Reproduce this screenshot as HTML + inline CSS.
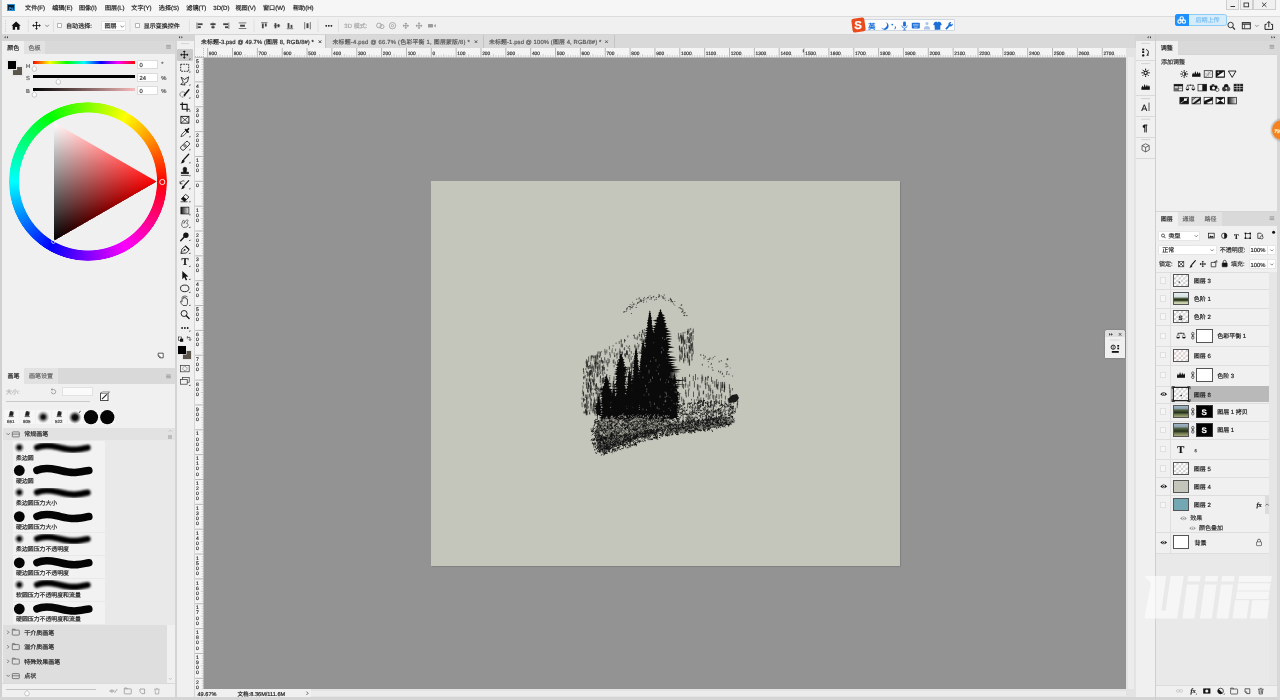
<!DOCTYPE html>
<html lang="zh-CN"><head><meta charset="utf-8"><title>Photoshop</title><style>
html,body{margin:0;padding:0}
body{width:1280px;height:700px;overflow:hidden;background:#d5d5d5;position:relative;font-family:"Liberation Sans","Noto Sans CJK SC",sans-serif;font-size:6px;color:#1a1a1a;text-rendering:geometricPrecision}
#app{position:absolute;left:0;top:0;width:1280px;height:700px;overflow:hidden;will-change:transform;transform:translateZ(0)}
#app div{position:absolute;box-sizing:border-box}
.t{white-space:nowrap;line-height:10px;height:10px;-webkit-text-stroke:0.18px currentColor}
#ov{position:absolute;left:0;top:0}
</style></head>
<body><div id="app">
<div style="left:0px;top:0px;width:1280px;height:16px;background:#f6f6f6;"></div>
<div style="left:0px;top:16px;width:1280px;height:0.8px;background:#dcdcdc;"></div>
<div style="left:0px;top:16.8px;width:1280px;height:17.4px;background:#f0f0f0;"></div>
<div style="left:0px;top:34.2px;width:1280px;height:6.5px;background:#d5d5d5;"></div>
<div style="left:0px;top:0px;width:1.5px;height:700px;background:#d0d0d0;"></div>
<div style="left:1.5px;top:40.7px;width:173px;height:13.7px;background:#d9d9d9;"></div>
<div style="left:1.5px;top:54.4px;width:173px;height:313.6px;background:#f0f0f0;"></div>
<div style="left:2px;top:40.7px;width:21.5px;height:14px;background:#f0f0f0;"></div>
<div style="left:23.5px;top:40.7px;width:21.5px;height:13.7px;background:#e2e2e2;"></div>
<div style="left:1.5px;top:368px;width:173px;height:15.5px;background:#d9d9d9;"></div>
<div style="left:1.5px;top:383.5px;width:173px;height:313.5px;background:#f0f0f0;"></div>
<div style="left:2px;top:368px;width:22.3px;height:15.7px;background:#f0f0f0;"></div>
<div style="left:24.3px;top:368px;width:34px;height:15.5px;background:#e2e2e2;"></div>
<div style="left:174.5px;top:34.2px;width:2px;height:666px;background:#d5d5d5;"></div>
<div style="left:176.5px;top:40.7px;width:17.5px;height:656.3px;background:#f0f0f0;"></div>
<div style="left:194px;top:34.2px;width:1.2px;height:666px;background:#d5d5d5;"></div>
<div style="left:195.2px;top:35px;width:939.8px;height:12.8px;background:#d9d9d9;"></div>
<div style="left:195.2px;top:47.8px;width:930.8px;height:9.2px;background:#f4f4f4;"></div>
<div style="left:195.2px;top:47.8px;width:8.6px;height:641.5px;background:#f4f4f4;"></div>
<div style="left:203.8px;top:57px;width:922.2px;height:632px;background:#939393;"></div>
<div style="left:431px;top:181px;width:469px;height:385px;background:#c5c6bb;box-shadow:0.5px 0.8px 1.5px rgba(0,0,0,.35);"></div>
<div style="left:1126px;top:47.8px;width:9.5px;height:649.2px;background:#e3e3e3;"></div>
<div style="left:1128px;top:57px;width:5.5px;height:632px;background:#ececec;"></div>
<div style="left:195.2px;top:689.3px;width:930.8px;height:7.7px;background:#e3e3e3;"></div>
<div style="left:311px;top:691px;width:815px;height:4.5px;background:#ececec;"></div>
<div style="left:195.2px;top:689.3px;width:115.8px;height:7.7px;background:#f0f0f0;"></div>
<div style="left:0px;top:697px;width:1280px;height:3px;background:#d5d5d5;"></div>
<div style="left:1135.5px;top:40.7px;width:19px;height:656.3px;background:#f0f0f0;"></div>
<div style="left:1154.5px;top:34.2px;width:1.8px;height:666px;background:#cfcfcf;"></div>
<div style="left:1156.3px;top:40.7px;width:121px;height:13.8px;background:#d9d9d9;"></div>
<div style="left:1156.3px;top:54.5px;width:121px;height:156.1px;background:#f0f0f0;"></div>
<div style="left:1156.3px;top:40.7px;width:21.7px;height:14px;background:#f0f0f0;"></div>
<div style="left:1156.3px;top:210.6px;width:121px;height:0.9px;background:#d5d5d5;"></div>
<div style="left:1156.3px;top:211.5px;width:121px;height:14.1px;background:#d9d9d9;"></div>
<div style="left:1156.3px;top:225.6px;width:121px;height:471.4px;background:#f0f0f0;"></div>
<div style="left:1156.3px;top:211.5px;width:21.7px;height:14.3px;background:#f0f0f0;"></div>
<div style="left:1178px;top:211.5px;width:21.7px;height:14.1px;background:#e2e2e2;"></div>
<div style="left:1199.7px;top:211.5px;width:21.9px;height:14.1px;background:#e2e2e2;"></div>
<div style="left:1277.3px;top:34.2px;width:2.7px;height:666px;background:#d8d8d8;"></div>
<div style="left:7px;top:3.8px;width:8.2px;height:7.3px;background:#061f35;border:0.4px solid #2b8fd0;border-radius:0.8px;"></div>
<div class="t" style="left:8.7px;top:3.8px;font-size:4px;color:#2f90d8;font-weight:bold;letter-spacing:-0.2px;">Ps</div>
<div class="t" style="left:25.1px;top:4.1px;font-size:6.1px;color:#222;">文件(F)</div>
<div class="t" style="left:52.2px;top:4.1px;font-size:6.1px;color:#222;">编辑(E)</div>
<div class="t" style="left:78.9px;top:4.1px;font-size:6.1px;color:#222;">图像(I)</div>
<div class="t" style="left:105px;top:4.1px;font-size:6.1px;color:#222;">图层(L)</div>
<div class="t" style="left:131.3px;top:4.1px;font-size:6.1px;color:#222;">文字(Y)</div>
<div class="t" style="left:158.8px;top:4.1px;font-size:6.1px;color:#222;">选择(S)</div>
<div class="t" style="left:186.3px;top:4.1px;font-size:6.1px;color:#222;">滤镜(T)</div>
<div class="t" style="left:213.3px;top:4.1px;font-size:6.1px;color:#222;">3D(D)</div>
<div class="t" style="left:235.5px;top:4.1px;font-size:6.1px;color:#222;">视图(V)</div>
<div class="t" style="left:263px;top:4.1px;font-size:6.1px;color:#222;">窗口(W)</div>
<div class="t" style="left:293px;top:4.1px;font-size:6.1px;color:#222;">帮助(H)</div>
<div style="left:1225.8px;top:0px;width:13.7px;height:9.5px;background:#f0f0f0;border:0.6px solid #cfcfcf;border-top:none;"></div>
<div style="left:1239.5px;top:0px;width:13.5px;height:9.5px;background:#f0f0f0;border:0.6px solid #cfcfcf;border-top:none;"></div>
<div style="left:1253px;top:0px;width:22.5px;height:9.5px;background:#f0f0f0;border:0.6px solid #cfcfcf;border-top:none;"></div>
<div style="left:57.2px;top:22.6px;width:5.2px;height:5.6px;background:#fff;border:0.6px solid #b5b5b5;border-radius:0.8px;"></div>
<div class="t" style="left:66px;top:21.9px;font-size:6.1px;color:#222;">自动选择:</div>
<div style="left:100.6px;top:21.4px;width:25.8px;height:9.8px;background:#fff;border:0.6px solid #e2e2e2;border-radius:1px;"></div>
<div class="t" style="left:104.5px;top:22.4px;font-size:6.1px;color:#222;">图层</div>
<div style="left:135.1px;top:22.6px;width:5.2px;height:5.6px;background:#fff;border:0.6px solid #b5b5b5;border-radius:0.8px;"></div>
<div class="t" style="left:143.8px;top:21.9px;font-size:6px;color:#222;">显示变换控件</div>
<div class="t" style="left:344.3px;top:21.9px;font-size:6px;color:#a8a8a8;">3D 模式:</div>
<div style="left:852px;top:19.1px;width:103.3px;height:12.3px;background:#fdfdfd;border:0.5px solid #cfd8e2;border-radius:1px;"></div>
<div style="left:852px;top:17.9px;width:13.4px;height:13.8px;background:#ea4a1c;border-radius:2.2px;transform:rotate(-8deg);"></div>
<div class="t" style="left:854.3px;top:21.3px;font-size:11.5px;color:#fff;font-weight:bold;line-height:10px;">S</div>
<div class="t" style="left:868.3px;top:22px;font-size:7.2px;color:#1b6fd8;font-weight:bold;">英</div>
<div style="left:1174.5px;top:13.8px;width:52px;height:12.6px;background:#d7ecfb;border-radius:2.5px;border:0.6px solid #8ecbf7;"></div>
<div style="left:1174.5px;top:13.8px;width:14.5px;height:12.6px;background:#1e90ff;border-radius:2.5px 0 0 2.5px;"></div>
<div class="t" style="left:1195.5px;top:16.4px;font-size:6px;color:#7cc0f4;">后期上传</div>
<div style="left:195.2px;top:35px;width:130.1px;height:13px;background:#f0f0f0;"></div>
<div style="left:325.3px;top:35px;width:0.6px;height:12.8px;background:#c4c4c4;"></div>
<div style="left:482.5px;top:35px;width:0.6px;height:12.8px;background:#c4c4c4;"></div>
<div style="left:613.5px;top:35px;width:0.6px;height:12.8px;background:#c4c4c4;"></div>
<div class="t" style="left:201px;top:37.8px;font-size:5.9px;color:#222;letter-spacing:0.075px;">未标题-3.psd @ 49.7% (图层 8, RGB/8#) *</div>
<div class="t" style="left:332.5px;top:37.8px;font-size:5.9px;color:#555;letter-spacing:0.22px;">未标题-4.psd @ 66.7% (色彩平衡 1, 图层蒙版/8) *</div>
<div class="t" style="left:489px;top:37.8px;font-size:5.9px;color:#555;letter-spacing:0.11px;">未标题-1.psd @ 100% (图层 4, RGB/8#) *</div>
<div style="left:195.2px;top:56.6px;width:930.8px;height:0.5px;background:#bdbdbd;"></div>
<div style="left:203.4px;top:47.8px;width:0.5px;height:641.5px;background:#bdbdbd;"></div>
<div style="left:195.2px;top:47.8px;width:8.4px;height:9.2px;background:#f4f4f4;border-right:0.5px dotted #bdbdbd;border-bottom:0.5px dotted #bdbdbd;"></div>
<div class="t" style="left:208.85px;top:49.5px;font-size:4.8px;color:#333;">900</div>
<div class="t" style="left:233.7px;top:49.5px;font-size:4.8px;color:#333;">800</div>
<div class="t" style="left:258.55px;top:49.5px;font-size:4.8px;color:#333;">700</div>
<div class="t" style="left:283.4px;top:49.5px;font-size:4.8px;color:#333;">600</div>
<div class="t" style="left:308.25px;top:49.5px;font-size:4.8px;color:#333;">500</div>
<div class="t" style="left:333.1px;top:49.5px;font-size:4.8px;color:#333;">400</div>
<div class="t" style="left:357.95px;top:49.5px;font-size:4.8px;color:#333;">300</div>
<div class="t" style="left:382.8px;top:49.5px;font-size:4.8px;color:#333;">200</div>
<div class="t" style="left:407.65px;top:49.5px;font-size:4.8px;color:#333;">100</div>
<div class="t" style="left:432.5px;top:49.5px;font-size:4.8px;color:#333;">0</div>
<div class="t" style="left:457.35px;top:49.5px;font-size:4.8px;color:#333;">100</div>
<div class="t" style="left:482.2px;top:49.5px;font-size:4.8px;color:#333;">200</div>
<div class="t" style="left:507.05px;top:49.5px;font-size:4.8px;color:#333;">300</div>
<div class="t" style="left:531.9px;top:49.5px;font-size:4.8px;color:#333;">400</div>
<div class="t" style="left:556.75px;top:49.5px;font-size:4.8px;color:#333;">500</div>
<div class="t" style="left:581.6px;top:49.5px;font-size:4.8px;color:#333;">600</div>
<div class="t" style="left:606.45px;top:49.5px;font-size:4.8px;color:#333;">700</div>
<div class="t" style="left:631.3px;top:49.5px;font-size:4.8px;color:#333;">800</div>
<div class="t" style="left:656.15px;top:49.5px;font-size:4.8px;color:#333;">900</div>
<div class="t" style="left:681px;top:49.5px;font-size:4.8px;color:#333;">1000</div>
<div class="t" style="left:705.85px;top:49.5px;font-size:4.8px;color:#333;">1100</div>
<div class="t" style="left:730.7px;top:49.5px;font-size:4.8px;color:#333;">1200</div>
<div class="t" style="left:755.55px;top:49.5px;font-size:4.8px;color:#333;">1300</div>
<div class="t" style="left:780.4px;top:49.5px;font-size:4.8px;color:#333;">1400</div>
<div class="t" style="left:805.25px;top:49.5px;font-size:4.8px;color:#333;">1500</div>
<div class="t" style="left:830.1px;top:49.5px;font-size:4.8px;color:#333;">1600</div>
<div class="t" style="left:854.95px;top:49.5px;font-size:4.8px;color:#333;">1700</div>
<div class="t" style="left:879.8px;top:49.5px;font-size:4.8px;color:#333;">1800</div>
<div class="t" style="left:904.65px;top:49.5px;font-size:4.8px;color:#333;">1900</div>
<div class="t" style="left:929.5px;top:49.5px;font-size:4.8px;color:#333;">2000</div>
<div class="t" style="left:954.35px;top:49.5px;font-size:4.8px;color:#333;">2100</div>
<div class="t" style="left:979.2px;top:49.5px;font-size:4.8px;color:#333;">2200</div>
<div class="t" style="left:1004.05px;top:49.5px;font-size:4.8px;color:#333;">2300</div>
<div class="t" style="left:1028.9px;top:49.5px;font-size:4.8px;color:#333;">2400</div>
<div class="t" style="left:1053.75px;top:49.5px;font-size:4.8px;color:#333;">2500</div>
<div class="t" style="left:1078.6px;top:49.5px;font-size:4.8px;color:#333;">2600</div>
<div class="t" style="left:1103.45px;top:49.5px;font-size:4.8px;color:#333;">2700</div>
<div class="t" style="left:196px;top:56.65px;font-size:5px;color:#2a2a2a;">5</div>
<div class="t" style="left:196px;top:61.75px;font-size:5px;color:#2a2a2a;">0</div>
<div class="t" style="left:196px;top:66.85px;font-size:5px;color:#2a2a2a;">0</div>
<div class="t" style="left:196px;top:81.5px;font-size:5px;color:#2a2a2a;">4</div>
<div class="t" style="left:196px;top:86.6px;font-size:5px;color:#2a2a2a;">0</div>
<div class="t" style="left:196px;top:91.7px;font-size:5px;color:#2a2a2a;">0</div>
<div class="t" style="left:196px;top:106.35px;font-size:5px;color:#2a2a2a;">3</div>
<div class="t" style="left:196px;top:111.45px;font-size:5px;color:#2a2a2a;">0</div>
<div class="t" style="left:196px;top:116.55px;font-size:5px;color:#2a2a2a;">0</div>
<div class="t" style="left:196px;top:131.2px;font-size:5px;color:#2a2a2a;">2</div>
<div class="t" style="left:196px;top:136.3px;font-size:5px;color:#2a2a2a;">0</div>
<div class="t" style="left:196px;top:141.4px;font-size:5px;color:#2a2a2a;">0</div>
<div class="t" style="left:196px;top:156.05px;font-size:5px;color:#2a2a2a;">1</div>
<div class="t" style="left:196px;top:161.15px;font-size:5px;color:#2a2a2a;">0</div>
<div class="t" style="left:196px;top:166.25px;font-size:5px;color:#2a2a2a;">0</div>
<div class="t" style="left:196px;top:180.9px;font-size:5px;color:#2a2a2a;">0</div>
<div class="t" style="left:196px;top:205.75px;font-size:5px;color:#2a2a2a;">1</div>
<div class="t" style="left:196px;top:210.85px;font-size:5px;color:#2a2a2a;">0</div>
<div class="t" style="left:196px;top:215.95px;font-size:5px;color:#2a2a2a;">0</div>
<div class="t" style="left:196px;top:230.6px;font-size:5px;color:#2a2a2a;">2</div>
<div class="t" style="left:196px;top:235.7px;font-size:5px;color:#2a2a2a;">0</div>
<div class="t" style="left:196px;top:240.8px;font-size:5px;color:#2a2a2a;">0</div>
<div class="t" style="left:196px;top:255.45px;font-size:5px;color:#2a2a2a;">3</div>
<div class="t" style="left:196px;top:260.55px;font-size:5px;color:#2a2a2a;">0</div>
<div class="t" style="left:196px;top:265.65px;font-size:5px;color:#2a2a2a;">0</div>
<div class="t" style="left:196px;top:280.3px;font-size:5px;color:#2a2a2a;">4</div>
<div class="t" style="left:196px;top:285.4px;font-size:5px;color:#2a2a2a;">0</div>
<div class="t" style="left:196px;top:290.5px;font-size:5px;color:#2a2a2a;">0</div>
<div class="t" style="left:196px;top:305.15px;font-size:5px;color:#2a2a2a;">5</div>
<div class="t" style="left:196px;top:310.25px;font-size:5px;color:#2a2a2a;">0</div>
<div class="t" style="left:196px;top:315.35px;font-size:5px;color:#2a2a2a;">0</div>
<div class="t" style="left:196px;top:330px;font-size:5px;color:#2a2a2a;">6</div>
<div class="t" style="left:196px;top:335.1px;font-size:5px;color:#2a2a2a;">0</div>
<div class="t" style="left:196px;top:340.2px;font-size:5px;color:#2a2a2a;">0</div>
<div class="t" style="left:196px;top:354.85px;font-size:5px;color:#2a2a2a;">7</div>
<div class="t" style="left:196px;top:359.95px;font-size:5px;color:#2a2a2a;">0</div>
<div class="t" style="left:196px;top:365.05px;font-size:5px;color:#2a2a2a;">0</div>
<div class="t" style="left:196px;top:379.7px;font-size:5px;color:#2a2a2a;">8</div>
<div class="t" style="left:196px;top:384.8px;font-size:5px;color:#2a2a2a;">0</div>
<div class="t" style="left:196px;top:389.9px;font-size:5px;color:#2a2a2a;">0</div>
<div class="t" style="left:196px;top:404.55px;font-size:5px;color:#2a2a2a;">9</div>
<div class="t" style="left:196px;top:409.65px;font-size:5px;color:#2a2a2a;">0</div>
<div class="t" style="left:196px;top:414.75px;font-size:5px;color:#2a2a2a;">0</div>
<div class="t" style="left:196px;top:429.4px;font-size:5px;color:#2a2a2a;">1</div>
<div class="t" style="left:196px;top:434.5px;font-size:5px;color:#2a2a2a;">0</div>
<div class="t" style="left:196px;top:439.6px;font-size:5px;color:#2a2a2a;">0</div>
<div class="t" style="left:196px;top:444.7px;font-size:5px;color:#2a2a2a;">0</div>
<div class="t" style="left:196px;top:454.25px;font-size:5px;color:#2a2a2a;">1</div>
<div class="t" style="left:196px;top:459.35px;font-size:5px;color:#2a2a2a;">1</div>
<div class="t" style="left:196px;top:464.45px;font-size:5px;color:#2a2a2a;">0</div>
<div class="t" style="left:196px;top:469.55px;font-size:5px;color:#2a2a2a;">0</div>
<div class="t" style="left:196px;top:479.1px;font-size:5px;color:#2a2a2a;">1</div>
<div class="t" style="left:196px;top:484.2px;font-size:5px;color:#2a2a2a;">2</div>
<div class="t" style="left:196px;top:489.3px;font-size:5px;color:#2a2a2a;">0</div>
<div class="t" style="left:196px;top:494.4px;font-size:5px;color:#2a2a2a;">0</div>
<div class="t" style="left:196px;top:503.95px;font-size:5px;color:#2a2a2a;">1</div>
<div class="t" style="left:196px;top:509.05px;font-size:5px;color:#2a2a2a;">3</div>
<div class="t" style="left:196px;top:514.15px;font-size:5px;color:#2a2a2a;">0</div>
<div class="t" style="left:196px;top:519.25px;font-size:5px;color:#2a2a2a;">0</div>
<div class="t" style="left:196px;top:528.8px;font-size:5px;color:#2a2a2a;">1</div>
<div class="t" style="left:196px;top:533.9px;font-size:5px;color:#2a2a2a;">4</div>
<div class="t" style="left:196px;top:539px;font-size:5px;color:#2a2a2a;">0</div>
<div class="t" style="left:196px;top:544.1px;font-size:5px;color:#2a2a2a;">0</div>
<div class="t" style="left:196px;top:553.65px;font-size:5px;color:#2a2a2a;">1</div>
<div class="t" style="left:196px;top:558.75px;font-size:5px;color:#2a2a2a;">5</div>
<div class="t" style="left:196px;top:563.85px;font-size:5px;color:#2a2a2a;">0</div>
<div class="t" style="left:196px;top:568.95px;font-size:5px;color:#2a2a2a;">0</div>
<div class="t" style="left:196px;top:578.5px;font-size:5px;color:#2a2a2a;">1</div>
<div class="t" style="left:196px;top:583.6px;font-size:5px;color:#2a2a2a;">6</div>
<div class="t" style="left:196px;top:588.7px;font-size:5px;color:#2a2a2a;">0</div>
<div class="t" style="left:196px;top:593.8px;font-size:5px;color:#2a2a2a;">0</div>
<div class="t" style="left:196px;top:603.35px;font-size:5px;color:#2a2a2a;">1</div>
<div class="t" style="left:196px;top:608.45px;font-size:5px;color:#2a2a2a;">7</div>
<div class="t" style="left:196px;top:613.55px;font-size:5px;color:#2a2a2a;">0</div>
<div class="t" style="left:196px;top:618.65px;font-size:5px;color:#2a2a2a;">0</div>
<div class="t" style="left:196px;top:628.2px;font-size:5px;color:#2a2a2a;">1</div>
<div class="t" style="left:196px;top:633.3px;font-size:5px;color:#2a2a2a;">8</div>
<div class="t" style="left:196px;top:638.4px;font-size:5px;color:#2a2a2a;">0</div>
<div class="t" style="left:196px;top:643.5px;font-size:5px;color:#2a2a2a;">0</div>
<div class="t" style="left:196px;top:653.05px;font-size:5px;color:#2a2a2a;">1</div>
<div class="t" style="left:196px;top:658.15px;font-size:5px;color:#2a2a2a;">9</div>
<div class="t" style="left:196px;top:663.25px;font-size:5px;color:#2a2a2a;">0</div>
<div class="t" style="left:196px;top:668.35px;font-size:5px;color:#2a2a2a;">0</div>
<div class="t" style="left:196px;top:677.9px;font-size:5px;color:#2a2a2a;">2</div>
<div class="t" style="left:196px;top:683px;font-size:5px;color:#2a2a2a;">0</div>
<div class="t" style="left:197.5px;top:689.5px;font-size:5.6px;color:#222;">49.67%</div>
<div class="t" style="left:237.5px;top:689.5px;font-size:5.6px;color:#222;">文档:8.36M/111.6M</div>
<div style="left:1104.5px;top:330px;width:20px;height:28px;background:#f0f0f0;border-radius:2.5px 2.5px 0 0;box-shadow:0 0 1.5px rgba(0,0,0,.35);overflow:hidden;"></div>
<div style="left:1104.5px;top:330px;width:20px;height:7.2px;background:#dedede;border-radius:2.5px 2.5px 0 0;"></div>
<div style="left:1271px;top:119.2px;width:22px;height:22px;background:#f5821f;border-radius:11px;border:0.8px solid #c9c9c9;box-shadow:0 0 2px rgba(0,0,0,.3);"></div>
<div class="t" style="left:1274.2px;top:126.5px;font-size:5px;color:#fff3c4;font-weight:bold;font-style:italic;">79</div>
<div class="t" style="left:7.2px;top:43.5px;font-size:6px;color:#222;">颜色</div>
<div class="t" style="left:28.6px;top:43.5px;font-size:6px;color:#666;">色板</div>
<div style="left:13.2px;top:66.6px;width:8.6px;height:8.6px;background:#5b554b;box-shadow:0 0 0 0.7px #f6f6f6,0 0 0 1.1px #cfcfcf;"></div>
<div style="left:7.6px;top:61.4px;width:8.7px;height:8.1px;background:#000;box-shadow:0 0 0 0.7px #f6f6f6,0 0 0 1.1px #cfcfcf;"></div>
<div class="t" style="left:26px;top:61.5px;font-size:5.8px;color:#555;">H</div>
<div class="t" style="left:26px;top:74.4px;font-size:5.8px;color:#555;">S</div>
<div class="t" style="left:26px;top:87.4px;font-size:5.8px;color:#555;">B</div>
<div style="left:33.1px;top:61.2px;width:101.8px;height:3.2px;background:linear-gradient(to right,#f00,#ff0 16.6%,#0f0 33.3%,#0ff 50%,#00f 66.6%,#f0f 83.3%,#f00);"></div>
<div style="left:33.1px;top:74.7px;width:101.8px;height:3.2px;background:#000;"></div>
<div style="left:33.1px;top:87.6px;width:101.8px;height:3.2px;background:linear-gradient(to right,#000,#7a5c5c 50%,#f7bcbc);"></div>
<div style="left:137.1px;top:59.7px;width:20.6px;height:9.6px;background:#fff;border:0.6px solid #dcdcdc;"></div>
<div class="t" style="left:139.6px;top:61px;font-size:5.8px;color:#333;">0</div>
<div class="t" style="left:161.3px;top:59.5px;font-size:5.8px;color:#444;">°</div>
<div style="left:137.1px;top:72.7px;width:20.6px;height:9.6px;background:#fff;border:0.6px solid #dcdcdc;"></div>
<div class="t" style="left:139.6px;top:74px;font-size:5.8px;color:#333;">24</div>
<div class="t" style="left:161.3px;top:74px;font-size:5.8px;color:#444;">%</div>
<div style="left:137.1px;top:85.7px;width:20.6px;height:9.6px;background:#fff;border:0.6px solid #dcdcdc;"></div>
<div class="t" style="left:139.6px;top:87px;font-size:5.8px;color:#333;">0</div>
<div class="t" style="left:161.3px;top:87px;font-size:5.8px;color:#444;">%</div>
<div style="left:8.599999999999994px;top:102.19999999999999px;width:158.8px;height:158.8px;border-radius:50%;background:conic-gradient(from 90deg,#f00,#f0f,#00f,#0ff,#0f0,#ff0,#f00);-webkit-mask:radial-gradient(circle,transparent 68.6px,#000 69.4px,#000 78.9px,transparent 79.7px);mask:radial-gradient(circle,transparent 68.6px,#000 69.4px,#000 78.9px,transparent 79.7px);"></div>
<div style="left:53.7px;top:122.2px;width:102.9px;height:118.8px;clip-path:polygon(0 0,100% 50%,0 100%);background:linear-gradient(to right,rgba(255,0,0,0),rgba(255,0,0,1)),conic-gradient(from 240deg at 100% 50%,#000 0deg,#404040 13.9deg,#808080 30deg,#bfbfbf 46.1deg,#fff 60deg,#fff 360deg);"></div>
<div class="t" style="left:7.6px;top:372.4px;font-size:6px;color:#222;">画笔</div>
<div class="t" style="left:29px;top:372.4px;font-size:6px;color:#666;">画笔设置</div>
<div class="t" style="left:6px;top:387.8px;font-size:6px;color:#b4b4b4;">大小:</div>
<div style="left:61.9px;top:386.7px;width:31.2px;height:9.8px;background:#fafafa;border:0.6px solid #e2e2e2;"></div>
<div style="left:6px;top:401.4px;width:84px;height:0.8px;background:#c9c9c9;"></div>
<div style="left:3.6px;top:409.8px;width:15.4px;height:14.6px;background:#f6f6f6;"></div>
<div style="left:19.6px;top:409.8px;width:15.4px;height:14.6px;background:#f6f6f6;"></div>
<div style="left:35.6px;top:409.8px;width:15.4px;height:14.6px;background:#f6f6f6;"></div>
<div style="left:51.6px;top:409.8px;width:15.4px;height:14.6px;background:#f6f6f6;"></div>
<div style="left:67.6px;top:409.8px;width:15.4px;height:14.6px;background:#f6f6f6;"></div>
<div style="left:83.6px;top:409.8px;width:15.4px;height:14.6px;background:#f6f6f6;"></div>
<div style="left:99.6px;top:409.8px;width:15.4px;height:14.6px;background:#f6f6f6;"></div>
<div class="t" style="left:7px;top:417.4px;font-size:4.4px;color:#333;">651</div>
<div class="t" style="left:23px;top:417.4px;font-size:4.4px;color:#333;">905</div>
<div class="t" style="left:55px;top:417.4px;font-size:4.4px;color:#333;">522</div>
<div style="left:3px;top:428px;width:171.5px;height:12.2px;background:#e2e2e2;"></div>
<div class="t" style="left:24.3px;top:430.4px;font-size:6px;color:#222;">常规画笔</div>
<div style="left:3px;top:440.2px;width:171.5px;height:184.4px;background:#e9e9e9;"></div>
<div style="left:13.3px;top:441.3px;width:91.6px;height:21.3px;background:#f2f2f2;"></div>
<div class="t" style="left:16px;top:454.1px;font-size:5.9px;color:#222;">柔边圆</div>
<div style="left:13.3px;top:463.2px;width:91.6px;height:22.4px;background:#f2f2f2;"></div>
<div class="t" style="left:16px;top:476.8px;font-size:5.9px;color:#222;">硬边圆</div>
<div style="left:13.3px;top:486.2px;width:91.6px;height:22.5px;background:#f2f2f2;"></div>
<div class="t" style="left:16px;top:499px;font-size:5.9px;color:#222;">柔边圆压力大小</div>
<div style="left:13.3px;top:509.3px;width:91.6px;height:22.7px;background:#f2f2f2;"></div>
<div class="t" style="left:16px;top:522.9px;font-size:5.9px;color:#222;">硬边圆压力大小</div>
<div style="left:13.3px;top:532.6px;width:91.6px;height:22.3px;background:#f2f2f2;"></div>
<div class="t" style="left:16px;top:545.4px;font-size:5.9px;color:#222;">柔边圆压力不透明度</div>
<div style="left:13.3px;top:555.5px;width:91.6px;height:22.5px;background:#f2f2f2;"></div>
<div class="t" style="left:16px;top:569.1px;font-size:5.9px;color:#222;">硬边圆压力不透明度</div>
<div style="left:13.3px;top:578.6px;width:91.6px;height:22.5px;background:#f2f2f2;"></div>
<div class="t" style="left:16px;top:591.4px;font-size:5.9px;color:#222;">软圆压力不透明度和流量</div>
<div style="left:13.3px;top:601.7px;width:91.6px;height:22.3px;background:#f2f2f2;"></div>
<div class="t" style="left:16px;top:615.3px;font-size:5.9px;color:#222;">硬圆压力不透明度和流量</div>
<div style="left:3px;top:624.6px;width:164px;height:58px;background:#dedede;"></div>
<div class="t" style="left:24.3px;top:628.5px;font-size:6px;color:#222;">干介质画笔</div>
<div class="t" style="left:24.3px;top:643px;font-size:6px;color:#222;">湿介质画笔</div>
<div class="t" style="left:24.3px;top:657.5px;font-size:6px;color:#222;">特殊效果画笔</div>
<div class="t" style="left:24.3px;top:672px;font-size:6px;color:#222;">点状</div>
<div style="left:168.3px;top:434.8px;width:4px;height:4.2px;background:#bdbdbd;"></div>
<div style="left:1.5px;top:683px;width:173px;height:0.6px;background:#dadada;"></div>
<div style="left:6.4px;top:688.6px;width:90px;height:0.8px;background:#c4c4c4;"></div>
<div style="left:177px;top:48.6px;width:15.8px;height:12.4px;background:#c9c9c9;border-radius:1.2px;"></div>
<div class="t" style="left:181.5px;top:258.42px;font-size:10.5px;color:#141414;font-family:'Liberation Serif',serif;font-weight:bold;line-height:10px;">T</div>
<div style="left:182.9px;top:350.6px;width:8.6px;height:8.6px;background:#5b554b;box-shadow:0 0 0 0.6px #d8d8d8;"></div>
<div style="left:177.7px;top:345.7px;width:8.7px;height:8.7px;background:#000;box-shadow:0 0 0 0.6px #e4e4e4;"></div>
<div style="left:1135.5px;top:60.2px;width:19px;height:0.6px;background:#d9d9d9;"></div>
<div style="left:1135.5px;top:95.4px;width:19px;height:0.6px;background:#d9d9d9;"></div>
<div class="t" style="left:1141.2px;top:103px;font-size:9px;color:#141414;line-height:10px;">A</div>
<div style="left:1135.5px;top:116px;width:19px;height:0.6px;background:#d9d9d9;"></div>
<div class="t" style="left:1142.4px;top:123.4px;font-size:9px;color:#141414;font-weight:bold;line-height:10px;">¶</div>
<div style="left:1135.5px;top:136.5px;width:19px;height:0.6px;background:#d9d9d9;"></div>
<div style="left:1135.5px;top:157.5px;width:19px;height:0.6px;background:#d9d9d9;"></div>
<div class="t" style="left:1160.8px;top:43.6px;font-size:6px;color:#222;">调整</div>
<div class="t" style="left:1161px;top:57.6px;font-size:6px;color:#333;">添加调整</div>
<div class="t" style="left:1160.8px;top:214.8px;font-size:6px;color:#222;">图层</div>
<div class="t" style="left:1182.6px;top:214.8px;font-size:6px;color:#666;">通道</div>
<div class="t" style="left:1204.4px;top:214.8px;font-size:6px;color:#666;">路径</div>
<div style="left:1158px;top:230.7px;width:42.3px;height:10.2px;background:#fff;border:0.6px solid #e6e6e6;border-radius:1px;"></div>
<div class="t" style="left:1168.6px;top:232.1px;font-size:6px;color:#222;">类型</div>
<div class="t" style="left:1234.1px;top:232.4px;font-size:7px;color:#141414;font-family:'Liberation Serif',serif;font-weight:bold;">T</div>
<div style="left:1158px;top:244.9px;width:58.5px;height:10.2px;background:#fff;border:0.6px solid #e6e6e6;border-radius:1px;"></div>
<div class="t" style="left:1162.2px;top:246.4px;font-size:6px;color:#222;">正常</div>
<div class="t" style="left:1219.8px;top:246.4px;font-size:6px;color:#333;">不透明度:</div>
<div style="left:1248.6px;top:244.9px;width:19.4px;height:10.2px;background:#fff;border:0.6px solid #e6e6e6;border-radius:1px 0 0 1px;"></div>
<div style="left:1268px;top:244.9px;width:7.6px;height:10.2px;background:#fff;border:0.6px solid #e6e6e6;border-left:none;border-radius:0 1px 1px 0;"></div>
<div class="t" style="left:1250.6px;top:246.4px;font-size:5.8px;color:#222;">100%</div>
<div class="t" style="left:1159px;top:260.4px;font-size:6px;color:#333;">锁定:</div>
<div class="t" style="left:1231px;top:260.4px;font-size:6px;color:#333;">填充:</div>
<div style="left:1248.6px;top:259px;width:19.4px;height:10.2px;background:#fff;border:0.6px solid #e6e6e6;border-radius:1px 0 0 1px;"></div>
<div style="left:1268px;top:259px;width:7.6px;height:10.2px;background:#fff;border:0.6px solid #e6e6e6;border-left:none;border-radius:0 1px 1px 0;"></div>
<div class="t" style="left:1250.6px;top:260.5px;font-size:5.8px;color:#222;">100%</div>
<div style="left:1156.3px;top:552.5px;width:113px;height:133px;background:#e9e9e9;"></div>
<div style="left:1269.4px;top:271.6px;width:7.9px;height:413.9px;background:#e6e6e6;"></div>
<div style="left:1156.3px;top:271.6px;width:113px;height:0.5px;background:#dedede;"></div>
<div style="left:1156.3px;top:289.4px;width:113px;height:0.5px;background:#dedede;"></div>
<div style="left:1156.3px;top:307.5px;width:113px;height:0.5px;background:#dedede;"></div>
<div style="left:1156.3px;top:325.4px;width:113px;height:0.5px;background:#dedede;"></div>
<div style="left:1156.3px;top:346px;width:113px;height:0.5px;background:#dedede;"></div>
<div style="left:1156.3px;top:364.6px;width:113px;height:0.5px;background:#dedede;"></div>
<div style="left:1156.3px;top:385.8px;width:113px;height:0.5px;background:#dedede;"></div>
<div style="left:1156.3px;top:402.5px;width:113px;height:0.5px;background:#dedede;"></div>
<div style="left:1156.3px;top:420.8px;width:113px;height:0.5px;background:#dedede;"></div>
<div style="left:1156.3px;top:438.8px;width:113px;height:0.5px;background:#dedede;"></div>
<div style="left:1156.3px;top:459.4px;width:113px;height:0.5px;background:#dedede;"></div>
<div style="left:1156.3px;top:477.4px;width:113px;height:0.5px;background:#dedede;"></div>
<div style="left:1156.3px;top:495.4px;width:113px;height:0.5px;background:#dedede;"></div>
<div style="left:1156.3px;top:532.4px;width:113px;height:0.5px;background:#dedede;"></div>
<div style="left:1156.3px;top:552.5px;width:113px;height:0.5px;background:#dedede;"></div>
<div style="left:1170.2px;top:271.6px;width:0.5px;height:281px;background:#dedede;"></div>
<div style="left:1170.7px;top:385.8px;width:98.7px;height:16.7px;background:#b9b9b9;"></div>
<div style="left:1160.1px;top:277.3px;width:6.4px;height:6.4px;background:#f6f6f6;border:0.5px solid #e0e0e0;"></div>
<div style="left:1173px;top:273.7px;width:16.2px;height:13.6px;border:0.7px solid #555;background:#fff;background-image:linear-gradient(45deg,#ccc 25%,transparent 25%,transparent 75%,#ccc 75%),linear-gradient(45deg,#ccc 25%,transparent 25%,transparent 75%,#ccc 75%);background-size:4.6px 4.6px;background-position:0 0,2.3px 2.3px;"></div>
<div class="t" style="left:1193.8px;top:276.9px;font-size:6px;color:#1a1a1a;">图层 3</div>
<div style="left:1160.1px;top:295.25px;width:6.4px;height:6.4px;background:#f6f6f6;border:0.5px solid #e0e0e0;"></div>
<div style="left:1173px;top:291.65px;width:16.2px;height:13.6px;border:0.7px solid #555;background:linear-gradient(to bottom,#e6eef1 0%,#d6e1e4 36%,#5a6b48 47%,#1f2a17 62%,#4b5a36 72%,#b9c19a 81%,#d6dabb 100%);"></div>
<div class="t" style="left:1193.8px;top:294.85px;font-size:6px;color:#1a1a1a;">色阶 1</div>
<div style="left:1160.1px;top:313.25px;width:6.4px;height:6.4px;background:#f6f6f6;border:0.5px solid #e0e0e0;"></div>
<div style="left:1173px;top:309.65px;width:16.2px;height:13.6px;border:0.7px solid #555;background:#fff;background-image:linear-gradient(45deg,#ccc 25%,transparent 25%,transparent 75%,#ccc 75%),linear-gradient(45deg,#ccc 25%,transparent 25%,transparent 75%,#ccc 75%);background-size:4.6px 4.6px;background-position:0 0,2.3px 2.3px;"></div>
<div class="t" style="left:1178.6px;top:313.85px;font-size:6.2px;color:#111;font-weight:bold;">S</div>
<div class="t" style="left:1193.8px;top:312.85px;font-size:6px;color:#1a1a1a;">色阶 2</div>
<div style="left:1160.1px;top:332.5px;width:6.4px;height:6.4px;background:#f6f6f6;border:0.5px solid #e0e0e0;"></div>
<div style="left:1196.4px;top:328.5px;width:16.2px;height:14.4px;border:0.7px solid #555;background:#fff;"></div>
<div class="t" style="left:1217.2px;top:332.1px;font-size:6px;color:#1a1a1a;">色彩平衡 1</div>
<div style="left:1160.1px;top:352.1px;width:6.4px;height:6.4px;background:#f6f6f6;border:0.5px solid #e0e0e0;"></div>
<div style="left:1173px;top:348.5px;width:16.2px;height:13.6px;border:0.7px solid #555;background:#fff;background-image:linear-gradient(45deg,#d9c9c9 25%,transparent 25%,transparent 75%,#d9c9c9 75%),linear-gradient(45deg,#d9c9c9 25%,transparent 25%,transparent 75%,#d9c9c9 75%);background-size:4.6px 4.6px;background-position:0 0,2.3px 2.3px;"></div>
<div class="t" style="left:1193.8px;top:351.7px;font-size:6px;color:#1a1a1a;">图层 6</div>
<div style="left:1160.1px;top:372px;width:6.4px;height:6.4px;background:#f6f6f6;border:0.5px solid #e0e0e0;"></div>
<div style="left:1196.4px;top:368px;width:16.2px;height:14.4px;border:0.7px solid #555;background:#fff;"></div>
<div class="t" style="left:1217.2px;top:371.6px;font-size:6px;color:#1a1a1a;">色阶 3</div>
<div style="left:1173px;top:387.35px;width:16.2px;height:13.6px;border:0.7px solid #222;background:#fff;background-image:linear-gradient(45deg,#ccc 25%,transparent 25%,transparent 75%,#ccc 75%),linear-gradient(45deg,#ccc 25%,transparent 25%,transparent 75%,#ccc 75%);background-size:4.6px 4.6px;background-position:0 0,2.3px 2.3px;"></div>
<div class="t" style="left:1193.8px;top:390.55px;font-size:6px;color:#1a1a1a;">图层 8</div>
<div style="left:1160.1px;top:408.45px;width:6.4px;height:6.4px;background:#f6f6f6;border:0.5px solid #e0e0e0;"></div>
<div style="left:1173px;top:404.85px;width:16.2px;height:13.6px;border:0.7px solid #555;background:linear-gradient(to bottom,#9fb6c8 0%,#8da2ae 22%,#4f5e3c 38%,#26301c 60%,#6f7c4e 78%,#a9a67e 100%);"></div>
<div style="left:1196.4px;top:404.85px;width:16.2px;height:13.6px;border:0.7px solid #333;background:#000;"></div>
<div class="t" style="left:1201.6px;top:407.95px;font-size:8px;color:#fff;font-weight:bold;">S</div>
<div class="t" style="left:1217.2px;top:408.05px;font-size:6px;color:#1a1a1a;">图层 1 拷贝</div>
<div style="left:1160.1px;top:426.6px;width:6.4px;height:6.4px;background:#f6f6f6;border:0.5px solid #e0e0e0;"></div>
<div style="left:1173px;top:423px;width:16.2px;height:13.6px;border:0.7px solid #555;background:linear-gradient(to bottom,#9fb6c8 0%,#8da2ae 22%,#4f5e3c 38%,#26301c 60%,#6f7c4e 78%,#a9a67e 100%);"></div>
<div style="left:1196.4px;top:423px;width:16.2px;height:13.6px;border:0.7px solid #333;background:#000;"></div>
<div class="t" style="left:1201.6px;top:426.1px;font-size:8px;color:#fff;font-weight:bold;">S</div>
<div class="t" style="left:1217.2px;top:426.2px;font-size:6px;color:#1a1a1a;">图层 1</div>
<div style="left:1160.1px;top:445.9px;width:6.4px;height:6.4px;background:#f6f6f6;border:0.5px solid #e0e0e0;"></div>
<div class="t" style="left:1177.2px;top:445.7px;font-size:10.5px;color:#141414;font-family:'Liberation Serif',serif;font-weight:bold;">T</div>
<div class="t" style="left:1194.4px;top:445.7px;font-size:5px;color:#222;">s</div>
<div style="left:1160.1px;top:465.2px;width:6.4px;height:6.4px;background:#f6f6f6;border:0.5px solid #e0e0e0;"></div>
<div style="left:1173px;top:461.6px;width:16.2px;height:13.6px;border:0.7px solid #555;background:#fff;background-image:linear-gradient(45deg,#ccc 25%,transparent 25%,transparent 75%,#ccc 75%),linear-gradient(45deg,#ccc 25%,transparent 25%,transparent 75%,#ccc 75%);background-size:4.6px 4.6px;background-position:0 0,2.3px 2.3px;"></div>
<div class="t" style="left:1193.8px;top:464.8px;font-size:6px;color:#1a1a1a;">图层 5</div>
<div style="left:1173px;top:479.6px;width:16.2px;height:13.6px;border:0.7px solid #555;background:#c5c6bb;"></div>
<div class="t" style="left:1193.8px;top:482.8px;font-size:6px;color:#1a1a1a;">图层 4</div>
<div style="left:1160.1px;top:501.5px;width:6.4px;height:6.4px;background:#f6f6f6;border:0.5px solid #e0e0e0;"></div>
<div style="left:1173px;top:497.9px;width:16.2px;height:13.6px;border:0.7px solid #555;background:#73a7b4;"></div>
<div class="t" style="left:1193.8px;top:501.1px;font-size:6px;color:#1a1a1a;">图层 2</div>
<div class="t" style="left:1256.4px;top:500.9px;font-size:6.4px;color:#222;font-style:italic;font-family:'Liberation Serif',serif;font-weight:bold;">fx</div>
<div style="left:1265px;top:495.9px;width:4.4px;height:18px;background:#dcdcdc;"></div>
<div class="t" style="left:1190.2px;top:514.4px;font-size:6px;color:#333;">效果</div>
<div class="t" style="left:1199px;top:524.4px;font-size:6px;color:#333;">颜色叠加</div>
<div style="left:1173px;top:535.45px;width:16.2px;height:14px;border:0.7px solid #555;background:#fff;"></div>
<div class="t" style="left:1194.6px;top:538.85px;font-size:6px;color:#1a1a1a;">背景</div>
<div style="left:1156.3px;top:685.4px;width:121px;height:0.6px;background:#dcdcdc;"></div>
<div class="t" style="left:1190.4px;top:687.2px;font-size:6.6px;color:#222;font-style:italic;font-family:'Liberation Serif',serif;font-weight:bold;">fx</div>
<svg id="ov" width="1280" height="700" viewBox="0 0 1280 700">
<path d="M1230.5 6.5h4.5" stroke="#333" stroke-width="1" fill="none"/>
<rect x="1244" y="3" width="4.6" height="3.8" stroke="#333" stroke-width="0.9" fill="none"/>
<path d="M1262 2.6l4.4 4.2M1266.4 2.6l-4.4 4.2" stroke="#333" stroke-width="0.9" fill="none"/>
<path d="M5.5 20v12" stroke="#c8c8c8" stroke-width="0.8" stroke-dasharray="0.8 0.8"/>
<path d="M11.5 25.8l4.6-4.3 4.6 4.3h-1.2v3.9h-2.4v-2.6h-2v2.6h-2.4v-3.9z" fill="#111"/>
<path d="M28.3 19.5v12.5M53.4 19.5v12.5M130 19.5v12.5M189.4 19.5v12.5M254 19.5v12.5M318 19.5v12.5M338.5 19.5v12.5" stroke="#d9d9d9" stroke-width="0.7"/>
<path d="M32.9 25.6h7.2M36.5 22.0v7.2" stroke="#111" stroke-width="0.9" fill="none"/>
<path d="M32.3 25.6l1.5 -1.5v3.0zM40.7 25.6l-1.5 -1.5v3.0zM36.5 21.4l-1.5 1.5h3.0zM36.5 29.800000000000004l-1.5 -1.5h3.0z" fill="#111"/>
<path d="M45.3 24.8l1.8 1.8 1.8-1.8" stroke="#555" stroke-width="0.7" fill="none"/>
<path d="M120.5 25.6l1.7 1.7 1.7-1.7" stroke="#555" stroke-width="0.7" fill="none"/>
<path d="M197 22.5v6.4" stroke="#444" stroke-width="0.7"/><rect x="197.8" y="23.3" width="4.8" height="1.8" fill="#444"/><rect x="197.8" y="26.3" width="3" height="1.8" fill="#444"/>
<path d="M213 22.5v6.4" stroke="#444" stroke-width="0.7"/><rect x="210.4" y="23.3" width="5.2" height="1.8" fill="#444"/><rect x="211.4" y="26.3" width="3.2" height="1.8" fill="#444"/>
<path d="M228.8 22.5v6.4" stroke="#444" stroke-width="0.7"/><rect x="223.20000000000002" y="23.3" width="4.8" height="1.8" fill="#444"/><rect x="225.0" y="26.3" width="3" height="1.8" fill="#444"/>
<path d="M238.7 22.9h7.6M238.7 28.5h7.6" stroke="#444" stroke-width="0.7"/><rect x="240.1" y="24.7" width="4.8" height="2" fill="#444"/>
<path d="M261.1 22.7h6.4" stroke="#444" stroke-width="0.7"/><rect x="261.90000000000003" y="23.5" width="1.8" height="4.8" fill="#444"/><rect x="264.90000000000003" y="23.5" width="1.8" height="3" fill="#444"/>
<path d="M273.8 25.7h6.4" stroke="#444" stroke-width="0.7"/><rect x="274.6" y="23.099999999999998" width="1.8" height="5.2" fill="#444"/><rect x="277.6" y="24.099999999999998" width="1.8" height="3.2" fill="#444"/>
<path d="M286.8 28.7h6.4" stroke="#444" stroke-width="0.7"/><rect x="287.6" y="23.099999999999998" width="1.8" height="4.8" fill="#444"/><rect x="290.6" y="24.9" width="1.8" height="3" fill="#444"/>
<path d="M304.7 22.099999999999998v7.2M310.3 22.099999999999998v7.2" stroke="#444" stroke-width="0.7"/><rect x="306.5" y="23.3" width="2" height="4.8" fill="#444"/>
<circle cx="326.2" cy="25.8" r="0.9" fill="#111"/>
<circle cx="328.8" cy="25.8" r="0.9" fill="#111"/>
<circle cx="331.40000000000003" cy="25.8" r="0.9" fill="#111"/>
<circle cx="379" cy="25.5" r="2.4" fill="none" stroke="#9a9a9a" stroke-width="0.8"/><circle cx="382" cy="26.6" r="2" fill="none" stroke="#9a9a9a" stroke-width="0.8"/>
<circle cx="392.5" cy="25.7" r="3.2" fill="none" stroke="#9a9a9a" stroke-width="0.8"/><circle cx="392.5" cy="25.7" r="1.2" fill="none" stroke="#9a9a9a" stroke-width="0.7"/>
<path d="M403.2 25.7h5.2M405.8 23.099999999999998v5.2" stroke="#9a9a9a" stroke-width="0.9" fill="none"/>
<path d="M402.59999999999997 25.7l1.5 -1.5v3.0zM409.00000000000006 25.7l-1.5 -1.5v3.0zM405.8 22.499999999999996l-1.5 1.5h3.0zM405.8 28.900000000000002l-1.5 -1.5h3.0z" fill="#9a9a9a"/>
<path d="M416.2 25.7h5.6M419 22.9v5.6" stroke="#9a9a9a" stroke-width="0.9" fill="none"/>
<path d="M415.59999999999997 25.7l1.5 -1.5v3.0zM422.40000000000003 25.7l-1.5 -1.5v3.0zM419 22.299999999999997l-1.5 1.5h3.0zM419 29.1l-1.5 -1.5h3.0z" fill="#9a9a9a"/>
<rect x="428" y="23.9" width="5" height="3.6" rx="0.6" fill="#9a9a9a"/><path d="M433.6 25.7l2.2-1.8v3.6z" fill="#9a9a9a"/>
<g transform="translate(0,1)">
<path d="M885.6 21a4 4 0 1 1-4.6 5.6a3.4 3.4 0 0 0 4.6-5.6z" fill="#1b6fd8"/>
<circle cx="892.3" cy="23.6" r="0.9" fill="#1b6fd8"/><path d="M895.2 25.4q1 1.6-.6 2.8" stroke="#1b6fd8" stroke-width="1" fill="none"/>
<rect x="903.1" y="20.6" width="2.8" height="5" rx="1.4" fill="#1b6fd8"/><path d="M901.8 24.4a2.7 2.7 0 0 0 5.4 0M904.5 27.2v1.6M902.9 29h3.2" stroke="#1b6fd8" stroke-width="0.7" fill="none"/>
<rect x="911.8" y="21.8" width="8" height="5.8" rx="0.8" fill="#1b6fd8"/><path d="M913 23.4h5.6M913 24.8h5.6M914 26.3h3.6" stroke="#cfe2fb" stroke-width="0.6"/>
<circle cx="927" cy="22.4" r="1.5" fill="#a9c4e8"/><path d="M923.8 28.6q0-3.6 3.2-3.6t3.2 3.6z" fill="#a9c4e8"/>
<path d="M934.2 21.6l2-1 1.3 1 1.3-1 2 1 1 2.2-1.5.8v4.2h-5.6v-4.2l-1.5-.8z" fill="#1b6fd8"/>
<path d="M951.5 21.2a2.3 2.3 0 0 0-3 2.9l-3.2 3.4 1.3 1.2 3.2-3.4a2.3 2.3 0 0 0 2.9-2.9l-1.4 1.3-1.1-1.1z" fill="#1b6fd8"/>
</g>
<g fill="none" stroke="#fff" stroke-width="1.1"><circle cx="1181.7" cy="18.4" r="1.7"/><circle cx="1179.5" cy="21.6" r="1.7"/><circle cx="1183.9" cy="21.6" r="1.7"/></g>
<circle cx="1230.6" cy="25" r="2.7" fill="none" stroke="#222" stroke-width="0.9"/><path d="M1232.6 27.1l2.3 2.4" stroke="#222" stroke-width="1.1"/>
<rect x="1242.3" y="22.6" width="8" height="6.2" fill="none" stroke="#222" stroke-width="0.9"/><path d="M1242.3 24.1h8" stroke="#222" stroke-width="1.2"/><path d="M1244.6 24.4v4.2" stroke="#222" stroke-width="0.7"/>
<path d="M1255.2 24.9l1.7 1.7 1.7-1.7" stroke="#666" stroke-width="0.7" fill="none"/>
<path d="M1266.6 24.4h-1.6v5h7.6v-5h-1.6" fill="none" stroke="#111" stroke-width="0.9"/><path d="M1268.8 27.2v-5.4M1267 23.4l1.8-1.9 1.8 1.9" fill="none" stroke="#111" stroke-width="0.9"/>
<path d="M318.7 40.4l2.6 2.6M321.3 40.4l-2.6 2.6" stroke="#222" stroke-width="0.8"/>
<path d="M474.7 40.4l2.6 2.6M477.3 40.4l-2.6 2.6" stroke="#444" stroke-width="0.8"/>
<path d="M605.2 40.4l2.6 2.6M607.8 40.4l-2.6 2.6" stroke="#444" stroke-width="0.8"/>
<path d="M207.65 48v9M232.50 48v9M257.35 48v9M282.20 48v9M307.05 48v9M331.90 48v9M356.75 48v9M381.60 48v9M406.45 48v9M431.30 48v9M456.15 48v9M481.00 48v9M505.85 48v9M530.70 48v9M555.55 48v9M580.40 48v9M605.25 48v9M630.10 48v9M654.95 48v9M679.80 48v9M704.65 48v9M729.50 48v9M754.35 48v9M779.20 48v9M804.05 48v9M828.90 48v9M853.75 48v9M878.60 48v9M903.45 48v9M928.30 48v9M953.15 48v9M978.00 48v9M1002.85 48v9M1027.70 48v9M1052.55 48v9M1077.40 48v9M1102.25 48v9" stroke="#777" stroke-width="0.5"/>
<path d="M220.08 54.2v2.6M244.93 54.2v2.6M269.78 54.2v2.6M294.62 54.2v2.6M319.48 54.2v2.6M344.32 54.2v2.6M369.18 54.2v2.6M394.03 54.2v2.6M418.88 54.2v2.6M443.73 54.2v2.6M468.58 54.2v2.6M493.43 54.2v2.6M518.27 54.2v2.6M543.12 54.2v2.6M567.97 54.2v2.6M592.83 54.2v2.6M617.67 54.2v2.6M642.52 54.2v2.6M667.38 54.2v2.6M692.22 54.2v2.6M717.08 54.2v2.6M741.92 54.2v2.6M766.77 54.2v2.6M791.62 54.2v2.6M816.47 54.2v2.6M841.33 54.2v2.6M866.17 54.2v2.6M891.02 54.2v2.6M915.88 54.2v2.6M940.72 54.2v2.6M965.58 54.2v2.6M990.42 54.2v2.6M1015.28 54.2v2.6M1040.12 54.2v2.6M1064.97 54.2v2.6M1089.83 54.2v2.6M1114.67 54.2v2.6M210.14 55.2v1.6M212.62 55.2v1.6M215.11 55.2v1.6M217.59 55.2v1.6M222.56 55.2v1.6M225.05 55.2v1.6M227.53 55.2v1.6M230.02 55.2v1.6M234.99 55.2v1.6M237.47 55.2v1.6M239.96 55.2v1.6M242.44 55.2v1.6M247.41 55.2v1.6M249.90 55.2v1.6M252.38 55.2v1.6M254.87 55.2v1.6M259.84 55.2v1.6M262.32 55.2v1.6M264.81 55.2v1.6M267.29 55.2v1.6M272.26 55.2v1.6M274.75 55.2v1.6M277.23 55.2v1.6M279.72 55.2v1.6M284.69 55.2v1.6M287.17 55.2v1.6M289.65 55.2v1.6M292.14 55.2v1.6M297.11 55.2v1.6M299.59 55.2v1.6M302.08 55.2v1.6M304.56 55.2v1.6M309.54 55.2v1.6M312.02 55.2v1.6M314.50 55.2v1.6M316.99 55.2v1.6M321.96 55.2v1.6M324.44 55.2v1.6M326.93 55.2v1.6M329.42 55.2v1.6M334.38 55.2v1.6M336.87 55.2v1.6M339.35 55.2v1.6M341.84 55.2v1.6M346.81 55.2v1.6M349.29 55.2v1.6M351.78 55.2v1.6M354.26 55.2v1.6M359.24 55.2v1.6M361.72 55.2v1.6M364.20 55.2v1.6M366.69 55.2v1.6M371.66 55.2v1.6M374.14 55.2v1.6M376.63 55.2v1.6M379.12 55.2v1.6M384.09 55.2v1.6M386.57 55.2v1.6M389.06 55.2v1.6M391.54 55.2v1.6M396.51 55.2v1.6M399.00 55.2v1.6M401.48 55.2v1.6M403.97 55.2v1.6M408.94 55.2v1.6M411.42 55.2v1.6M413.90 55.2v1.6M416.39 55.2v1.6M421.36 55.2v1.6M423.84 55.2v1.6M426.33 55.2v1.6M428.81 55.2v1.6M433.79 55.2v1.6M436.27 55.2v1.6M438.75 55.2v1.6M441.24 55.2v1.6M446.21 55.2v1.6M448.69 55.2v1.6M451.18 55.2v1.6M453.67 55.2v1.6M458.64 55.2v1.6M461.12 55.2v1.6M463.61 55.2v1.6M466.09 55.2v1.6M471.06 55.2v1.6M473.55 55.2v1.6M476.03 55.2v1.6M478.52 55.2v1.6M483.49 55.2v1.6M485.97 55.2v1.6M488.45 55.2v1.6M490.94 55.2v1.6M495.91 55.2v1.6M498.39 55.2v1.6M500.88 55.2v1.6M503.37 55.2v1.6M508.34 55.2v1.6M510.82 55.2v1.6M513.31 55.2v1.6M515.79 55.2v1.6M520.76 55.2v1.6M523.25 55.2v1.6M525.73 55.2v1.6M528.22 55.2v1.6M533.19 55.2v1.6M535.67 55.2v1.6M538.16 55.2v1.6M540.64 55.2v1.6M545.61 55.2v1.6M548.10 55.2v1.6M550.58 55.2v1.6M553.07 55.2v1.6M558.03 55.2v1.6M560.52 55.2v1.6M563.00 55.2v1.6M565.49 55.2v1.6M570.46 55.2v1.6M572.94 55.2v1.6M575.43 55.2v1.6M577.91 55.2v1.6M582.89 55.2v1.6M585.37 55.2v1.6M587.86 55.2v1.6M590.34 55.2v1.6M595.31 55.2v1.6M597.80 55.2v1.6M600.28 55.2v1.6M602.77 55.2v1.6M607.74 55.2v1.6M610.22 55.2v1.6M612.71 55.2v1.6M615.19 55.2v1.6M620.16 55.2v1.6M622.64 55.2v1.6M625.13 55.2v1.6M627.62 55.2v1.6M632.59 55.2v1.6M635.07 55.2v1.6M637.56 55.2v1.6M640.04 55.2v1.6M645.01 55.2v1.6M647.50 55.2v1.6M649.98 55.2v1.6M652.47 55.2v1.6M657.44 55.2v1.6M659.92 55.2v1.6M662.41 55.2v1.6M664.89 55.2v1.6M669.86 55.2v1.6M672.35 55.2v1.6M674.83 55.2v1.6M677.32 55.2v1.6M682.28 55.2v1.6M684.77 55.2v1.6M687.25 55.2v1.6M689.74 55.2v1.6M694.71 55.2v1.6M697.19 55.2v1.6M699.68 55.2v1.6M702.16 55.2v1.6M707.14 55.2v1.6M709.62 55.2v1.6M712.11 55.2v1.6M714.59 55.2v1.6M719.56 55.2v1.6M722.05 55.2v1.6M724.53 55.2v1.6M727.02 55.2v1.6M731.99 55.2v1.6M734.47 55.2v1.6M736.96 55.2v1.6M739.44 55.2v1.6M744.41 55.2v1.6M746.89 55.2v1.6M749.38 55.2v1.6M751.87 55.2v1.6M756.84 55.2v1.6M759.32 55.2v1.6M761.81 55.2v1.6M764.29 55.2v1.6M769.26 55.2v1.6M771.75 55.2v1.6M774.23 55.2v1.6M776.72 55.2v1.6M781.69 55.2v1.6M784.17 55.2v1.6M786.66 55.2v1.6M789.14 55.2v1.6M794.11 55.2v1.6M796.60 55.2v1.6M799.08 55.2v1.6M801.57 55.2v1.6M806.53 55.2v1.6M809.02 55.2v1.6M811.50 55.2v1.6M813.99 55.2v1.6M818.96 55.2v1.6M821.44 55.2v1.6M823.93 55.2v1.6M826.41 55.2v1.6M831.39 55.2v1.6M833.87 55.2v1.6M836.36 55.2v1.6M838.84 55.2v1.6M843.81 55.2v1.6M846.30 55.2v1.6M848.78 55.2v1.6M851.27 55.2v1.6M856.24 55.2v1.6M858.72 55.2v1.6M861.21 55.2v1.6M863.69 55.2v1.6M868.66 55.2v1.6M871.14 55.2v1.6M873.63 55.2v1.6M876.12 55.2v1.6M881.09 55.2v1.6M883.57 55.2v1.6M886.06 55.2v1.6M888.54 55.2v1.6M893.51 55.2v1.6M896.00 55.2v1.6M898.48 55.2v1.6M900.97 55.2v1.6M905.94 55.2v1.6M908.42 55.2v1.6M910.91 55.2v1.6M913.39 55.2v1.6M918.36 55.2v1.6M920.85 55.2v1.6M923.33 55.2v1.6M925.82 55.2v1.6M930.78 55.2v1.6M933.27 55.2v1.6M935.75 55.2v1.6M938.24 55.2v1.6M943.21 55.2v1.6M945.69 55.2v1.6M948.18 55.2v1.6M950.66 55.2v1.6M955.64 55.2v1.6M958.12 55.2v1.6M960.61 55.2v1.6M963.09 55.2v1.6M968.06 55.2v1.6M970.55 55.2v1.6M973.03 55.2v1.6M975.52 55.2v1.6M980.49 55.2v1.6M982.97 55.2v1.6M985.46 55.2v1.6M987.94 55.2v1.6M992.91 55.2v1.6M995.39 55.2v1.6M997.88 55.2v1.6M1000.37 55.2v1.6M1005.34 55.2v1.6M1007.82 55.2v1.6M1010.31 55.2v1.6M1012.79 55.2v1.6M1017.76 55.2v1.6M1020.25 55.2v1.6M1022.73 55.2v1.6M1025.22 55.2v1.6M1030.18 55.2v1.6M1032.67 55.2v1.6M1035.15 55.2v1.6M1037.64 55.2v1.6M1042.61 55.2v1.6M1045.10 55.2v1.6M1047.58 55.2v1.6M1050.07 55.2v1.6M1055.03 55.2v1.6M1057.52 55.2v1.6M1060.00 55.2v1.6M1062.49 55.2v1.6M1067.46 55.2v1.6M1069.94 55.2v1.6M1072.43 55.2v1.6M1074.91 55.2v1.6M1079.88 55.2v1.6M1082.37 55.2v1.6M1084.86 55.2v1.6M1087.34 55.2v1.6M1092.31 55.2v1.6M1094.80 55.2v1.6M1097.28 55.2v1.6M1099.77 55.2v1.6M1104.73 55.2v1.6M1107.22 55.2v1.6M1109.70 55.2v1.6M1112.19 55.2v1.6M1117.16 55.2v1.6M1119.64 55.2v1.6M1122.13 55.2v1.6M1124.62 55.2v1.6" stroke="#999" stroke-width="0.45"/>
<path d="M803.3 49.4v3" stroke="#222" stroke-width="0.8"/>
<path d="M195.2 81.90h8.4M195.2 106.75h8.4M195.2 131.60h8.4M195.2 156.45h8.4M195.2 181.30h8.4M195.2 206.15h8.4M195.2 231.00h8.4M195.2 255.85h8.4M195.2 280.70h8.4M195.2 305.55h8.4M195.2 330.40h8.4M195.2 355.25h8.4M195.2 380.10h8.4M195.2 404.95h8.4M195.2 429.80h8.4M195.2 454.65h8.4M195.2 479.50h8.4M195.2 504.35h8.4M195.2 529.20h8.4M195.2 554.05h8.4M195.2 578.90h8.4M195.2 603.75h8.4M195.2 628.60h8.4M195.2 653.45h8.4M195.2 678.30h8.4" stroke="#777" stroke-width="0.5"/>
<path d="M200.8 69.48h2.6M200.8 94.33h2.6M200.8 119.17h2.6M200.8 144.03h2.6M200.8 168.88h2.6M200.8 193.73h2.6M200.8 218.58h2.6M200.8 243.43h2.6M200.8 268.28h2.6M200.8 293.13h2.6M200.8 317.98h2.6M200.8 342.83h2.6M200.8 367.68h2.6M200.8 392.53h2.6M200.8 417.38h2.6M200.8 442.23h2.6M200.8 467.08h2.6M200.8 491.93h2.6M200.8 516.77h2.6M200.8 541.62h2.6M200.8 566.47h2.6M200.8 591.33h2.6M200.8 616.17h2.6M200.8 641.02h2.6M200.8 665.88h2.6M201.8 59.54h1.6M201.8 62.02h1.6M201.8 64.51h1.6M201.8 66.99h1.6M201.8 71.96h1.6M201.8 74.45h1.6M201.8 76.93h1.6M201.8 79.42h1.6M201.8 84.39h1.6M201.8 86.87h1.6M201.8 89.36h1.6M201.8 91.84h1.6M201.8 96.81h1.6M201.8 99.30h1.6M201.8 101.78h1.6M201.8 104.27h1.6M201.8 109.23h1.6M201.8 111.72h1.6M201.8 114.20h1.6M201.8 116.69h1.6M201.8 121.66h1.6M201.8 124.15h1.6M201.8 126.63h1.6M201.8 129.12h1.6M201.8 134.09h1.6M201.8 136.57h1.6M201.8 139.06h1.6M201.8 141.54h1.6M201.8 146.51h1.6M201.8 149.00h1.6M201.8 151.48h1.6M201.8 153.97h1.6M201.8 158.94h1.6M201.8 161.42h1.6M201.8 163.91h1.6M201.8 166.39h1.6M201.8 171.36h1.6M201.8 173.85h1.6M201.8 176.33h1.6M201.8 178.82h1.6M201.8 183.79h1.6M201.8 186.27h1.6M201.8 188.76h1.6M201.8 191.24h1.6M201.8 196.21h1.6M201.8 198.70h1.6M201.8 201.18h1.6M201.8 203.67h1.6M201.8 208.64h1.6M201.8 211.12h1.6M201.8 213.61h1.6M201.8 216.09h1.6M201.8 221.06h1.6M201.8 223.55h1.6M201.8 226.03h1.6M201.8 228.52h1.6M201.8 233.49h1.6M201.8 235.97h1.6M201.8 238.46h1.6M201.8 240.94h1.6M201.8 245.91h1.6M201.8 248.40h1.6M201.8 250.88h1.6M201.8 253.37h1.6M201.8 258.34h1.6M201.8 260.82h1.6M201.8 263.31h1.6M201.8 265.79h1.6M201.8 270.76h1.6M201.8 273.25h1.6M201.8 275.73h1.6M201.8 278.22h1.6M201.8 283.19h1.6M201.8 285.67h1.6M201.8 288.16h1.6M201.8 290.64h1.6M201.8 295.61h1.6M201.8 298.10h1.6M201.8 300.58h1.6M201.8 303.07h1.6M201.8 308.04h1.6M201.8 310.52h1.6M201.8 313.00h1.6M201.8 315.49h1.6M201.8 320.46h1.6M201.8 322.94h1.6M201.8 325.43h1.6M201.8 327.92h1.6M201.8 332.89h1.6M201.8 335.37h1.6M201.8 337.86h1.6M201.8 340.34h1.6M201.8 345.31h1.6M201.8 347.80h1.6M201.8 350.28h1.6M201.8 352.77h1.6M201.8 357.74h1.6M201.8 360.22h1.6M201.8 362.70h1.6M201.8 365.19h1.6M201.8 370.16h1.6M201.8 372.64h1.6M201.8 375.13h1.6M201.8 377.62h1.6M201.8 382.59h1.6M201.8 385.07h1.6M201.8 387.56h1.6M201.8 390.04h1.6M201.8 395.01h1.6M201.8 397.50h1.6M201.8 399.98h1.6M201.8 402.47h1.6M201.8 407.44h1.6M201.8 409.92h1.6M201.8 412.41h1.6M201.8 414.89h1.6M201.8 419.86h1.6M201.8 422.35h1.6M201.8 424.83h1.6M201.8 427.32h1.6M201.8 432.29h1.6M201.8 434.77h1.6M201.8 437.25h1.6M201.8 439.74h1.6M201.8 444.71h1.6M201.8 447.19h1.6M201.8 449.68h1.6M201.8 452.17h1.6M201.8 457.14h1.6M201.8 459.62h1.6M201.8 462.11h1.6M201.8 464.59h1.6M201.8 469.56h1.6M201.8 472.05h1.6M201.8 474.53h1.6M201.8 477.02h1.6M201.8 481.99h1.6M201.8 484.47h1.6M201.8 486.96h1.6M201.8 489.44h1.6M201.8 494.41h1.6M201.8 496.90h1.6M201.8 499.38h1.6M201.8 501.87h1.6M201.8 506.84h1.6M201.8 509.32h1.6M201.8 511.81h1.6M201.8 514.29h1.6M201.8 519.26h1.6M201.8 521.75h1.6M201.8 524.23h1.6M201.8 526.72h1.6M201.8 531.69h1.6M201.8 534.17h1.6M201.8 536.66h1.6M201.8 539.14h1.6M201.8 544.11h1.6M201.8 546.60h1.6M201.8 549.08h1.6M201.8 551.57h1.6M201.8 556.53h1.6M201.8 559.02h1.6M201.8 561.50h1.6M201.8 563.99h1.6M201.8 568.96h1.6M201.8 571.44h1.6M201.8 573.93h1.6M201.8 576.41h1.6M201.8 581.39h1.6M201.8 583.87h1.6M201.8 586.36h1.6M201.8 588.84h1.6M201.8 593.81h1.6M201.8 596.30h1.6M201.8 598.78h1.6M201.8 601.27h1.6M201.8 606.24h1.6M201.8 608.72h1.6M201.8 611.21h1.6M201.8 613.69h1.6M201.8 618.66h1.6M201.8 621.14h1.6M201.8 623.63h1.6M201.8 626.12h1.6M201.8 631.09h1.6M201.8 633.57h1.6M201.8 636.06h1.6M201.8 638.54h1.6M201.8 643.51h1.6M201.8 646.00h1.6M201.8 648.48h1.6M201.8 650.97h1.6M201.8 655.94h1.6M201.8 658.42h1.6M201.8 660.91h1.6M201.8 663.39h1.6M201.8 668.36h1.6M201.8 670.85h1.6M201.8 673.33h1.6M201.8 675.82h1.6M201.8 680.78h1.6M201.8 683.27h1.6M201.8 685.75h1.6M201.8 688.24h1.6" stroke="#999" stroke-width="0.45"/>
<path d="M306.4 691.6l1.7 1.7-1.7 1.7" stroke="#333" stroke-width="0.7" fill="none"/>
<path d="M1109.2 333l1.5 1.4-1.5 1.4zM1111.2 333l1.5 1.4-1.5 1.4z" fill="#222"/>
<path d="M1118.8 333l2.6 2.8M1121.4 333l-2.6 2.8" stroke="#333" stroke-width="0.7"/>
<path d="M1110 340h9.6" stroke="#cfcfcf" stroke-width="0.9"/>
<circle cx="1113.2" cy="347.2" r="2.1" fill="none" stroke="#111" stroke-width="0.9"/><path d="M1113.2 345.2v4" stroke="#111" stroke-width="0.6"/>
<rect x="1117.3" y="345" width="1.8" height="1.7" fill="#111"/><rect x="1117.3" y="347.6" width="1.8" height="1.7" fill="#111"/><rect x="1111.8" y="351" width="7" height="1.8" fill="#111"/>
<path d="M660.5 309.0L661.3 310.4L661.1 311.6L662.4 312.9L661.9 314.0L664.9 315.3L662.4 316.3L665.6 318.0L663.3 319.3L666.1 320.8L663.7 322.1L666.7 323.6L665.2 324.9L667.0 326.2L664.5 327.3L668.7 328.6L666.2 329.7L671.0 331.2L665.6 332.4L671.7 334.0L665.9 335.3L672.2 336.6L665.7 337.6L672.4 339.0L667.1 340.2L671.7 341.7L667.2 342.8L671.2 344.5L667.6 345.8L674.5 347.2L668.3 348.4L669.2 349.8L667.3 351.0L674.2 352.0L666.5 352.9L670.3 354.4L667.8 355.7L676.2 357.2L667.7 358.5L677.9 360.1L667.6 361.4L675.5 362.5L670.0 363.5L675.3 364.7L670.4 365.8L678.2 367.1L671.4 368.2L681.4 369.7L672.6 371.0L680.1 372.0L669.4 372.9L677.8 374.0L669.6 374.9L678.5 376.0L669.6 376.9L677.6 378.0L671.5 378.9L685.3 380.5L672.3 381.7L678.8 382.8L671.2 383.7L684.9 384.7L672.6 385.5L680.4 386.6L675.0 387.4L678.5 388.6L670.4 389.6L677.8 391.1L670.5 392.3L681.6 393.8L673.2 395.1L676.7 396.5L668.8 397.6L679.0 398.7L672.9 399.7L680.6 401.3L669.8 402.7L673.8 403.8L670.5 404.7L676.4 406.0L670.6 407.1L676.2 408.7L669.7 410.0L672.1 411.5L669.3 412.8L675.2 414.0L668.5 415.1L674.3 416.2L668.4 417.1L672.4 418.7L666.7 420.0L664.6 418.0L656.4 418.0L652.8 420.0L651.5 418.7L654.8 417.1L651.0 416.2L653.6 415.1L645.7 414.0L654.0 412.8L647.9 411.5L651.6 410.0L649.7 408.7L650.2 407.1L642.8 406.0L652.2 404.7L647.1 403.8L648.6 402.7L644.6 401.3L651.3 399.7L647.7 398.7L651.2 397.6L640.8 396.5L647.0 395.1L639.3 393.8L648.9 392.3L638.9 391.1L647.7 389.6L637.6 388.6L648.4 387.4L644.4 386.6L650.4 385.5L637.3 384.7L650.8 383.7L640.8 382.8L650.6 381.7L642.0 380.5L648.0 378.9L637.1 378.0L650.7 376.9L646.1 376.0L650.6 374.9L645.8 374.0L649.9 372.9L643.1 372.0L648.0 371.0L647.0 369.7L649.5 368.2L639.9 367.1L653.1 365.8L646.6 364.7L652.5 363.5L647.9 362.5L652.5 361.4L647.0 360.1L651.1 358.5L647.0 357.2L653.4 355.7L649.7 354.4L654.5 352.9L650.5 352.0L653.9 351.0L650.2 349.8L653.1 348.4L651.8 347.2L652.9 345.8L649.9 344.5L654.6 342.8L647.8 341.7L655.5 340.2L650.1 339.0L655.4 337.6L647.7 336.6L654.4 335.3L650.1 334.0L655.3 332.4L651.2 331.2L654.6 329.7L652.8 328.6L655.7 327.3L651.5 326.2L656.4 324.9L654.5 323.6L657.5 322.1L652.7 320.8L657.3 319.3L656.3 318.0L658.7 316.3L657.6 315.3L659.3 314.0L658.2 312.9L660.0 311.6L659.6 310.4zM649.8 310.5L650.5 311.5L650.2 312.4L651.1 313.6L650.6 314.7L651.3 315.9L650.9 316.9L652.4 318.0L651.0 318.9L652.3 320.4L651.7 321.7L652.1 323.1L651.6 324.2L652.7 325.7L651.9 326.9L653.7 328.2L652.2 329.2L653.4 330.5L652.1 331.6L654.9 333.0L653.1 334.1L654.8 335.5L653.1 336.6L656.4 337.9L653.4 338.9L655.9 340.1L654.1 341.1L656.0 342.2L652.9 343.1L657.6 344.5L654.7 345.7L655.9 347.1L655.1 348.3L657.4 349.9L654.6 351.2L658.2 352.3L655.1 353.2L660.0 354.4L654.1 355.4L658.6 356.5L655.9 357.3L661.2 358.9L657.1 360.3L661.6 361.3L655.4 362.2L662.0 363.7L655.4 365.0L661.5 366.4L655.0 367.5L658.1 368.8L657.5 369.9L662.2 370.9L654.9 371.8L660.4 373.0L657.3 374.0L658.5 375.4L654.8 376.5L658.7 377.6L655.2 378.6L657.8 379.9L655.2 381.0L660.2 382.0L655.5 382.8L657.0 384.4L656.1 385.7L658.1 387.3L655.1 388.5L659.8 389.8L655.5 390.8L656.4 392.0L654.1 393.0L656.8 394.2L654.0 395.1L657.4 396.6L654.4 397.8L658.3 398.9L654.5 399.8L657.6 401.1L656.4 402.2L658.6 403.3L655.4 404.1L656.8 405.4L654.9 406.5L656.8 407.5L654.9 408.4L660.2 409.7L655.8 410.8L658.0 412.1L656.5 413.1L656.5 414.6L655.9 415.7L659.6 417.2L654.1 418.4L652.2 418.0L647.4 418.0L644.4 418.4L639.7 417.2L643.9 415.7L642.6 414.6L643.4 413.1L639.8 412.1L644.0 410.8L641.9 409.7L644.4 408.4L642.5 407.5L644.9 406.5L640.4 405.4L644.5 404.1L641.4 403.3L643.2 402.2L638.7 401.1L644.6 399.8L641.9 398.9L643.7 397.8L639.7 396.6L644.1 395.1L643.2 394.2L644.9 393.0L640.7 392.0L643.5 390.8L640.4 389.8L644.5 388.5L641.4 387.3L644.4 385.7L642.2 384.4L644.9 382.8L642.8 382.0L644.6 381.0L639.0 379.9L645.1 378.6L641.7 377.6L644.7 376.5L640.9 375.4L643.7 374.0L637.6 373.0L642.6 371.8L638.6 370.9L642.9 369.9L641.6 368.8L642.2 367.5L641.1 366.4L643.7 365.0L641.3 363.7L644.2 362.2L641.6 361.3L645.0 360.3L639.8 358.9L644.2 357.3L639.9 356.5L645.0 355.4L641.4 354.4L643.7 353.2L638.9 352.3L645.6 351.2L639.8 349.9L644.9 348.3L643.7 347.1L646.5 345.7L643.9 344.5L646.6 343.1L642.4 342.2L645.5 341.1L642.8 340.1L646.5 338.9L644.5 337.9L646.7 336.6L645.0 335.5L647.0 334.1L644.6 333.0L647.7 331.6L645.0 330.5L647.4 329.2L645.5 328.2L648.2 326.9L646.9 325.7L647.9 324.2L646.7 323.1L648.2 321.7L647.3 320.4L648.5 318.9L647.9 318.0L648.9 316.9L648.4 315.9L649.0 314.7L648.7 313.6L649.5 312.4L649.2 311.5zM621.0 350.7L621.4 352.2L621.2 353.5L622.4 354.9L621.7 356.1L622.8 357.4L622.6 358.4L624.4 359.8L622.9 360.9L625.1 362.4L623.5 363.6L625.3 365.1L623.4 366.3L627.4 367.5L625.2 368.4L627.7 369.7L625.2 370.8L626.3 371.9L624.4 372.7L625.9 374.1L624.1 375.2L628.1 376.7L624.5 377.9L626.1 379.2L625.5 380.2L625.7 381.8L624.7 383.1L626.5 384.4L624.2 385.5L626.1 386.9L624.9 388.0L627.6 389.5L625.7 390.8L628.1 392.4L624.4 393.7L628.0 395.0L624.9 396.0L627.3 397.6L626.7 398.8L631.0 400.4L627.4 401.7L632.7 403.0L626.9 404.0L628.3 405.2L625.7 406.2L629.1 407.8L626.0 409.1L631.2 410.3L626.9 411.4L629.8 413.0L625.4 414.3L626.7 415.7L625.0 416.9L622.9 416.0L619.1 416.0L618.2 416.9L614.4 415.7L616.4 414.3L612.7 413.0L616.7 411.4L612.7 410.3L615.9 409.1L610.1 407.8L615.5 406.2L612.2 405.2L615.7 404.0L612.7 403.0L616.5 401.7L610.5 400.4L616.4 398.8L613.3 397.6L616.3 396.0L615.2 395.0L617.2 393.7L613.1 392.4L617.7 390.8L612.9 389.5L617.7 388.0L613.3 386.9L616.5 385.5L613.8 384.4L616.4 383.1L615.7 381.8L617.2 380.2L614.6 379.2L616.8 377.9L615.3 376.7L617.4 375.2L613.7 374.1L616.9 372.7L614.2 371.9L617.5 370.8L614.9 369.7L617.2 368.4L616.0 367.5L618.6 366.3L615.6 365.1L618.2 363.6L618.0 362.4L619.0 360.9L617.8 359.8L619.9 358.4L619.3 357.4L620.1 356.1L619.6 354.9L620.8 353.5L620.6 352.2zM636.0 346.0L636.4 347.0L636.2 347.9L636.9 349.1L636.6 350.1L637.4 351.3L636.8 352.3L638.2 353.4L637.1 354.3L638.1 356.0L637.1 357.3L638.0 358.6L637.4 359.6L639.1 361.1L637.6 362.4L638.7 363.7L637.4 364.7L639.1 365.8L638.0 366.7L638.8 367.9L637.9 368.8L640.1 370.4L637.6 371.6L639.7 373.2L638.4 374.5L640.9 376.1L639.0 377.4L639.9 378.5L638.9 379.4L641.5 380.9L639.5 382.1L642.4 383.1L638.9 383.9L640.7 385.2L639.1 386.1L640.7 387.2L639.7 388.1L642.5 389.3L638.9 390.2L642.6 391.8L640.4 393.1L643.4 394.3L640.0 395.3L642.3 396.6L639.4 397.7L640.8 399.3L638.6 400.6L640.4 402.0L639.6 403.2L642.1 404.4L638.7 405.3L641.4 406.4L638.6 407.4L640.0 408.5L638.7 409.4L640.1 410.5L638.3 411.4L639.2 412.5L638.4 413.3L641.0 414.8L638.9 416.0L640.3 417.6L637.8 418.9L637.3 417.0L634.7 417.0L634.0 418.9L632.5 417.6L633.1 416.0L631.2 414.8L633.9 413.3L630.8 412.5L632.8 411.4L631.3 410.5L633.2 409.4L630.3 408.5L633.5 407.4L630.5 406.4L633.0 405.3L630.5 404.4L633.0 403.2L631.3 402.0L632.4 400.6L631.2 399.3L633.3 397.7L630.8 396.6L632.8 395.3L630.1 394.3L632.4 393.1L630.5 391.8L632.5 390.2L629.6 389.3L632.0 388.1L629.5 387.2L632.2 386.1L628.9 385.2L632.6 383.9L630.6 383.1L632.3 382.1L630.4 380.9L633.5 379.4L630.1 378.5L633.6 377.4L632.8 376.1L633.5 374.5L633.1 373.2L633.5 371.6L632.7 370.4L634.3 368.8L632.2 367.9L633.7 366.7L633.3 365.8L634.2 364.7L633.2 363.7L634.3 362.4L633.6 361.1L634.8 359.6L633.9 358.6L634.4 357.3L634.1 356.0L635.1 354.3L634.5 353.4L635.1 352.3L634.8 351.3L635.5 350.1L635.2 349.1L635.8 347.9L635.7 347.0zM643.0 338.0L643.3 339.2L643.2 340.3L644.0 341.5L643.4 342.5L644.4 343.8L643.8 344.8L644.5 346.1L644.1 347.1L644.4 348.7L644.1 350.0L644.6 351.1L644.0 351.9L645.8 353.4L644.3 354.6L645.2 356.0L644.7 357.2L646.1 358.2L645.0 359.0L645.5 360.0L644.8 360.9L645.8 362.1L644.9 363.2L647.0 364.3L645.3 365.2L646.5 366.6L645.1 367.7L646.6 368.8L645.9 369.7L647.7 370.7L645.5 371.6L647.3 373.2L645.4 374.5L648.1 376.0L645.8 377.2L649.2 378.6L646.9 379.8L648.1 381.3L646.6 382.6L648.0 383.7L646.1 384.7L648.2 386.1L646.3 387.2L649.4 388.3L646.6 389.3L649.2 390.6L646.7 391.7L647.1 392.9L645.6 393.8L647.6 395.4L646.5 396.8L648.7 398.3L645.3 399.5L647.2 400.6L645.3 401.6L647.8 403.0L645.3 404.1L646.8 405.6L645.5 406.7L646.6 408.1L645.3 409.2L646.5 410.6L645.3 411.8L646.9 413.0L646.2 413.9L647.1 415.2L646.0 416.2L647.6 417.3L645.1 418.3L644.2 417.0L641.8 417.0L640.7 418.3L637.9 417.3L640.3 416.2L639.1 415.2L640.5 413.9L638.2 413.0L640.2 411.8L638.8 410.6L639.8 409.2L639.1 408.1L640.5 406.7L639.6 405.6L640.6 404.1L639.2 403.0L640.1 401.6L638.3 400.6L640.5 399.5L638.5 398.3L639.9 396.8L636.9 395.4L640.6 393.8L636.8 392.9L640.4 391.7L636.3 390.6L639.7 389.3L636.1 388.3L639.0 387.2L638.3 386.1L639.2 384.7L637.6 383.7L640.2 382.6L636.8 381.3L639.5 379.8L637.7 378.6L639.8 377.2L638.8 376.0L639.5 374.5L637.0 373.2L640.8 371.6L639.0 370.7L640.1 369.7L639.1 368.8L640.4 367.7L638.6 366.6L640.5 365.2L639.5 364.3L640.7 363.2L639.1 362.1L640.9 360.9L639.8 360.0L641.5 359.0L640.5 358.2L641.2 357.2L640.8 356.0L641.8 354.6L640.2 353.4L641.5 351.9L640.5 351.1L641.9 350.0L641.4 348.7L642.3 347.1L641.5 346.1L642.4 344.8L641.5 343.8L642.6 342.5L642.4 341.5L642.8 340.3L642.7 339.2zM606.4 373.8L606.8 375.1L606.6 376.1L607.4 377.2L607.3 378.2L608.6 379.2L607.6 380.1L609.1 381.3L608.4 382.3L610.7 383.8L608.2 385.0L611.0 386.7L608.6 388.0L612.8 389.6L610.6 390.9L613.1 392.0L611.3 393.0L613.4 394.1L610.9 395.1L614.7 396.2L611.7 397.2L611.9 398.7L611.4 399.9L613.5 401.3L610.1 402.4L613.2 403.6L610.1 404.7L612.6 406.1L609.7 407.2L611.9 408.5L610.3 409.6L612.1 410.9L610.7 411.9L612.3 413.4L611.5 414.5L613.4 415.6L610.4 416.4L614.3 418.0L610.6 419.2L608.1 417.0L604.6 417.0L603.2 419.2L598.7 418.0L602.1 416.4L598.4 415.6L602.8 414.5L598.8 413.4L602.8 411.9L600.6 410.9L601.9 409.6L598.9 408.5L603.5 407.2L600.4 406.1L602.5 404.7L600.4 403.6L602.2 402.4L601.0 401.3L601.9 399.9L600.9 398.7L602.7 397.2L599.4 396.2L602.6 395.1L597.7 394.1L601.6 393.0L600.6 392.0L603.0 390.9L599.1 389.6L603.0 388.0L602.6 386.7L604.3 385.0L603.6 383.8L605.0 382.3L603.7 381.3L604.9 380.1L604.2 379.2L605.6 378.2L604.7 377.2L606.1 376.1L606.1 375.1zM629.5 368.0L629.7 369.6L629.7 371.0L630.9 372.5L630.0 373.7L631.6 374.8L630.4 375.7L632.0 377.1L630.6 378.2L631.2 379.4L630.7 380.4L632.4 381.8L630.7 383.0L632.3 384.3L631.0 385.4L632.9 386.8L630.9 387.9L633.3 389.2L631.3 390.2L633.7 391.5L631.7 392.5L634.4 393.5L631.7 394.4L634.4 395.8L632.0 396.9L634.5 398.0L632.3 398.9L633.6 400.0L632.6 400.9L633.2 402.1L632.1 403.2L633.2 404.5L632.3 405.7L633.0 407.3L631.5 408.6L633.7 410.1L631.6 411.4L632.9 412.8L631.3 414.0L632.8 415.6L631.1 416.9L630.5 416.0L628.5 416.0L627.8 416.9L626.3 415.6L628.0 414.0L626.6 412.8L627.1 411.4L626.6 410.1L627.5 408.6L625.5 407.3L626.8 405.7L625.7 404.5L627.3 403.2L626.0 402.1L626.1 400.9L624.7 400.0L627.3 398.9L626.0 398.0L626.2 396.9L624.7 395.8L626.7 394.4L626.0 393.5L627.2 392.5L624.8 391.5L627.4 390.2L625.4 389.2L627.7 387.9L626.1 386.8L628.2 385.4L626.5 384.3L627.8 383.0L627.5 381.8L628.1 380.4L627.5 379.4L628.5 378.2L627.1 377.1L628.3 375.7L627.9 374.8L628.9 373.7L628.1 372.5L629.4 371.0L629.2 369.6zM613.5 386.0L613.7 387.3L613.6 388.5L614.4 389.5L614.2 390.3L615.0 391.7L614.4 392.8L615.6 394.1L614.6 395.0L615.8 396.5L615.7 397.7L617.0 399.2L615.4 400.4L616.7 401.4L615.8 402.3L616.4 403.7L615.5 404.9L616.2 406.3L615.5 407.4L616.1 408.9L615.3 410.2L618.1 411.8L615.8 413.2L618.4 414.3L616.1 415.3L616.7 416.9L615.8 418.2L614.4 416.0L612.6 416.0L611.4 418.2L609.9 416.9L611.3 415.3L608.7 414.3L610.8 413.2L610.0 411.8L611.7 410.2L609.3 408.9L611.4 407.4L610.5 406.3L611.2 404.9L609.9 403.7L611.7 402.3L610.7 401.4L611.4 400.4L609.5 399.2L611.4 397.7L609.8 396.5L612.3 395.0L610.8 394.1L612.7 392.8L612.3 391.7L612.9 390.3L612.8 389.5L613.4 388.5L613.3 387.3zM598.5 394.0L598.7 395.3L598.6 396.3L599.4 397.7L599.4 398.9L600.5 400.0L599.4 400.9L600.7 401.9L599.8 402.7L601.3 403.8L600.0 404.7L601.0 406.2L600.8 407.5L601.4 408.6L600.2 409.5L601.7 411.0L600.6 412.3L600.6 413.3L600.3 414.2L600.3 415.5L599.8 416.5L599.2 415.0L597.8 415.0L597.2 416.5L596.5 415.5L597.1 414.2L595.7 413.3L596.4 412.3L596.2 411.0L596.0 409.5L594.3 408.6L596.2 407.5L594.7 406.2L596.7 404.7L595.6 403.8L597.5 402.7L596.8 401.9L597.7 400.9L597.1 400.0L597.9 398.9L597.4 397.7L598.4 396.3L598.3 395.3zM674.5 372.0L674.7 373.2L674.7 374.3L675.2 375.7L675.1 376.8L676.2 378.0L675.5 379.1L676.7 380.1L675.5 381.0L677.2 382.5L675.5 383.7L676.7 385.2L676.1 386.5L678.4 387.6L676.2 388.6L677.4 389.9L676.9 391.0L679.4 392.5L677.2 393.7L680.3 394.9L676.9 396.0L679.0 397.1L678.2 398.0L678.9 399.6L677.5 400.9L679.7 402.4L677.2 403.6L679.4 405.1L677.5 406.4L678.8 407.9L676.6 409.1L677.9 410.3L676.7 411.3L677.9 412.4L676.7 413.3L678.2 414.4L676.6 415.3L679.4 416.4L676.5 417.3L678.7 418.8L676.7 420.0L675.6 418.0L673.4 418.0L671.7 420.0L671.0 418.8L671.9 417.3L669.6 416.4L672.0 415.3L670.8 414.4L671.6 413.3L669.9 412.4L671.6 411.3L670.5 410.3L672.1 409.1L671.1 407.9L672.2 406.4L670.4 405.1L671.2 403.6L669.5 402.4L671.6 400.9L669.4 399.6L672.1 398.0L668.4 397.1L671.7 396.0L670.0 394.9L671.6 393.7L671.1 392.5L672.1 391.0L671.4 389.9L672.3 388.6L671.6 387.6L672.9 386.5L671.9 385.2L673.4 383.7L672.9 382.5L673.2 381.0L672.9 380.1L673.4 379.1L673.0 378.0L673.8 376.8L673.5 375.7L674.3 374.3L674.3 373.2zM602 411L674 411L672 419L606 419z" fill="#0a0a0a"/>
<path d="M595 434L598 421L604 417L668 418L672 424L660 432L640 438L620 445L606 451L598 450z" fill="#111" opacity="0.62"/>
<path d="M672 422L700 420L726 416L734 420L724 426L700 430L676 433L664 434z" fill="#111" opacity="0.4"/>
<path d="M619.4 440.2l0.9 -0.5M595.9 430.4l-0.8 2.1M682.7 433.0l1.0 0.2M653.4 437.5l2.1 -0.3M684.0 432.6l1.3 0.3M627.3 431.4l1.6 0.4M617.5 440.8l2.2 -0.4M669.8 420.6l-1.6 1.5M605.7 437.6l-0.7 1.6M666.6 430.8l1.2 2.2M642.5 416.3l1.3 -0.2M651.7 431.2l2.0 -0.5M623.5 444.4l2.5 0.1M707.2 430.1l0.7 0.9M659.0 437.0l0.8 0.9M633.7 436.5l0.8 0.6M714.3 425.0l1.3 -0.6M695.7 425.5l1.2 -0.4M686.6 428.9l2.0 1.5M704.7 419.8l2.2 0.5M686.1 424.3l0.8 -0.6M703.6 428.2l-0.7 0.8M615.3 450.5l-0.9 1.7M712.6 422.1l-0.1 2.0M671.5 424.8l1.0 -0.7M599.5 433.2l1.1 -0.0M658.9 437.1l1.6 1.1M601.9 440.1l1.5 1.3M665.0 433.9l1.8 1.6M681.7 427.9l2.3 -0.6M621.6 431.8l-0.2 1.6M649.5 434.7l-0.0 1.3M639.0 427.0l-0.2 1.3M621.8 441.3l1.4 0.7M686.1 429.1l-1.1 2.0M628.4 426.4l1.5 -0.5M598.9 437.3l0.6 0.7M647.1 438.3l1.6 1.9M650.8 418.2l1.7 -1.0M731.1 417.6l1.9 -1.5M695.3 423.9l1.8 -1.1M603.2 439.8l0.1 2.1M593.1 440.7l1.7 -1.6M696.8 420.8l2.3 -0.1M644.3 437.6l1.5 0.5M706.6 428.9l1.9 0.5M673.2 426.0l-0.7 0.6M711.0 427.6l-1.4 1.2M678.2 426.7l1.2 1.0M629.1 431.3l-1.0 1.6M597.1 448.2l-1.4 1.8M603.3 436.7l1.1 1.9M726.1 423.6l1.8 0.6M621.0 424.4l1.9 1.1M603.7 447.1l1.0 1.9M666.7 433.5l1.6 -1.0M617.2 442.7l1.4 0.2M666.0 420.1l0.6 0.7M606.4 439.9l1.3 1.8M641.0 435.3l0.6 0.6M673.2 424.7l0.3 2.2M730.7 424.4l0.7 -0.4M603.1 416.1l1.4 1.1M600.3 438.5l1.0 1.2M628.3 437.1l-1.4 1.3M648.0 432.4l-0.8 0.7M623.1 415.6l0.3 1.2M597.8 446.2l-0.5 2.0M599.1 419.9l-1.5 1.5M634.3 438.3l1.6 -1.4M628.3 419.1l1.4 -0.9M611.8 441.8l0.8 0.3M596.2 452.0l-0.8 0.8M719.9 419.7l1.1 1.2M656.6 427.9l0.1 2.3M611.7 423.1l-0.3 0.8M612.0 449.7l1.3 -0.2M639.5 420.9l0.5 1.6M599.2 450.7l1.7 -1.0M632.5 424.6l0.3 1.1M605.1 425.9l1.7 1.7M593.3 447.1l1.1 -0.9M617.9 431.8l1.2 2.1M611.0 421.4l2.0 0.8M602.5 417.6l1.9 -0.0M620.9 439.1l-1.1 1.8M620.3 416.7l0.3 2.1M599.0 447.2l-0.8 1.1M717.4 424.9l0.9 0.6M614.7 429.2l1.5 1.2M655.6 435.1l-0.4 0.9M716.5 427.2l0.4 2.0M599.9 449.8l0.0 2.5M623.4 421.5l0.4 0.9M692.4 422.0l-0.1 0.8M605.9 449.7l1.4 -1.5M662.6 434.5l1.0 -0.8M610.9 438.3l1.4 1.9M699.3 420.7l1.6 1.6M667.2 430.2l2.2 1.2M625.9 427.7l-1.2 1.0M726.5 424.2l1.5 0.4M668.0 416.8l1.6 0.0M596.0 440.3l1.2 0.4M681.1 424.3l0.2 1.7M632.7 426.5l1.2 1.5M629.9 433.1l1.4 -1.0M610.0 426.0l1.4 -0.6M603.7 436.4l-0.5 2.3M685.3 422.2l0.1 2.1M679.9 433.2l1.2 -0.6M665.3 429.7l1.2 -1.4M716.0 423.8l1.8 -0.0M703.0 420.5l0.7 0.6M600.0 429.9l1.5 0.7M698.1 420.3l0.4 1.4M723.6 419.2l1.8 1.5M675.9 434.4l2.5 0.3M679.1 429.6l0.1 1.6M633.5 430.0l1.8 -0.4M663.4 432.2l1.1 -0.4M603.7 451.7l-0.8 1.1M730.0 422.4l1.2 1.1M597.9 437.2l-1.2 1.2M666.0 435.2l2.0 -0.4M677.2 428.4l-0.8 2.4M605.4 429.4l-0.2 1.5M661.6 432.0l1.2 1.5M615.8 427.0l-1.4 2.1M607.0 450.7l-1.1 1.7M613.7 425.9l1.7 0.0M617.4 439.8l0.5 1.8M635.5 442.3l0.3 0.8M619.5 434.4l0.7 1.6M674.3 430.9l0.6 0.8M606.5 418.1l-0.0 1.1M702.7 427.2l2.0 -0.5M629.7 418.1l2.4 0.4M656.2 429.8l-0.6 0.7M680.9 424.2l-0.6 0.6M709.3 426.5l1.3 1.4M728.7 424.0l1.4 0.6M626.3 421.1l0.8 1.2M633.2 437.0l1.0 0.1M649.5 416.7l0.9 0.6M626.5 421.8l1.2 -0.6M687.3 428.0l1.0 0.4M609.5 432.2l2.0 1.2M664.2 423.3l1.0 1.3M676.2 429.1l1.2 0.2M717.5 419.0l1.7 0.1M702.9 429.8l2.0 0.2M647.5 417.5l0.9 0.7M672.5 428.8l1.6 -0.6M636.1 423.3l0.9 0.4M715.9 419.4l1.0 0.9M687.2 428.4l-0.4 1.5M642.1 439.8l0.7 0.9M614.5 422.1l1.3 -0.3M636.1 440.2l-0.6 0.9M694.9 424.4l1.5 0.5M703.6 425.7l-0.5 0.7M597.9 424.0l0.9 0.5M603.5 442.5l-0.7 1.4M631.8 417.7l0.3 2.5M656.7 416.2l0.3 2.0M725.6 419.2l1.6 1.5M707.8 424.7l-1.3 1.2M669.9 424.2l0.9 -0.2M620.2 426.7l-0.4 1.0M625.5 423.9l0.2 1.7M642.0 426.3l1.4 1.9M615.5 441.3l0.1 1.9M711.5 418.7l1.3 -0.3M599.7 425.5l1.1 0.4M607.4 427.3l1.6 -0.4M603.2 443.4l2.5 0.3M661.9 431.8l1.1 0.1M685.6 424.3l1.0 -0.8M634.0 421.6l-1.1 1.6M615.4 446.2l2.1 1.0M617.8 447.8l0.3 1.3M625.7 415.7l-0.4 1.8M663.4 420.5l1.3 0.2M690.8 420.7l1.1 1.2M596.8 432.0l1.1 0.4M632.1 441.1l1.7 -0.2M614.8 426.1l1.6 0.2M619.3 417.5l0.1 1.4M599.7 441.7l0.7 1.8M684.9 426.3l1.1 0.9M618.4 441.8l1.1 1.2M644.9 437.8l-0.1 1.5M648.5 418.7l-0.7 0.9M607.3 449.3l0.8 0.9M627.5 434.1l0.8 1.6M607.4 435.0l1.4 -1.3M601.7 432.0l-0.2 2.3M605.8 448.0l0.8 1.2M610.8 445.8l0.8 -0.4M593.2 438.4l0.4 1.1M717.3 420.9l0.6 2.1M608.8 429.3l-1.5 1.5M597.3 438.8l-0.1 1.0M607.4 451.9l1.8 -0.9M707.1 421.6l0.7 1.7M646.2 419.9l-0.2 2.4M593.0 428.0l-0.0 1.1M617.4 447.6l2.0 -0.4M614.0 448.6l-0.9 1.2M602.0 427.5l-0.8 0.9M597.3 421.0l0.1 1.4M647.2 428.5l0.8 0.1M594.0 432.8l1.8 -1.9M688.3 425.2l1.3 0.0M595.9 437.0l-1.4 1.7M643.6 425.5l-1.4 1.7M689.8 426.5l-0.9 2.0M683.1 428.4l1.8 -0.3M639.9 427.3l2.6 -0.1M626.3 423.6l1.1 -0.9M655.6 437.3l1.1 -0.8M634.7 426.6l-0.2 2.1M616.9 437.8l0.7 2.5M600.8 433.9l2.2 -0.9M594.3 420.7l1.2 0.5M648.9 422.2l-1.1 1.5M619.5 444.1l2.5 0.5M640.5 419.6l-0.1 1.1M621.8 427.4l2.1 0.6M689.4 427.8l0.9 -0.1M681.8 427.7l1.7 0.3M638.7 417.8l0.6 0.9M604.0 447.4l-0.1 1.6M678.2 427.6l0.9 1.9M631.3 435.5l2.0 -1.5M703.3 428.9l1.2 2.3M610.5 416.5l1.7 0.2M612.7 421.3l1.5 1.5M595.2 445.9l0.8 0.9M683.2 428.1l2.2 -0.2M722.0 418.4l1.5 1.5M599.7 437.1l-1.1 1.1M681.9 423.2l1.1 -0.5M624.6 422.3l2.1 0.6M673.6 420.4l1.9 1.5M632.0 427.6l1.3 1.1M656.7 437.7l1.2 2.1M716.2 421.5l1.5 1.8M723.2 420.2l1.6 -1.4M625.0 446.5l1.5 1.4M624.6 431.7l0.8 0.6M608.5 434.0l1.0 -0.1M690.4 420.1l2.1 0.0M642.3 434.3l2.4 -0.7M697.1 425.2l1.0 -0.5M597.3 434.9l1.5 0.2M592.5 442.2l-0.2 2.0M648.9 427.0l1.0 1.2M646.9 430.8l0.7 0.8M627.9 439.0l1.3 -0.7M607.8 448.6l1.6 1.5M691.7 427.3l2.0 0.2M648.1 435.6l1.8 0.6M623.4 439.1l0.9 0.9M660.1 423.1l-0.7 0.8M667.0 435.6l2.0 -1.0M597.3 429.6l1.9 1.2M613.3 424.3l0.3 1.0M666.6 432.6l0.2 0.9M691.8 432.4l-0.8 1.4M612.7 441.9l1.5 0.1M644.8 427.9l1.0 -1.1M616.9 443.4l1.2 -0.4M620.2 431.3l2.2 0.5M597.4 432.1l1.4 0.5M708.6 428.4l-0.2 1.5M694.2 429.3l1.9 -0.6M700.6 429.6l0.0 1.7M677.0 433.0l1.3 0.9M654.8 434.1l-0.9 1.4M698.4 430.5l-0.3 0.8M608.1 423.0l0.8 0.5M603.8 444.9l1.3 1.3M598.9 442.3l-0.2 1.5M612.1 427.7l1.3 1.1M630.8 424.8l0.6 1.2M671.6 435.0l1.1 -1.1M715.2 424.5l0.8 0.8M645.2 433.0l1.7 0.3M707.2 422.2l2.4 0.2M636.6 435.9l1.5 0.2M633.3 443.1l2.2 0.4M718.3 416.4l1.5 0.4M716.1 416.9l1.0 1.6M688.9 426.1l1.0 0.7M724.1 422.5l0.7 0.7M686.5 424.6l2.3 0.8M599.2 442.5l0.7 0.5M624.7 437.9l1.4 0.1M713.0 420.2l1.5 1.7M595.8 429.6l0.9 1.7M604.6 433.0l0.3 2.1M607.6 448.0l-0.7 0.7M633.2 428.3l0.0 2.2M604.5 433.9l-0.4 2.3M603.8 419.7l-0.8 1.0M595.7 438.6l0.7 2.4M639.3 432.4l1.1 0.5M705.2 426.2l0.9 0.1M677.4 432.9l0.9 0.0M674.8 428.5l1.4 0.4M612.6 417.9l1.8 -1.5M668.7 418.8l0.9 1.4M664.5 429.0l1.1 -0.2M609.4 423.8l-0.0 2.4M624.2 444.8l1.0 -0.4M648.0 435.2l1.0 0.9M674.9 423.6l-0.9 1.6M600.0 424.1l1.2 1.4M709.1 428.0l0.2 2.3M650.7 430.7l0.4 0.9M689.4 420.2l1.1 -0.9M622.8 427.6l-2.0 1.6M660.6 434.4l-1.5 1.6M683.3 422.2l-1.1 1.6M604.4 443.4l0.8 1.2M610.6 448.0l-1.7 1.9M676.6 431.8l-1.1 2.0M705.2 424.3l2.0 -1.1M657.4 423.7l-1.1 1.3M694.0 430.1l-1.1 1.9M649.9 417.6l1.6 1.1M607.0 447.3l1.5 0.3M639.6 422.8l-0.8 1.2M633.4 417.6l1.2 0.5M608.5 442.0l0.7 0.5M643.5 423.2l-0.5 2.4M648.2 434.5l-0.0 2.5M618.5 448.1l1.1 0.1M627.4 428.4l-0.1 1.0M665.5 429.4l-1.6 1.9M602.0 439.6l1.1 1.2M645.5 435.4l1.5 1.4M599.3 448.2l2.0 0.2M596.1 427.3l-0.8 0.7M612.0 438.1l1.3 -1.3M631.7 445.3l1.3 0.1M631.2 420.6l-1.0 1.5M641.4 419.7l1.3 1.1M698.1 421.0l0.9 -1.0M730.5 421.7l0.9 1.0M637.5 432.0l0.9 -0.4M629.7 422.4l0.2 2.4M636.6 420.2l0.1 2.2M630.9 428.9l2.4 0.1M682.4 424.6l1.6 1.5M673.1 428.5l2.3 -1.0M601.1 436.5l2.0 0.7M708.1 418.6l-0.3 1.3M703.3 430.2l2.3 1.1M641.7 421.6l-0.1 2.4M610.4 427.9l0.1 0.9M674.8 430.6l0.7 1.7M612.9 441.5l-0.0 2.2M718.4 419.4l-0.7 1.9M630.9 416.8l1.6 1.0M621.9 423.2l-0.3 0.9M707.3 428.7l1.4 1.5M630.9 416.4l-0.2 1.6M596.7 447.9l0.5 0.9M640.3 427.6l0.9 1.6M621.3 448.4l2.3 0.2M664.2 431.4l-0.2 0.9M675.8 430.4l1.7 0.3M601.4 433.6l0.1 1.0M640.5 421.8l1.4 -0.6M654.6 422.1l1.8 -1.1M600.1 422.4l-0.5 0.7M682.4 424.8l0.8 1.2M597.4 421.2l-0.9 1.1M657.0 418.2l0.6 0.8M609.6 418.5l1.8 0.0M713.0 419.5l0.4 0.7M658.2 415.8l2.4 0.1M637.9 439.6l0.1 2.4M620.8 424.0l2.4 -0.5M620.0 432.7l-0.5 1.8M654.7 416.8l1.5 -1.5M694.5 423.8l1.9 0.7M611.6 451.3l1.3 -1.3M604.6 454.0l1.5 -1.7M622.8 441.5l-0.6 2.4M629.1 420.3l0.7 0.4M618.1 447.1l1.1 0.0M598.9 436.4l1.3 -0.2M657.4 419.0l1.7 -1.0M670.2 428.5l-0.4 0.9M714.0 418.2l0.5 1.4M612.4 438.9l2.3 1.2M601.9 418.7l-0.4 2.0M657.1 430.7l-0.5 1.8M627.6 426.3l1.4 -0.4M630.8 424.2l1.0 -1.2M606.2 447.8l1.3 0.3M614.4 435.8l-0.1 2.0M604.0 422.7l1.0 0.9M628.7 443.3l2.2 -1.4M627.0 424.5l0.8 0.3M691.8 426.5l0.7 -0.6M643.4 419.8l0.0 1.0M690.7 425.2l1.8 -1.2M635.0 430.8l0.2 2.0M604.8 452.2l1.2 0.8M711.2 423.3l-1.2 2.0M613.9 441.0l1.8 0.5M611.8 418.0l0.5 2.5M673.6 423.2l0.7 0.6M611.1 446.3l0.3 1.2M607.2 424.2l2.1 -0.8M701.9 423.2l1.0 -0.6M644.0 440.3l1.3 1.0M654.6 418.7l1.5 0.6M608.1 433.7l1.0 -0.5M608.2 416.8l0.1 1.4M623.2 444.5l-1.1 1.4M715.4 418.5l2.5 0.1M615.7 449.5l0.9 -0.8M656.7 427.0l1.1 0.3M660.8 421.4l-0.2 0.8M594.5 433.3l2.1 0.1M617.4 423.3l1.4 1.2M622.5 415.5l1.3 -1.0M728.5 423.6l-0.0 1.7M681.1 422.9l1.2 2.0M657.2 423.3l2.4 -0.8M640.8 441.4l0.8 -0.2M679.1 424.6l-0.2 1.6M611.0 423.9l0.7 0.7M610.9 435.4l1.4 1.2M625.0 420.9l1.8 -0.2M650.1 416.1l1.9 -1.6M633.0 425.8l2.0 1.6M665.4 418.8l-0.3 1.2M730.5 421.9l-0.6 0.7M617.3 442.4l1.1 -0.6M601.6 444.4l0.1 1.9M704.9 423.5l1.1 1.2M721.5 423.5l0.5 2.1M702.2 419.2l1.0 -0.6M596.2 419.6l1.5 -0.2M674.7 428.6l2.1 -0.2M689.0 420.6l-1.1 1.0M731.1 422.0l2.0 -0.8M676.4 422.1l-0.1 0.8M630.5 416.9l0.4 0.7M629.4 443.2l1.7 -2.0M612.5 427.7l1.6 -0.6M660.4 424.6l0.7 -0.6M604.3 439.6l0.9 1.9M696.7 428.0l0.9 1.4M613.3 442.4l1.4 0.6M604.7 438.0l-0.4 1.1M705.7 423.5l-0.3 0.9M611.0 421.9l1.2 1.4M625.9 424.6l-0.1 1.6M595.5 443.7l0.4 1.1M721.8 422.4l1.3 0.4M613.8 423.3l-1.2 1.8M635.9 426.9l1.5 1.5M603.9 416.0l1.0 1.4M619.7 418.9l1.7 0.1M601.2 429.9l0.7 1.5M623.2 427.0l-0.6 1.5M644.9 432.3l-1.7 1.8M606.2 432.7l1.8 -0.8M609.7 433.1l1.8 -0.7M654.4 417.5l1.0 1.1M598.4 425.8l1.7 -1.3M601.2 420.7l1.5 1.0M616.2 445.4l1.5 -0.5M608.0 424.6l-1.4 1.6M678.6 425.8l-0.6 1.5M609.8 421.9l1.6 1.9M640.1 424.2l0.1 1.3M612.5 449.0l0.8 1.1M640.5 421.7l-0.8 1.3M709.7 424.9l1.4 -0.3M645.8 418.5l0.9 0.8M700.6 424.0l-1.3 2.1M708.9 424.4l0.4 1.9M610.4 436.1l1.2 0.8M718.4 419.7l-1.1 2.3M657.1 427.9l-1.1 1.9M622.0 428.0l0.9 -0.8M594.8 446.7l0.9 -0.8M698.5 422.1l0.3 1.6M697.4 426.8l2.4 0.3M666.2 433.8l-1.0 1.2M621.2 428.9l-1.1 1.0M609.1 451.5l0.9 0.1M695.0 431.6l-0.0 1.0M705.4 428.6l-0.5 1.1M725.8 422.3l0.4 1.3M618.1 436.4l1.6 0.5M725.0 422.5l-0.0 0.8M672.2 419.9l1.7 1.0M678.3 424.6l0.2 1.3M658.9 417.8l0.2 0.8M699.5 423.7l1.3 0.0M620.3 438.0l-0.9 1.9M694.0 425.2l1.7 1.6M603.5 416.9l2.1 0.7M702.2 424.0l0.9 -0.7M680.6 426.4l1.0 -0.5M619.0 426.9l1.4 -0.9M659.4 422.1l1.5 -1.1M601.6 442.8l2.5 -0.4M652.6 428.4l2.0 -0.4M696.6 428.5l1.4 1.3M653.7 426.2l-0.5 1.7M728.6 420.0l-0.9 1.2M670.7 430.5l0.7 0.9M637.9 433.7l0.4 1.6M641.7 435.8l2.4 0.6M639.2 429.9l1.7 0.9M644.7 429.9l-1.0 1.1M631.0 427.6l1.3 1.9M594.2 421.9l0.8 0.5M624.1 416.4l-0.5 1.2M604.0 451.9l0.8 1.3M604.5 449.8l-0.4 2.1M607.3 420.6l-0.2 1.1M647.7 424.4l-0.9 0.8M693.4 421.2l0.9 -0.7M595.9 432.0l2.2 0.3M639.9 430.2l-1.5 2.0M672.3 419.8l0.2 1.1M680.2 427.0l0.6 1.4M690.8 427.0l0.9 2.0M614.0 449.2l0.7 1.5M603.0 452.1l1.3 1.7M676.0 431.5l1.7 1.8M605.9 425.3l0.8 0.6M696.3 424.5l2.0 0.6M622.1 440.8l0.3 1.3M652.9 437.4l2.0 1.0M608.2 444.7l1.0 0.3M698.4 419.4l1.9 -0.4M660.3 417.6l1.8 1.5M658.4 433.2l1.9 0.8M726.3 421.6l0.9 0.6M618.0 434.5l0.8 1.2M655.3 418.0l-1.3 2.1M699.0 423.5l-0.9 1.4M724.9 420.6l2.0 0.2M615.3 419.6l1.6 -0.0M644.3 436.7l2.1 0.3M611.3 437.9l0.5 2.5M636.5 415.2l0.9 -0.7M643.3 438.8l0.9 1.0M732.1 416.6l0.8 0.1M664.6 418.8l-0.7 2.2M636.4 437.3l0.1 0.8M617.0 448.1l0.7 0.7M600.8 448.0l1.7 2.0M630.2 420.1l-0.4 1.4M614.4 443.8l0.5 1.7M628.0 419.8l0.6 0.9M707.1 420.6l-0.2 1.7M650.8 436.3l0.6 -0.6M625.3 445.0l1.0 0.7M604.4 433.6l0.4 1.4M623.2 441.5l0.2 2.3M617.2 416.8l0.9 -0.3M685.1 431.4l-0.0 1.4M626.4 420.3l0.4 1.3M693.4 431.6l0.8 -0.8M613.7 439.6l0.9 0.0M605.9 444.4l2.1 0.0M688.1 431.8l1.3 1.5M648.8 422.1l-0.3 0.9M639.6 424.9l1.8 -1.0M690.8 431.7l0.8 0.8M605.5 434.6l0.9 1.4M611.5 433.8l-0.3 1.0M597.6 443.3l1.7 -1.4M598.8 437.9l0.6 2.0M604.3 443.8l2.3 0.6M607.7 429.6l1.3 -1.6M619.5 435.3l1.6 -0.5M623.3 425.4l1.7 0.0M687.3 421.6l0.7 1.6M666.0 424.2l2.5 0.0M633.1 430.5l1.7 1.1M697.0 422.7l1.6 -0.4M697.3 422.5l-0.6 1.1M691.6 425.2l0.9 -0.2M707.6 423.4l0.9 1.1M644.5 425.1l-0.6 1.6M654.7 431.3l0.9 1.0M613.9 425.5l2.0 1.5M652.9 421.9l2.1 -0.5M648.6 438.4l0.8 -1.0M639.3 441.9l1.6 -1.0M633.6 422.2l1.7 1.6M637.7 415.5l-0.4 1.3M665.0 419.0l1.1 -0.4M626.3 438.1l1.1 1.0M708.5 425.0l0.1 2.2M598.9 429.6l-0.3 1.2M606.2 424.7l0.2 2.1M604.2 432.9l0.7 -0.9M604.2 429.1l1.6 0.0M733.4 420.9l1.7 -0.0M715.9 422.6l2.3 -0.6M632.2 417.5l2.5 -0.6M638.5 427.5l2.2 -0.7M649.3 420.6l1.9 0.6M649.9 423.5l0.2 2.2M595.2 423.0l-0.8 2.4M663.1 433.4l0.6 1.0M691.6 424.6l1.2 1.6M615.9 434.9l1.4 0.1M610.5 426.7l-0.2 2.0M623.2 432.1l-0.3 2.3M643.8 432.4l-1.4 2.1M606.4 439.1l-0.6 0.6M696.6 425.0l1.3 1.9M640.1 415.1l1.0 -1.0M614.2 426.0l-0.9 0.9M624.0 417.8l-0.2 2.5M716.0 419.9l0.1 2.1M657.1 422.1l1.0 2.3M711.5 424.2l2.0 -0.4M644.4 434.9l1.3 1.1M642.8 422.6l-0.6 1.3M649.9 435.5l0.8 0.7M619.7 443.6l1.2 0.8M631.0 440.1l0.4 1.6M622.6 431.9l0.7 0.4M609.2 445.9l-0.8 1.1M729.2 421.8l0.2 1.0M612.6 423.1l2.3 -0.5M617.5 437.7l0.1 1.1M654.8 434.7l1.8 1.5M619.9 415.6l-0.3 2.2M622.6 446.0l1.2 0.5M644.9 433.7l-0.2 0.9M613.2 436.6l1.4 1.6M627.0 417.4l0.9 -0.9M627.3 426.3l0.4 1.6M638.7 418.4l-1.0 1.8M621.3 415.5l0.3 2.1M647.9 426.8l-0.7 0.6M654.9 431.9l1.8 1.2M616.8 430.7l0.4 2.4M672.2 432.9l0.8 1.6M716.4 417.3l-0.9 1.1M592.9 439.7l1.6 1.1M610.0 426.3l1.9 0.8M655.0 427.3l1.8 -0.5M688.2 425.8l0.8 2.1M708.2 418.7l1.5 1.5M594.6 443.7l1.2 -0.8M663.7 431.0l1.0 0.0M654.1 423.4l0.8 2.4M700.5 425.4l0.7 -0.7M717.7 422.3l1.4 0.7M613.1 435.3l-1.1 1.1M625.5 437.0l1.0 -1.2M723.8 426.4l1.7 0.7M725.0 418.5l1.2 0.5M645.4 419.2l1.1 -1.3M623.3 417.3l0.5 0.8M610.9 447.7l1.4 -0.7M605.6 416.6l-0.3 2.0M631.3 434.4l1.1 -0.1M675.9 426.3l1.3 0.3M624.2 418.7l-0.0 1.7M645.2 430.9l1.0 2.2M727.8 424.5l2.2 0.5M602.5 449.4l0.5 1.0M619.1 433.0l1.4 1.6M606.2 433.5l1.9 0.7M647.7 431.4l-0.5 1.4M685.3 430.5l1.8 0.1M625.9 444.5l-1.5 1.5M718.5 425.0l2.2 -0.1M688.1 421.0l1.1 0.1M639.8 418.2l1.0 0.4M713.9 427.5l2.2 -0.8M654.2 429.6l0.7 0.5M624.1 424.4l0.6 0.6M626.7 425.8l0.6 2.5M719.6 419.1l1.8 1.5M613.4 436.1l1.3 -0.2M644.8 418.2l-0.5 1.3M655.6 432.9l2.1 -0.7M627.0 442.0l1.9 -1.5M662.5 427.7l1.6 2.0M616.3 417.1l1.0 -1.2M625.5 426.5l0.3 1.7M664.3 427.2l1.2 1.5M604.6 416.3l-0.9 1.3M592.8 429.7l1.2 0.3M669.6 429.4l1.7 -0.3M597.6 450.0l0.8 1.8M626.9 437.7l0.5 1.4M680.4 427.6l-1.2 1.3M657.7 436.6l-1.6 1.4M599.6 446.4l-0.2 0.8M625.5 429.6l-0.4 1.1M678.8 427.3l-1.4 1.3M729.0 424.1l1.7 -0.4M707.5 421.2l-0.9 1.6M593.7 425.1l1.2 1.2M600.3 427.5l0.9 -0.7M608.7 446.9l1.0 1.4M710.0 422.9l2.1 1.3M636.5 442.0l-1.2 1.6M631.0 424.3l1.1 1.4M719.9 423.9l2.0 0.6M635.4 418.0l1.2 0.6M709.2 420.5l0.3 1.0M614.5 417.0l1.4 1.6M603.1 424.1l1.6 1.2M640.4 423.9l-0.8 2.1M609.4 429.8l0.5 1.2M622.1 427.3l-0.8 1.0M660.7 429.6l1.7 1.7M628.2 424.6l-0.0 1.0M613.7 431.7l2.6 -0.1M645.5 419.1l-0.8 1.8M686.7 426.6l1.6 -0.6M611.1 451.8l1.5 1.2M622.0 444.9l1.6 -0.3M603.9 454.1l1.2 -0.3M644.0 418.4l-0.0 0.9M651.0 428.4l0.9 1.3M652.7 424.3l1.4 -0.0M621.0 416.2l0.3 1.0M719.9 423.7l0.2 2.2M600.6 441.4l0.4 2.0M709.9 426.4l-0.1 0.9M623.5 415.8l1.2 1.1M681.7 425.4l1.4 -0.7M617.3 447.4l1.5 0.6M685.8 430.1l1.0 1.5M639.5 423.5l1.5 -1.8M695.2 426.4l1.1 0.4M695.8 428.3l-0.3 2.2M670.1 429.9l2.1 -0.7M596.3 445.6l1.2 -0.1M628.6 441.3l2.1 0.5M620.9 435.9l1.7 0.8M636.1 428.1l0.3 0.9M674.8 421.1l1.3 1.6M612.4 418.0l1.3 0.0M632.1 444.7l2.0 0.2M592.9 427.5l1.2 -0.7M712.2 426.7l0.6 0.5M621.8 418.8l1.1 -0.9M627.3 437.7l0.6 1.5M660.0 427.5l-0.7 0.8M605.3 451.9l1.8 1.6M625.5 436.0l2.2 -0.6M687.5 421.9l0.3 1.9M618.2 443.2l0.8 -0.3M612.6 435.7l1.0 0.6M609.4 422.9l0.1 2.2M640.0 430.3l0.7 2.4M720.2 422.2l1.2 1.3M605.5 453.3l-0.5 0.9M637.0 442.1l1.4 0.7M708.8 426.3l1.2 -1.3M602.5 449.2l0.3 2.0M603.0 442.9l2.1 0.4M724.9 425.1l0.5 0.7M698.3 422.6l-0.7 0.8M591.5 431.2l0.6 0.7M662.2 420.0l1.5 0.9M629.6 423.8l-0.4 1.6M638.6 426.8l1.0 -0.2M634.7 443.9l-0.1 1.2M703.5 420.9l-0.8 1.2M732.8 418.9l0.8 0.9M676.4 434.3l2.1 0.3M652.7 431.3l1.6 0.2M647.7 431.5l1.0 1.1M593.5 443.6l0.1 1.5M644.2 423.8l-0.5 0.6M632.5 433.1l1.0 1.0M712.3 423.9l-0.4 1.2M659.1 429.9l-0.6 1.0M715.4 418.7l-1.4 1.2M657.6 419.9l0.8 0.4M605.5 438.1l0.7 1.4M624.2 428.0l1.7 -0.6M708.9 421.5l0.6 2.0M650.5 439.6l1.9 -0.5M609.0 437.0l0.4 1.0M627.9 438.0l1.1 0.6M629.0 432.0l2.0 -1.4M610.1 422.8l0.3 1.4M649.6 433.5l-0.7 1.3M646.3 425.1l0.8 0.7M667.4 422.5l0.3 1.1M694.1 431.8l0.8 -0.4M638.4 424.2l1.2 -0.5M597.5 420.7l-0.1 1.3M675.9 431.6l-0.9 0.8M640.5 415.9l1.1 2.3M608.0 440.8l1.1 0.9M605.6 422.2l-1.7 1.5M689.9 425.6l0.9 0.9M597.3 439.1l1.2 -0.8M726.0 424.2l-0.3 1.1M665.0 421.4l1.8 -1.5M626.1 435.1l-0.2 1.6M597.1 448.1l0.8 -0.3M609.7 426.1l2.2 0.8M650.2 420.4l1.9 -0.6M614.9 430.5l0.2 1.0M671.1 430.6l1.7 -1.5M628.0 418.0l2.3 -0.7M669.0 418.1l-1.1 1.8M718.8 427.0l-0.5 0.9M644.9 428.1l0.9 0.6M708.8 427.9l-0.0 1.4M691.5 430.6l-1.1 2.1M643.6 425.2l2.1 1.2M603.3 422.0l1.9 1.7M669.2 430.8l1.2 1.3M605.9 419.7l-0.5 1.9M625.4 445.9l-0.1 1.1M613.7 435.6l2.2 1.0M660.4 425.4l-1.2 2.2M635.1 444.0l1.4 0.9M656.3 437.1l-0.1 2.2M714.2 420.1l-0.5 1.3M608.9 417.1l1.7 -0.6M655.9 417.2l-1.4 2.0M655.4 426.6l0.5 1.8M608.9 428.2l0.1 1.0M623.1 423.1l0.8 -0.3M667.6 426.3l-0.2 2.0M634.5 444.1l1.9 0.8M658.3 425.7l0.1 0.9M618.0 449.3l-1.4 1.9M661.8 421.2l-0.5 1.2M642.2 428.3l1.2 1.4M638.7 426.5l-0.8 0.7M606.1 429.3l-0.2 2.6M728.2 424.8l0.4 1.8M718.2 424.5l1.5 -1.7M727.9 424.4l1.4 0.2M604.8 451.7l0.9 0.3M611.8 417.2l2.2 1.3M630.9 435.3l-1.0 2.3M619.9 449.2l-0.1 0.8M612.2 451.8l1.3 -0.9M676.8 431.6l0.5 0.6M610.1 424.5l-1.4 1.8M653.6 423.7l1.2 1.4M601.9 442.5l0.9 -0.5M636.8 433.5l0.2 1.1M617.7 418.2l0.2 1.9M606.2 444.6l2.0 -0.5M659.5 433.4l2.0 0.4M618.0 433.0l-1.2 1.4M671.7 427.5l-0.3 1.2M626.9 442.3l0.5 2.5M716.7 422.3l0.9 1.1M635.4 433.5l-0.5 2.1M620.3 449.1l1.0 1.1M629.1 446.0l0.7 -0.4M596.3 426.3l1.6 1.0M704.0 430.0l1.7 -0.2M692.5 419.8l-0.5 0.7M682.4 426.8l-0.9 0.9M593.9 428.0l1.0 1.0M591.6 431.1l-0.4 0.9M604.5 448.5l2.3 0.1M715.3 418.9l1.1 0.9M602.9 444.8l1.1 -0.4M654.1 419.3l0.0 2.6M639.8 431.0l-0.8 2.0M650.2 437.2l0.7 -0.6M608.9 416.0l-0.8 1.9M620.9 443.6l2.2 0.5M672.9 430.2l0.8 1.0M615.9 424.8l1.2 -1.2M669.3 433.8l-0.3 2.4M609.4 418.6l1.2 0.3M593.9 434.3l0.7 -0.3M628.7 424.0l1.4 -0.2M657.3 422.4l1.7 1.5M608.0 427.1l-0.6 1.8M680.9 429.5l0.7 0.6M602.0 445.5l1.1 -0.3M711.7 429.6l1.0 2.3M688.6 423.6l1.0 1.1M617.7 419.6l-0.3 1.3M700.1 422.6l1.5 -1.0M612.3 417.2l-0.9 1.1M603.7 423.0l1.9 0.1M604.6 437.2l1.3 1.4M625.9 438.2l0.5 1.7M648.4 431.4l-1.0 1.5M701.2 422.9l1.8 -0.2M704.3 423.1l2.1 -0.0M707.0 424.8l0.0 2.0M655.8 428.7l0.0 0.8M635.7 418.3l1.2 -1.2M655.4 428.3l1.7 0.1M631.8 428.4l1.2 0.6M610.2 422.5l1.4 -0.3M711.1 427.7l-0.6 0.6M699.0 429.3l0.7 1.8M644.5 425.3l2.1 -1.2M607.8 422.6l1.6 -1.5M706.0 418.8l0.6 2.3M660.3 424.6l1.1 -0.0M614.8 449.9l1.5 1.1M660.6 433.2l0.4 0.9M598.3 449.7l1.0 -0.5M657.7 433.3l-0.4 1.0M647.3 432.4l-0.5 1.1M611.1 434.8l1.9 1.6M606.2 432.7l1.5 0.9M592.7 439.1l0.9 0.4M725.2 423.2l2.1 -1.1M603.5 417.1l1.0 1.1M605.2 437.8l0.5 1.5M606.4 416.1l-0.3 1.2M609.0 446.5l0.1 2.2M622.3 419.3l-0.4 1.9M607.1 446.5l-0.3 2.4M591.9 438.9l-0.9 1.7M607.5 423.1l1.4 -1.4M627.4 446.7l0.5 1.7M675.2 423.8l1.5 1.1M654.0 437.7l2.5 0.6M675.4 427.2l1.5 0.6M664.6 426.9l1.6 1.0M682.3 425.8l-0.0 1.3M623.4 445.4l1.6 -0.4M727.0 424.2l0.9 0.2M639.9 432.1l1.7 -1.2M622.5 424.5l-0.2 0.8M666.0 425.5l1.2 1.2M591.3 428.5l-0.3 1.1M595.4 442.7l-0.5 1.8M596.2 432.5l2.3 0.4M609.0 451.1l1.0 1.5M603.7 433.0l2.2 -0.6M606.2 437.6l1.1 -0.3M658.3 415.9l-0.5 1.9M602.8 442.9l-0.9 0.7M638.3 441.2l2.1 -0.1M624.1 420.5l1.6 0.5M629.7 445.6l1.0 -0.9M598.0 442.8l0.1 1.9M666.7 421.5l1.6 -1.3M662.4 429.7l1.2 -1.4M613.9 449.1l-0.7 1.1M712.8 424.4l1.5 -0.4M662.0 436.4l1.7 -1.7M663.1 424.6l1.1 0.4M665.6 418.3l1.0 1.0M643.8 425.3l1.8 1.7M647.4 431.4l-0.1 1.9M720.8 427.4l-0.4 0.7M602.0 450.8l0.1 1.5M619.3 440.0l-0.1 0.9M613.8 445.2l-1.4 2.1M688.0 421.3l0.4 1.3M704.3 425.9l1.8 -1.8M638.5 417.2l2.4 -0.6M682.4 432.0l1.1 1.2M667.2 433.6l0.6 0.8M599.6 452.3l0.8 0.7M628.7 431.3l2.1 -0.3M649.3 435.4l0.9 1.0M610.2 436.5l1.3 0.6M689.1 428.9l2.3 -0.9M637.0 435.9l1.2 0.4M693.7 426.0l-0.2 1.6M685.6 431.6l0.7 -0.6M617.7 421.5l0.6 1.9M624.9 424.1l0.7 0.9M674.9 424.3l2.1 0.7M654.9 417.8l1.0 1.0M645.1 429.3l1.6 -0.7M609.6 442.2l-1.3 1.2M680.8 431.9l0.9 1.3M630.8 419.0l-0.3 2.3M633.6 437.6l1.1 0.7M638.2 417.3l-0.1 1.7M620.5 421.6l1.2 0.7M602.9 443.0l1.3 -1.1M671.8 431.2l1.3 1.2M675.0 428.2l0.7 1.1M697.6 420.7l1.2 -1.4M614.8 440.8l-1.5 1.2M622.4 430.6l0.9 0.1M692.7 421.1l-0.4 2.0M690.0 430.3l-1.3 2.0M678.0 424.7l-1.8 1.6M592.9 433.1l0.8 0.6M718.9 423.2l-0.5 0.9M650.5 438.4l-1.3 1.2M669.2 432.9l1.5 0.5M642.2 418.0l-0.1 1.0M716.6 421.5l1.8 1.1M715.5 421.7l-0.0 1.4M656.1 426.4l2.3 -0.5M623.4 433.8l0.5 2.0M621.0 416.6l0.7 0.9M630.4 435.0l0.4 1.0M655.5 423.6l1.2 1.4M670.5 426.7l-0.4 2.1M679.0 421.5l-0.4 1.1M600.1 431.1l0.1 1.3M701.9 425.4l1.9 -0.4M615.4 448.4l0.4 1.0M729.0 415.5l2.2 -1.3M701.5 420.6l1.4 -1.7M642.8 417.5l0.5 1.6M713.3 421.0l-1.6 1.9M667.4 421.0l1.2 -0.7M680.0 427.3l-0.3 2.2M603.7 448.7l1.7 0.4M691.9 430.6l2.1 0.3M634.6 444.8l-0.2 0.8M694.6 427.5l0.1 1.7M601.6 434.9l1.3 0.2M620.9 423.5l0.6 2.3M697.6 425.0l1.4 1.1M666.2 434.3l0.7 1.9M635.1 443.2l1.8 1.5M712.3 424.2l2.1 0.7M688.2 430.4l1.7 0.0M592.1 432.2l2.2 -1.3M602.2 424.5l1.7 1.5M644.9 432.5l-0.2 2.5M629.4 418.3l1.0 2.1M689.4 421.9l0.7 2.0M602.0 448.1l-0.3 2.2M640.3 419.2l-0.6 1.3M610.5 423.9l1.1 -1.3M656.2 419.5l1.5 1.9M706.2 426.9l-1.4 1.1M635.9 431.3l-0.4 1.3M690.9 421.5l-1.0 2.4M714.2 418.4l-0.9 1.6M660.4 425.0l1.9 -0.3M720.1 425.6l1.1 -0.7M609.3 428.8l-1.5 1.9M600.6 424.2l1.1 -1.3M613.4 419.0l1.0 -0.9M606.0 446.8l1.7 1.6M729.4 423.1l2.2 1.1M604.7 440.5l-0.3 1.0M624.6 433.5l-0.7 0.9M599.8 450.3l-0.1 2.2M668.3 425.4l1.5 -0.9M695.3 422.6l-0.3 1.7M657.7 434.9l-1.3 1.6M608.3 424.6l1.3 -0.4M697.4 429.2l1.5 1.4M707.5 427.1l0.9 0.6M641.8 433.0l-1.4 1.6M702.1 421.2l0.9 -1.1M640.3 421.3l1.0 1.3M650.6 424.1l1.9 -0.6M718.3 426.0l1.2 0.4M632.1 431.4l1.5 2.1M602.3 453.8l-1.1 1.8M617.1 423.9l0.9 0.1M618.3 421.1l2.1 1.2M731.8 420.5l0.2 1.0M605.3 446.3l1.5 0.9M701.7 422.2l0.6 1.1M693.0 420.3l1.4 -1.6M628.3 445.3l2.0 0.7M597.2 440.2l1.6 1.3M670.4 431.0l1.4 -0.3M713.6 419.1l-0.7 1.6M647.1 420.9l-0.5 2.5M641.2 418.6l0.3 1.8M618.5 417.7l-0.8 1.9M627.9 434.0l-0.5 2.1M603.9 445.8l-0.2 0.8M601.7 431.2l1.6 1.2M607.9 450.6l2.4 -0.7M612.1 423.0l-0.6 1.4M708.3 418.7l-0.1 1.3M689.1 430.6l1.0 -0.0M617.1 417.1l-1.3 1.2M607.2 436.1l-1.1 0.9M678.6 424.5l1.6 0.1M648.9 434.7l-1.1 1.8M619.9 439.3l0.7 -0.4M604.3 453.0l-0.5 2.5M703.6 420.1l-0.0 0.9M690.7 421.3l1.2 1.4M688.6 432.1l1.6 -0.1M601.8 425.5l0.8 0.7M694.1 432.4l1.2 0.1M683.3 427.9l-0.1 1.6M619.6 446.4l-0.8 1.5M670.6 419.4l1.1 -1.2M610.6 431.8l0.9 0.2M622.5 440.1l1.9 1.6M675.4 434.0l1.0 -1.2M666.9 427.8l0.7 2.5M662.3 434.5l1.8 -1.5M592.9 434.1l-1.2 1.1M649.9 434.3l-0.4 0.9M615.3 450.0l0.7 -0.5M629.6 446.4l1.0 1.0M625.5 426.7l1.5 1.8M661.0 422.9l0.5 0.9M674.4 419.3l0.9 0.9M621.0 424.4l-0.3 1.1M667.8 426.9l1.4 1.4M661.5 419.7l0.3 2.1M640.0 418.2l1.7 1.7M623.2 417.2l2.1 -0.2M672.1 424.9l-0.8 1.0M654.3 432.5l0.4 1.5M719.2 426.2l1.8 -1.0M695.3 427.2l1.8 1.3M630.8 429.5l1.7 0.1M599.7 439.9l2.0 0.7M624.0 435.5l0.6 0.5M719.4 416.8l-0.0 2.0M723.7 418.8l0.7 2.2M700.5 430.0l1.5 0.8M695.1 428.0l1.7 0.8M644.6 435.6l1.4 1.0M632.5 430.1l1.2 1.6M646.9 437.4l-0.7 0.6M626.7 427.8l1.6 -1.1M630.3 437.2l-0.1 2.0M624.3 440.7l0.7 0.4M656.9 434.4l0.7 1.3M632.0 426.0l0.4 1.8M733.5 419.3l1.0 -0.7M632.2 441.6l1.7 -1.7M607.3 426.7l1.0 -0.1M719.3 419.7l-0.7 0.8M681.0 429.0l-0.7 1.2M643.9 423.1l2.6 -0.3M636.1 443.7l0.1 2.6M649.1 431.3l-1.7 1.5M668.1 429.9l0.8 0.0M593.3 428.8l-0.7 2.1M661.8 417.7l2.0 1.0M662.7 433.5l-0.7 1.5M646.3 428.4l1.6 0.3M600.3 450.5l-1.4 1.1M652.1 418.8l-1.5 1.8M622.6 434.5l1.7 -0.4M722.7 421.3l0.5 2.1M634.6 441.8l1.3 0.7M643.6 431.2l1.4 -0.4M663.4 423.0l-0.7 1.0M642.8 437.6l1.1 0.1M629.1 444.3l-0.6 1.3M645.5 415.3l-0.2 2.3M592.4 439.6l-0.2 1.5M610.1 448.6l1.2 -0.6M606.5 425.0l1.2 1.2M632.9 429.3l0.5 1.9M612.8 415.8l1.7 0.7M598.0 441.4l-0.6 0.7M614.3 430.8l0.7 -0.6M634.6 430.6l1.4 1.5M653.8 430.5l0.3 1.1M618.2 433.6l-0.2 1.3M607.8 433.9l-0.3 1.1M623.1 423.5l0.4 1.3M648.1 432.7l0.1 1.2M604.2 430.2l0.9 0.7M661.7 416.1l-0.1 2.0M629.1 424.3l1.4 1.3M643.4 417.2l1.6 0.8M605.4 442.1l1.4 0.8M637.6 436.0l0.2 1.8M627.7 434.7l1.8 0.3M614.0 449.1l-0.8 1.6M599.1 427.7l1.1 0.3M595.1 419.6l1.1 0.1M667.6 424.4l0.7 -0.7M649.1 420.8l0.9 1.3M718.0 427.3l0.6 0.7M612.4 443.5l-1.6 1.8M654.3 435.0l2.3 -0.5M595.5 422.4l0.8 0.7M691.2 431.8l1.0 -0.2M597.9 450.9l-0.5 0.8M619.1 417.9l0.9 0.1M653.1 421.5l-0.3 1.5M720.3 427.3l-0.2 0.8M710.1 419.1l2.4 0.7M615.4 440.3l1.0 1.0M661.5 434.6l0.9 2.3M597.4 423.0l1.3 1.5M641.3 429.9l-1.3 1.9M655.8 436.0l-1.8 1.9M602.4 451.0l0.6 0.7M619.5 444.9l1.2 1.7M603.1 429.3l2.0 -0.5M657.2 419.8l1.1 1.2M606.5 439.9l1.0 1.7M617.8 433.5l2.3 0.5M598.7 433.6l1.7 -0.2M606.4 448.5l1.5 -0.6M619.6 427.0l0.3 0.9M610.5 441.6l0.8 0.7M650.0 436.8l1.4 -1.2M617.2 432.9l2.0 -1.4M594.7 442.3l-0.1 1.6M604.9 438.5l-0.6 1.2M651.3 420.2l-0.8 2.0M626.5 442.3l0.9 2.1M644.7 432.8l1.6 1.0M721.3 422.9l1.4 -1.0M633.2 415.9l1.8 0.4M614.2 448.8l1.0 0.2M631.3 427.5l1.4 1.0M677.0 430.7l0.3 1.5M718.1 417.6l0.6 0.6M653.1 438.6l0.6 -0.7M628.2 430.5l1.4 0.6M642.5 434.7l0.2 1.2M664.2 416.3l1.4 0.2M647.2 436.9l0.8 1.2M600.5 451.2l-0.1 1.0M650.4 439.7l2.3 -0.8M647.5 427.3l-0.2 2.0M614.3 428.1l1.5 1.4M683.7 427.5l1.9 -0.7M630.0 443.7l1.5 1.4M600.5 447.2l1.2 0.5M623.9 444.7l-1.0 1.3M591.4 430.4l1.3 1.2M612.7 437.8l1.3 -0.3M633.0 421.0l1.9 0.5M732.1 418.4l1.1 -0.5M605.7 437.5l1.7 -0.8M601.0 428.7l2.3 -0.3M607.3 431.1l1.0 2.1M641.1 436.7l0.4 1.4M639.5 433.1l1.2 0.9M689.6 421.3l0.7 1.6M673.2 428.0l-1.3 1.3M685.0 426.5l2.2 0.1M691.9 429.8l-1.7 1.9M654.0 434.5l-0.6 0.7M677.2 433.1l1.5 -1.7M627.3 438.9l-0.3 1.4M650.5 418.7l0.7 0.5M720.9 415.9l0.1 1.4M623.2 440.5l1.3 1.5M633.9 418.2l1.1 -0.7M708.0 425.3l-1.1 1.8M594.6 438.1l-0.5 2.3M668.4 428.4l1.7 -0.1M610.0 434.7l2.0 0.1M593.5 442.9l-0.2 1.1M717.5 421.6l0.5 2.0M692.2 430.8l2.5 -0.3M694.7 420.2l0.7 2.3M612.0 419.1l1.7 -0.8M620.0 443.7l2.0 0.7M597.8 437.9l-0.4 0.9M664.6 425.9l-0.3 0.8M645.6 419.7l-1.1 2.2M613.5 434.2l0.3 1.6M621.8 425.6l1.1 2.0M630.7 430.8l0.7 1.5M628.9 430.5l0.2 0.9M636.9 421.6l-1.2 1.3M607.0 431.7l1.0 0.6M634.0 432.4l0.9 2.4M685.0 427.7l0.3 1.9M647.5 420.1l1.4 -0.4M600.6 419.2l1.5 1.4M640.8 431.8l0.2 2.2M672.0 418.2l1.3 1.3M703.3 424.4l0.8 1.9M626.4 426.6l1.6 0.8M601.2 423.5l0.3 1.9M696.4 429.1l1.1 1.5M684.9 423.7l1.2 1.6M688.0 422.8l2.1 0.4M689.6 422.9l1.9 1.7M641.0 421.8l1.2 -0.0M625.4 444.0l0.8 0.2M694.0 424.6l1.4 -0.8M644.7 436.2l0.2 1.0M723.6 423.5l0.6 0.7M670.1 429.1l1.0 1.8M651.5 419.7l1.2 1.9M656.7 422.4l1.0 0.4M672.6 429.1l0.7 1.1M653.8 420.3l1.9 -1.4M613.8 436.9l1.6 1.5M652.2 431.9l0.4 0.9M611.4 431.3l2.2 -0.8M594.0 435.9l1.6 -0.9M682.8 421.1l1.7 1.4M609.9 437.4l0.9 1.0M672.1 425.1l-0.5 1.1M642.0 438.0l0.1 1.2M635.2 438.8l1.2 -1.3M651.1 420.1l-0.3 1.8M670.8 431.8l0.0 1.1M652.8 436.2l1.9 -1.0M695.8 421.8l2.3 0.3M599.2 420.1l-0.6 1.8M724.9 422.3l0.9 0.1M648.5 430.2l0.9 2.2M673.3 425.7l2.2 -1.0M618.9 442.7l2.0 -0.5M677.3 427.8l1.7 0.5M597.6 447.6l1.7 -1.6M604.2 451.1l-0.2 0.9M722.0 425.2l1.6 1.5M653.9 432.4l0.4 1.0M608.1 448.0l1.7 1.9M632.5 418.4l1.0 -0.5M673.8 426.9l0.9 0.7M669.3 422.9l-1.7 1.5M644.3 436.3l1.3 0.8M623.8 432.5l1.1 1.4M591.6 429.9l1.6 1.8M638.4 438.9l-1.9 1.7M640.1 440.7l-0.7 2.0M642.0 423.5l1.0 0.1M631.9 426.2l0.2 1.5M649.1 436.5l-0.1 2.3M641.9 421.6l0.9 -0.8M596.9 431.0l1.2 1.4M670.6 424.9l2.1 -0.5M608.3 424.3l1.7 -1.8M637.2 417.5l0.7 -0.9M605.4 425.0l2.4 0.4M601.4 416.3l1.2 0.2M650.9 439.0l2.0 0.7M640.0 439.7l-1.1 1.2M660.9 434.2l-0.4 2.0M635.3 434.3l-1.4 2.2M635.1 421.3l1.5 -0.2M628.1 433.7l1.2 1.4M694.0 422.0l0.8 -0.9M688.9 430.9l1.8 0.3M598.8 434.8l2.3 0.9M628.7 419.4l1.7 0.9M603.4 425.4l1.8 1.0M594.4 422.4l2.2 0.9M632.5 430.2l1.3 1.1M668.0 424.8l-0.1 0.8M599.3 426.8l1.8 -0.3M600.8 449.5l1.9 -0.7M717.5 419.9l0.9 1.7M646.5 434.8l0.4 1.3M706.6 425.6l1.4 0.5M628.1 421.9l-0.7 0.7M655.0 435.3l0.9 -0.5M642.8 441.0l0.6 1.1M704.0 422.0l-0.9 1.4M624.1 433.8l1.2 -1.4M655.8 437.4l1.7 -0.5M596.8 452.6l-0.8 1.4M605.3 438.0l0.9 0.4M645.6 425.2l2.2 0.6M698.5 421.6l-0.4 2.2M632.4 426.6l-1.2 1.9M699.4 429.7l1.0 0.9M653.0 430.2l0.0 0.9M631.2 444.5l-0.6 2.1M627.2 441.7l-1.4 1.2M681.6 428.0l1.6 -1.2M707.3 422.8l0.8 1.5M677.6 430.1l1.3 -0.7M691.1 426.8l1.0 -0.2M648.7 423.2l0.1 1.1M606.4 433.5l1.1 0.2M649.7 429.7l0.5 0.8M708.0 419.7l1.9 1.7M638.7 429.0l2.1 -0.1M672.6 418.8l1.5 -0.6M667.3 434.5l0.3 2.0M646.5 430.4l0.6 1.3M716.2 425.4l1.8 -0.1M722.0 424.7l0.8 0.5M690.7 421.2l1.4 -1.5M704.7 423.3l2.0 -0.4M636.4 423.3l1.2 -0.5M689.3 420.4l-1.8 1.8M663.4 432.1l-0.2 0.9M623.4 424.1l2.2 0.1M631.0 425.9l-1.0 1.2M644.9 440.0l0.8 0.7M618.0 416.2l0.7 -0.7M632.5 435.1l1.4 0.2M724.8 422.6l1.5 -1.0M629.4 440.3l-1.3 1.8M657.0 436.5l0.5 1.3M732.1 416.3l0.7 2.0M629.5 443.5l1.6 -0.6M722.6 417.4l1.4 0.5M726.0 422.5l0.3 2.5M650.3 434.9l0.8 0.4M672.8 424.9l-0.8 0.8M600.2 429.5l1.2 0.2M724.5 423.6l-0.9 0.9M653.2 429.3l1.3 1.7M623.9 447.1l-0.6 0.7M594.5 420.6l2.1 1.3M626.8 442.2l0.9 1.2M695.0 424.0l1.5 0.5M628.3 435.6l1.9 -1.7M621.0 419.6l-1.3 1.1M721.6 425.2l1.6 2.0M665.4 435.1l0.0 1.1M610.4 444.2l1.5 1.2M628.1 429.2l2.2 0.6M593.3 445.3l1.4 -0.7M610.9 448.5l-1.7 1.5M614.4 431.3l1.6 -2.0M612.6 421.0l1.3 0.3M616.1 418.1l0.5 1.7M606.7 428.6l1.2 1.3M609.7 439.9l0.8 -0.6M667.9 421.3l0.8 1.0M612.1 441.7l0.2 2.2M693.0 419.8l1.4 -0.9M638.2 416.2l-1.1 1.2M708.0 419.8l-0.5 1.2M639.1 421.0l1.5 -1.3M631.0 430.4l-0.5 1.9M599.8 450.7l-1.4 1.5M647.0 422.6l-0.9 1.3M609.9 422.3l1.1 0.5M619.0 431.0l0.8 0.7M651.4 429.5l0.4 0.8M732.1 421.4l2.2 1.1M714.0 425.7l-0.2 1.5M634.5 441.2l-1.5 1.8M671.1 421.9l-1.3 1.1M597.1 426.4l1.0 0.7M702.0 422.0l0.9 1.1M675.3 425.3l1.5 1.5M638.7 441.4l-0.6 0.6M599.7 444.5l0.8 1.3M687.3 428.3l0.9 0.2M625.7 416.0l1.0 0.5M611.3 448.0l2.5 0.1M603.5 424.5l2.4 -0.8M635.6 415.2l-1.3 2.1M595.0 422.8l1.4 -1.7M601.1 437.9l0.9 0.5M731.9 421.9l1.3 0.7M681.9 424.5l1.9 -0.8M611.3 421.1l-0.5 1.0M624.9 434.4l0.2 0.8M628.8 446.6l0.1 1.2M623.1 441.2l1.0 -1.1M668.1 420.6l0.9 -0.8M647.8 426.0l1.5 1.0M618.9 438.2l0.8 -0.8M594.7 447.1l1.9 1.4M594.4 449.2l0.4 1.4M667.9 427.5l0.7 0.8M722.3 415.6l1.2 0.1M661.9 434.6l1.0 -0.8M708.6 419.7l-0.9 1.5M634.5 433.8l-0.9 1.3M670.8 435.1l2.3 -0.6M616.6 424.0l-0.7 0.6M666.6 423.2l2.4 -0.3M652.6 422.3l1.6 -0.6M703.0 428.3l1.8 -0.7M616.3 434.6l-1.1 2.0M682.5 421.0l0.7 0.5M627.8 430.4l-0.7 1.9M725.8 425.1l1.0 -0.8M605.9 453.4l1.8 -0.0M723.2 424.0l1.9 -1.1M610.9 435.9l-0.2 1.3M623.8 419.4l1.7 -0.3M644.4 420.8l-0.4 0.9M665.4 422.1l2.4 0.1M628.9 429.5l0.4 2.5" stroke="#0d0d0d" stroke-width="0.8" fill="none"/>
<path d="M605.4 436.0l1.4 -0.6M626.1 437.3l1.5 1.0M661.0 431.1l2.5 -0.4M650.9 433.7l-1.6 1.8M629.1 430.4l2.6 -1.3M609.1 427.1l1.8 -0.3M598.7 428.3l1.5 -1.3M633.5 418.6l-0.1 1.1M621.2 421.9l2.5 0.2M605.7 434.6l-0.7 2.0M601.8 442.9l1.6 -0.2M657.4 431.2l1.1 -0.0M624.9 431.5l0.5 0.8M648.5 429.6l0.6 0.9M646.3 426.9l-0.3 1.3M636.6 424.2l-0.5 1.3M611.4 425.1l1.1 -0.6M627.7 425.1l2.1 -0.9M627.8 423.1l0.9 -0.7M647.2 419.5l-1.1 1.6M619.3 430.1l1.8 -0.5M607.9 422.3l1.4 -0.4M642.8 424.0l1.9 0.6M630.0 424.4l1.0 0.3M618.1 420.5l1.1 0.8M614.9 424.8l1.1 2.5M649.7 424.7l0.8 0.8M668.8 425.1l2.7 -1.0M623.5 425.0l-1.3 1.6M662.3 423.9l-1.2 1.6M629.6 438.7l0.2 2.4M647.4 434.5l2.5 -1.1M615.5 442.1l1.7 -1.7M606.8 435.7l2.5 -0.6M640.5 436.4l1.7 -0.7M613.7 442.4l-0.6 1.7M613.4 426.4l-1.3 2.0M607.7 425.8l1.1 -0.6M640.9 422.4l1.5 -0.9M639.7 433.1l0.5 1.3M643.9 436.0l0.5 1.6M597.1 437.6l2.8 0.6M598.6 441.5l0.2 1.4M647.3 426.6l1.9 1.5M626.1 438.6l-0.8 2.6M615.0 438.2l1.2 -0.8M667.9 426.8l-1.0 1.3M653.6 428.6l2.0 -1.7M600.8 428.0l1.2 0.8M624.3 428.2l0.1 1.1M603.4 431.3l2.3 -1.4M611.6 420.5l-0.8 2.3M599.8 439.1l2.3 -1.3M601.3 423.6l2.0 -1.2M607.4 420.7l-0.1 2.0M601.5 434.6l0.4 1.3M642.0 424.0l1.7 1.6M659.8 428.3l-0.3 1.4M608.7 423.9l0.9 1.8M628.5 424.1l-0.2 1.3M631.7 434.8l-1.3 2.0M621.3 423.3l-0.5 2.8M607.2 441.7l1.0 -0.7M623.5 430.5l1.8 1.5M640.0 430.3l1.6 -0.6M615.4 439.7l2.5 0.8M627.2 423.7l-1.1 1.0M626.7 434.1l1.9 -0.6M663.7 426.6l0.8 1.7M606.3 432.4l1.0 -0.1M634.0 432.2l1.2 -1.1M622.4 421.1l1.0 2.0M649.9 418.4l-0.4 1.9M646.4 424.7l2.4 1.0M666.3 419.5l0.6 2.7M656.6 423.0l1.4 -1.4M668.7 424.6l1.1 1.5M616.7 431.9l-0.2 1.5M639.6 435.5l1.2 1.1M608.7 438.0l2.5 1.6M639.4 437.4l-1.3 1.8M620.0 438.5l1.3 0.3M604.8 440.4l1.6 -1.6M603.6 437.1l1.2 1.7M639.6 436.5l1.3 -0.8M633.7 429.7l2.1 -1.4M635.8 438.6l1.5 -0.7M623.6 429.4l2.4 -1.0M652.6 424.2l-0.7 0.8M620.0 426.5l0.9 1.7M667.2 423.5l1.2 2.0M656.5 430.3l2.3 -0.8M635.0 420.3l-1.0 1.6M616.2 424.4l-0.0 2.1M609.0 432.0l1.9 -0.4M625.1 434.3l0.4 1.3M622.3 419.0l2.0 -0.5M632.0 436.5l-0.6 1.6M635.9 436.2l1.9 -0.9M650.5 429.9l0.9 1.9M649.4 432.0l1.5 0.5M620.5 421.5l-0.7 2.1M607.6 424.1l1.3 1.9M615.9 434.9l0.6 2.5M619.6 421.2l0.9 1.9M612.8 444.9l0.8 1.5M642.9 421.0l1.3 -0.9M636.1 427.5l0.2 2.3M647.6 425.8l1.9 -1.8M654.3 432.9l1.3 -0.8M637.1 433.7l1.4 0.1M618.9 438.1l1.3 0.0M663.0 424.3l-1.8 2.2M617.5 438.4l-0.8 0.8M604.0 428.4l2.6 1.3M637.4 429.7l-0.7 0.9M643.2 421.8l-1.2 1.6M644.5 431.8l1.2 -1.2M610.2 420.7l-0.4 1.0M611.9 443.5l1.5 0.9M618.7 433.8l0.5 1.3M645.7 428.5l-0.3 1.9M629.9 418.9l1.6 -0.0M629.4 421.5l-0.9 1.3M604.7 435.6l1.5 -1.3M636.6 430.8l1.4 1.6M642.5 423.7l-1.4 1.6M642.9 433.6l0.2 2.5M624.3 434.7l-0.3 2.4M625.2 428.5l2.3 -0.2M624.8 426.7l1.9 1.3M645.4 433.9l2.2 0.6M635.6 436.9l-0.7 2.8M622.6 441.8l1.0 0.7M630.5 438.8l1.5 1.5M600.8 435.8l0.6 1.3M636.2 426.8l1.6 -0.7M606.3 447.3l2.4 -0.6M603.2 444.1l1.5 1.5M639.8 425.2l1.2 2.5M621.4 442.2l-1.6 1.9M623.4 425.9l1.2 -0.9M620.1 442.7l-0.0 1.0M608.0 438.8l1.3 0.5M662.8 427.4l1.0 -0.6M606.0 427.4l2.9 -0.6M653.2 420.2l1.0 0.7M609.3 423.5l1.8 1.7M650.1 431.9l1.3 -0.4M615.0 441.8l0.2 1.2M610.6 424.1l1.9 1.9M658.1 424.0l1.1 0.2M617.7 422.3l1.9 0.8M649.5 421.7l1.5 -0.9M636.6 427.0l-1.7 2.3M634.9 437.4l0.1 1.7M628.0 431.3l-1.9 1.9M661.2 427.2l1.0 -0.5M618.7 419.7l0.5 1.9M635.5 431.3l-1.3 2.6M620.4 421.8l1.8 1.2M610.7 434.6l1.9 -0.5M633.9 433.0l0.1 1.1M645.9 419.4l1.4 2.6M644.2 424.2l1.9 -0.2M626.1 419.9l-1.7 1.8M626.4 433.4l-0.5 1.2M603.9 429.3l1.2 0.4M662.2 419.9l1.3 2.4M662.5 422.6l2.4 -0.3M597.5 439.0l1.7 1.2M614.9 443.5l1.2 0.4M600.1 423.0l1.4 2.3M607.2 445.8l-0.3 1.1M650.8 432.1l-0.8 1.2M608.8 442.9l1.9 -1.5M603.7 424.6l-1.0 2.3M607.5 424.8l0.7 1.7M620.6 435.4l-0.1 1.6M607.6 443.4l2.4 1.1M613.8 440.5l-0.5 2.6M628.4 424.8l1.9 -0.6M655.5 427.7l2.4 0.4M598.9 430.8l1.3 0.6M597.3 436.4l0.6 1.5M644.0 424.4l1.9 -1.5M636.2 434.1l2.1 2.0M611.3 434.1l-0.9 1.6M643.1 420.5l1.2 1.7M631.5 422.7l2.4 1.6M600.0 438.3l1.8 -0.3M616.9 422.2l2.3 0.1M653.0 433.1l0.5 1.2M652.7 428.7l2.5 0.3M605.5 436.8l-1.8 2.0M614.7 426.9l2.5 -1.0M637.7 418.5l0.6 1.1M655.7 420.6l0.9 0.9M603.4 441.1l1.6 1.8M618.2 431.9l-0.2 2.0M601.0 443.6l1.2 1.6M610.4 431.0l2.2 1.0M643.8 423.6l2.0 -0.9M646.0 421.4l-0.4 1.2M601.2 440.5l1.0 -0.8M597.5 439.9l2.0 -2.0M599.6 430.2l0.8 1.4M603.9 437.0l1.2 0.3M616.3 431.5l-1.7 1.6M604.8 438.1l2.3 0.3M658.3 419.9l-0.1 2.1M655.2 425.2l1.7 0.3M600.8 447.8l1.6 -1.0M606.6 434.9l-1.2 2.6M617.6 438.2l2.3 -1.2M627.3 435.9l2.7 0.4M651.1 422.5l0.9 0.9M640.0 431.9l1.9 -1.0M640.5 430.1l1.6 1.2M652.5 419.8l1.5 -1.3M610.3 429.5l1.0 0.8M619.1 420.1l-0.8 1.6M644.9 430.8l2.7 -0.2M613.0 441.9l0.5 1.0M647.9 432.0l0.3 2.3M598.9 430.4l2.9 0.4M631.4 430.5l2.2 1.4M646.8 427.0l1.5 0.8M661.9 421.9l1.2 1.3M625.4 427.2l-0.8 1.0M604.2 437.5l2.7 -0.1M645.0 423.7l-0.4 1.4M604.6 437.9l1.5 -1.4M619.2 438.8l0.3 1.2M659.7 423.7l-0.4 2.1M641.4 429.5l-0.4 1.4M668.8 425.6l-1.1 1.9M658.1 424.1l1.3 1.2M637.3 435.9l0.2 2.7M649.6 430.0l2.1 -0.7M632.9 419.4l-0.8 1.4M611.0 423.0l1.7 -0.1M657.3 422.7l0.7 1.9M604.8 432.8l1.9 -1.9M601.5 443.1l0.9 2.1M609.1 432.7l2.4 0.4M599.6 423.5l2.3 1.7M599.6 437.0l-0.8 1.1M624.9 439.7l1.0 0.3M630.4 439.2l2.1 0.4M613.1 425.7l-1.5 1.9M607.1 425.7l2.0 0.9M648.8 428.0l1.4 -0.8M640.1 421.3l2.0 2.0M648.5 429.3l2.5 0.7M621.0 423.8l2.3 0.3M608.3 430.9l1.2 0.0M618.5 440.5l1.6 1.9M670.9 425.0l1.4 -0.4M608.1 425.6l-1.0 1.8M599.0 441.0l2.1 -0.8M661.3 422.0l0.5 1.4M631.9 419.7l1.2 -0.8M606.2 427.6l0.4 1.0M614.4 433.3l1.9 1.9M637.3 418.9l2.5 1.3M644.3 424.4l-0.3 1.0M639.7 427.2l-0.9 1.4M605.0 439.0l-0.3 2.4M632.2 437.5l1.1 -0.3M628.7 433.3l1.2 0.4M615.2 435.6l0.3 1.0M651.6 429.3l-0.5 1.2M602.2 430.6l2.0 0.6M618.6 426.2l-0.8 1.5M632.4 438.2l1.8 0.1M624.0 430.4l2.1 -1.3M644.9 432.2l2.0 -1.9M622.8 433.5l1.3 -1.3M613.4 444.2l0.5 1.3M619.5 428.2l0.9 0.5M618.2 424.2l1.7 -1.1M604.0 423.7l2.0 -0.6M662.3 419.8l1.7 -0.6M618.5 431.2l2.2 -0.9M629.9 424.4l2.0 1.6M660.7 429.2l1.4 -1.3M614.3 424.1l2.0 1.8M657.0 427.0l1.0 1.9M635.2 435.7l2.6 0.1M650.1 432.2l2.0 -0.7M640.9 418.5l-0.2 1.4M601.4 442.2l-1.1 2.7M624.9 436.9l-1.1 2.1M658.3 428.1l-0.4 2.6M620.6 436.6l-1.1 2.5M607.1 422.7l1.6 0.4M646.1 421.6l0.5 1.3M613.4 420.6l-0.4 2.7M650.4 421.9l1.6 -0.7M617.7 443.8l1.3 2.5M651.8 428.9l2.1 0.9M632.1 420.7l1.2 0.6M649.4 430.9l2.3 -0.8M646.7 425.7l1.4 -0.1M629.1 431.2l1.8 -1.2M641.7 424.3l2.6 1.3M624.0 419.0l1.1 2.3M638.9 425.3l1.1 0.2M606.7 431.1l1.8 -1.1M642.4 423.2l0.6 1.2M664.2 421.3l2.1 -0.3M615.1 437.5l0.8 0.7M606.6 421.9l1.9 -0.6M627.5 419.3l1.5 0.9M600.6 425.5l1.4 -0.3M599.4 422.4l-1.5 2.2M609.5 438.8l1.1 0.3M623.1 438.5l1.3 -0.1M603.0 438.0l0.8 1.7M618.1 434.2l1.0 1.7M609.5 422.7l0.7 0.9M599.9 431.9l1.6 0.6M618.6 430.1l0.8 2.4M631.7 422.4l0.4 2.1M625.1 437.9l0.3 1.2M633.6 430.1l2.2 0.3M613.4 419.4l-0.8 2.5M656.8 424.0l-0.6 2.7M600.3 423.0l2.0 0.6M601.5 444.6l0.9 0.7M614.0 427.9l1.5 0.1M637.3 426.5l1.2 0.4M615.9 439.5l0.6 2.7M618.8 419.1l-0.1 1.0M617.8 430.4l1.8 -0.4M637.4 438.0l0.9 0.6M632.1 424.5l0.4 2.3M627.0 433.2l0.8 0.8M618.4 441.7l1.1 1.5M617.3 424.0l2.3 1.9M619.0 421.9l1.0 1.9M641.2 424.6l1.9 1.7M597.3 431.9l-1.1 1.3M669.0 422.9l1.3 -1.2M650.0 419.0l0.2 1.4M606.5 445.8l-1.8 2.1M605.4 437.3l1.7 -0.4M602.2 442.3l1.8 1.8M597.7 434.4l1.0 0.9M635.8 425.9l2.0 -2.0M613.2 440.4l1.5 1.0M605.6 431.7l0.6 1.0M639.6 424.4l1.4 0.0M632.6 438.1l0.9 -0.9M607.7 427.9l1.3 1.0M650.3 420.6l0.5 1.0M663.1 420.7l1.0 1.5M634.4 420.8l0.1 1.2M626.9 432.2l-0.7 2.2M627.5 423.2l2.0 -1.8M610.5 435.8l1.3 1.8M601.6 439.8l1.5 -0.3M604.4 430.0l0.7 0.9M599.2 440.9l2.2 -2.0M670.2 425.5l-1.1 1.2M625.4 438.1l2.5 -0.6M624.4 438.8l2.9 -0.3M624.9 436.2l-0.6 0.8M619.9 422.4l-1.4 2.1M667.7 424.8l1.4 -0.3M611.1 445.6l2.4 -0.8M617.5 429.9l-1.0 2.1M602.2 423.9l1.3 1.2M631.0 429.3l-0.6 2.5M644.7 434.9l2.1 -1.7M610.1 441.4l1.1 -0.3M650.3 433.7l2.6 0.8M635.6 429.7l2.6 -0.8M614.6 425.5l2.5 0.8M669.0 424.7l1.9 2.2M598.4 438.7l-1.4 2.5M607.8 425.1l2.4 1.6M622.1 436.4l0.7 1.4M604.5 437.0l0.1 1.8M613.1 439.9l-0.2 2.7M602.7 425.8l2.4 1.2M639.3 431.1l2.4 -0.4M623.5 439.4l1.5 0.0M622.1 430.6l1.1 -0.3M620.9 433.2l2.4 1.5M606.2 420.6l-1.1 2.5M609.0 420.7l1.6 0.7M629.3 420.4l-0.1 1.4M667.6 427.6l1.1 -0.9M604.8 434.1l1.5 1.2M602.6 422.4l-1.7 1.7M613.8 428.4l1.9 -0.2M648.2 424.2l0.9 -0.9M613.8 432.4l1.8 -1.0M605.8 445.6l2.4 -0.2M646.0 423.7l1.6 -1.0M635.0 436.6l2.3 0.4M612.2 436.2l2.4 1.6M618.4 435.6l0.0 1.1M611.2 432.4l1.6 1.5M605.8 432.5l1.9 -1.8M650.0 430.6l0.9 1.1M634.8 434.1l2.2 1.0M601.8 441.3l1.9 0.1M667.7 427.1l1.1 1.3M659.1 419.5l1.2 -0.4M650.7 433.1l2.8 -0.9M616.2 436.1l1.6 -1.1M633.0 432.9l1.1 2.1M634.1 426.9l1.0 1.7M604.7 431.4l1.1 0.1M657.3 427.0l2.8 -0.8M646.9 425.3l2.6 -0.1M640.9 424.7l1.2 -0.9M612.6 422.8l0.1 1.8M642.6 432.1l2.3 -1.5M662.9 430.2l-0.3 2.7M664.5 427.9l0.2 1.5M631.6 428.9l0.2 1.0M651.7 432.9l-1.0 1.2M652.5 419.7l2.2 0.7M620.8 431.6l1.2 -0.9M656.3 430.5l1.4 -0.6M628.7 439.4l-1.0 1.9M654.1 418.7l1.0 1.4M608.5 445.7l0.9 1.4M610.1 428.9l-0.4 1.8M628.4 432.9l-0.9 1.5M630.5 438.9l0.1 2.8M617.2 422.8l-0.2 2.7M641.5 425.7l1.0 0.7M608.6 433.8l2.4 0.3M602.9 427.2l-0.7 2.4M648.7 418.8l2.0 -1.8M619.0 433.0l1.2 -0.1M621.5 428.3l1.1 0.6M611.3 444.8l1.4 1.2M635.4 433.8l1.3 1.3M656.6 433.2l-0.9 1.4M597.2 436.0l2.5 0.0M650.7 422.7l0.9 1.7M655.7 429.9l-0.2 2.6M614.2 441.2l1.6 1.6M615.7 441.0l1.4 2.3M618.1 426.2l-0.7 1.5M625.2 438.5l1.2 2.3M635.6 437.1l2.4 -1.2M649.9 418.5l1.8 0.1M604.7 439.6l1.2 -1.0M605.8 431.8l1.3 -0.1M629.7 436.1l1.3 1.9M624.3 420.5l1.8 0.4M651.3 427.3l-1.7 2.0M600.7 430.6l2.0 -0.4M640.7 421.6l0.2 1.3M652.2 432.2l2.1 1.5M667.0 419.0l1.4 1.8M628.9 422.1l1.1 2.5M625.2 434.8l1.7 0.8M635.0 424.9l1.4 -1.0M617.1 438.7l0.7 1.1M644.8 420.6l-1.1 2.5M602.9 431.9l1.8 1.1M601.4 420.9l-1.1 1.3M599.3 435.7l1.2 -0.6M614.7 426.9l0.4 1.4M639.5 427.4l0.2 1.4M599.3 434.3l-1.3 2.0M599.8 447.6l0.9 0.4M652.8 420.5l1.9 -1.3M605.9 427.0l1.1 0.1M614.5 441.3l-0.2 1.6M666.9 425.4l-1.0 1.0M602.6 424.8l1.6 2.2M613.0 441.1l-0.0 1.3M598.7 439.3l2.7 0.1M656.6 430.9l-0.6 1.4M638.0 419.1l1.2 1.9M597.5 438.7l1.0 1.0M618.4 419.1l0.3 1.5M601.1 445.1l-1.0 2.4M600.0 438.6l2.4 -1.3M611.2 445.8l1.7 1.0M622.0 426.0l1.1 0.2M611.2 427.6l0.9 1.4M607.8 424.5l-1.2 1.2M612.1 443.3l0.8 2.8M643.9 434.6l-0.8 2.7M651.0 432.1l2.0 1.9M611.2 435.2l0.8 -0.6M618.6 431.2l-0.4 1.3M651.3 427.5l1.9 1.1M641.7 421.4l1.7 -0.9M663.5 427.9l-1.1 2.7M632.8 437.5l1.2 2.3M616.5 423.6l-0.6 1.3M628.9 423.2l1.3 -0.4M633.3 436.8l1.3 -0.3M601.0 427.2l2.1 0.4M601.5 435.1l0.9 0.9M620.2 441.1l2.6 0.6M616.9 429.2l1.9 0.2M626.5 421.5l1.0 1.1M613.3 433.2l1.4 1.6M656.9 425.2l-0.8 2.1M623.2 433.3l0.2 2.3M629.0 422.4l0.4 1.3M600.5 427.3l1.3 0.1M658.5 419.9l-0.7 1.6M621.1 423.8l1.5 1.8M613.4 423.6l2.2 -0.4M607.3 441.7l-0.8 1.6M641.6 425.3l0.9 0.9M646.1 431.2l2.7 -1.3M659.5 421.3l1.4 -0.1M605.8 422.2l1.1 -0.1M622.2 442.1l0.1 1.1M600.0 422.5l1.9 -0.5M640.6 430.5l-0.0 2.1M620.4 442.5l0.8 1.9M655.1 433.0l-0.1 1.6M609.9 444.6l0.2 1.8M653.7 423.1l1.4 -0.0M629.0 421.8l0.3 1.4M642.5 426.4l2.3 0.0M629.4 439.1l1.9 1.8M635.1 429.4l1.6 0.9M636.1 421.0l0.8 1.5M647.0 422.1l-1.2 1.8M624.6 429.0l0.3 2.0M615.9 436.0l0.8 1.6M609.9 420.5l-0.9 1.5M630.5 430.1l-0.6 1.1M612.6 438.1l2.7 -0.6M620.6 439.1l0.0 1.4M622.4 421.8l-0.7 2.2M665.0 429.1l0.2 2.0M621.1 425.2l-0.9 1.5M610.2 442.5l0.8 2.9M662.0 427.9l-1.4 2.2M603.0 423.5l-0.2 2.7M621.2 420.0l-0.7 1.1M628.6 437.6l0.8 0.7M611.1 432.6l0.0 2.0M610.0 441.9l0.3 1.6M656.3 430.7l-0.1 1.7M609.2 439.0l-1.3 1.5M631.1 425.5l1.4 -0.4M643.6 435.1l-1.0 2.3M636.1 436.5l2.1 -0.1M619.5 428.0l0.2 2.0M620.1 436.3l2.2 -0.2M601.7 442.2l1.9 -0.5M640.0 430.5l-0.2 2.3M635.4 426.4l2.4 -0.7M608.1 427.9l-0.7 2.2M599.5 438.0l1.7 0.3M626.2 425.3l1.8 1.5M634.3 437.1l2.5 -0.6M645.7 427.3l-0.4 2.0M612.3 430.2l2.4 1.5M609.2 425.1l2.4 0.8M658.0 428.4l1.0 2.4M606.7 429.8l-0.8 1.4M636.4 434.1l1.6 0.2M630.7 431.9l0.4 2.1M612.3 432.6l2.2 0.9M605.3 438.7l1.1 0.6M615.7 420.7l0.7 1.0M625.1 428.9l-1.2 2.4M611.8 434.2l-0.9 2.4M602.7 445.4l-0.5 1.0M643.2 424.7l2.4 1.0M661.4 425.0l1.6 -0.8M606.8 422.6l2.0 -0.1M635.4 426.2l1.5 1.1M601.2 439.3l1.2 -0.4M656.3 433.0l-0.0 1.2M640.7 418.7l2.4 0.5M629.7 418.5l-0.3 1.1M620.7 422.7l0.7 1.4M643.5 431.4l1.1 -0.2M656.7 425.2l2.2 0.6M599.4 434.0l0.5 1.1M609.3 446.7l1.0 -0.9M616.7 428.4l1.6 0.4M631.6 437.6l0.9 1.3M670.2 424.1l1.0 1.5M646.0 428.2l0.9 2.3M614.7 440.6l2.0 0.4M636.0 420.8l2.0 1.0M628.9 436.7l-1.5 1.5M648.1 428.5l1.1 0.3M661.4 419.8l1.9 -0.5M615.6 443.0l1.9 0.2M638.3 437.0l1.2 -0.3M638.0 420.4l0.5 2.9M598.6 440.5l2.8 -0.3M643.3 427.2l-0.9 1.2M633.9 431.8l2.4 1.0M619.7 430.3l1.1 -0.1M646.6 428.0l1.5 -0.7M613.4 444.6l1.9 0.1M608.9 438.4l-0.7 0.7M612.2 430.9l-1.2 2.6M640.1 423.9l2.3 0.3M600.3 433.8l0.8 2.7M603.9 444.3l0.9 2.6M652.2 430.9l2.1 -1.8M604.9 442.8l1.0 2.2M634.9 435.0l-0.2 1.8M620.3 429.0l-0.3 1.3M613.4 435.7l1.6 -0.9M598.8 440.3l0.4 1.2M611.0 435.4l0.8 1.8M621.5 441.3l2.2 0.3M619.4 430.9l0.7 0.9M604.4 434.8l1.5 0.1M616.2 431.7l1.2 1.0M605.6 440.3l-0.5 1.2M625.1 429.1l2.1 1.7M648.9 428.2l0.5 1.5M631.2 424.7l1.1 0.6M609.0 433.9l1.1 -0.2M633.5 432.1l-0.5 0.9M596.6 434.9l-1.4 2.2M662.7 425.8l1.5 -1.1M630.9 427.5l1.4 -0.2M633.2 435.1l1.8 0.3M633.8 432.6l-1.6 2.2M653.6 427.1l1.3 -0.4M644.8 424.6l-0.5 1.1M608.1 428.4l2.0 0.5M616.7 441.2l0.1 2.9M610.4 429.5l-1.1 2.0M605.1 438.3l1.0 -0.3M634.8 421.8l0.3 2.3M605.0 420.5l-0.0 2.0M614.7 431.0l2.6 0.7M625.5 441.0l1.7 -1.2M597.8 431.7l1.4 -0.5M661.7 420.5l1.0 -0.7M651.2 426.1l-0.1 1.3M613.1 441.0l-1.2 1.3M609.2 442.2l0.4 2.1M638.9 432.8l1.0 0.4M639.1 425.7l-0.5 2.3M604.9 424.9l1.5 1.2M611.8 433.7l1.0 1.3M603.9 428.1l1.1 0.6M642.0 419.5l0.3 1.9M621.0 433.4l1.9 -0.5M599.0 445.4l2.9 0.5M610.7 427.6l1.0 -0.3M620.8 443.1l1.5 1.5M601.3 440.9l2.1 1.2M657.9 421.0l-0.7 2.3M642.7 431.9l0.1 1.9M660.3 428.1l2.1 -0.4M662.8 419.5l1.2 0.5M618.7 432.6l2.8 0.7M668.1 425.3l-0.4 1.1M656.5 429.9l2.1 -1.1M650.0 428.9l-1.1 1.4M667.4 422.5l-1.1 1.4M616.1 439.4l1.2 -0.1M628.9 423.8l-0.5 1.8M619.3 428.0l0.7 1.7M645.3 426.8l1.4 0.6M611.8 440.8l1.5 2.4M634.8 421.7l0.9 1.9M669.1 423.9l-0.3 1.4M628.1 432.9l0.2 1.4M603.8 424.3l1.8 0.8M652.1 424.9l1.4 0.9M598.0 432.1l1.7 -1.2M632.9 432.2l0.5 2.8M618.2 440.4l-0.2 1.3M658.9 419.6l1.3 2.1M619.1 443.6l-0.9 0.9M612.8 445.5l2.4 0.9M613.6 437.1l-1.0 2.5M600.7 431.9l-0.1 1.6M641.6 418.1l1.5 -0.5M617.7 423.8l0.0 1.4M665.6 423.8l2.2 -0.5M616.9 437.4l0.8 1.0M658.0 418.9l1.0 1.0M639.9 431.2l-0.3 2.4M604.1 447.3l2.1 -1.5M644.0 433.4l1.1 -0.0M629.2 428.3l2.6 -0.6M615.1 443.1l0.5 2.0M606.6 427.6l-0.7 1.0" stroke="#111" stroke-width="0.9" fill="none"/>
<path d="M620.4 437.5l0.7 1.8M630.9 437.4l1.4 0.1M627.1 435.2l1.2 -0.6M655.3 422.6l0.9 1.2M613.9 440.1l0.8 -1.2M599.4 426.6l-1.2 0.6M637.8 438.0l1.2 1.1M645.3 424.5l0.9 -0.6M618.5 435.9l0.4 0.8M628.7 436.7l-0.7 0.4M656.2 421.2l0.6 1.2M653.8 422.8l1.6 -1.4M638.6 431.1l1.9 1.0M650.2 427.5l0.9 0.5M618.2 420.5l-1.2 0.5M637.9 437.4l-1.1 1.3M615.1 421.4l1.5 0.8M615.6 433.9l0.1 0.9M610.9 422.7l1.2 -0.5M620.6 420.1l0.0 1.7M629.1 430.5l0.8 -1.4M602.3 445.6l1.2 -1.5M646.5 434.3l1.3 -0.3M627.1 419.5l0.7 -0.5M614.1 424.0l-0.3 1.3M644.0 418.3l1.0 0.8M623.7 431.0l0.4 0.9M606.6 429.2l0.8 0.9M668.1 421.6l-1.9 0.8M611.3 441.8l1.1 -1.4M601.8 441.8l0.6 1.6M634.0 425.8l1.4 0.6M668.8 422.9l-0.3 1.4M654.7 427.9l0.6 1.7M634.6 435.2l1.5 -1.4M622.3 419.8l1.4 -1.3M606.3 441.4l1.6 -0.7M623.1 432.8l0.4 0.7M620.3 439.0l0.1 1.7M648.9 435.3l1.7 -0.9M608.7 435.2l-0.1 1.2M621.0 423.2l0.6 1.3M619.1 424.5l-0.9 1.1M640.7 424.7l1.3 0.9M642.4 428.2l-0.9 0.5M639.7 418.5l1.2 -0.2M631.9 432.1l-0.1 1.1M619.1 425.0l0.7 1.3M601.7 443.5l-0.0 0.8M639.6 418.3l-0.7 1.0M602.5 431.9l1.0 -1.1M619.7 430.0l0.9 2.0M597.6 432.0l0.5 -0.9M617.9 439.8l-1.4 1.1M602.8 441.5l-1.7 1.3M605.6 444.0l-0.8 1.3M602.5 431.7l-0.5 1.9M624.3 422.7l2.1 0.4M612.4 438.7l1.3 1.7M616.3 429.5l-0.0 1.0M616.2 432.1l-1.2 1.3M623.1 429.7l-1.2 1.4M616.3 443.9l1.8 0.4M651.0 420.1l0.4 1.8M640.7 428.7l1.2 0.0M615.7 437.1l-0.9 0.6M620.4 423.3l1.2 -0.3M627.1 423.1l-1.5 0.8M662.4 428.6l1.9 -0.3M644.3 432.1l-0.9 0.8M598.0 441.8l1.3 -1.5M661.7 425.8l0.8 1.3M633.6 419.8l1.3 1.5M656.3 422.5l-1.3 1.4M598.5 426.9l1.2 1.2M648.2 431.7l1.4 -0.8M620.4 426.9l1.3 0.1M630.3 428.5l1.3 -0.4M663.2 427.1l0.9 1.6M622.5 438.3l-0.2 2.1M604.2 427.4l1.3 0.5M614.8 433.8l0.4 0.9M659.0 423.8l-0.7 1.8M601.0 433.5l-0.6 0.8M612.5 441.2l0.8 1.0M660.9 428.6l0.7 1.5M600.5 428.9l-0.3 1.3M607.8 440.0l1.0 -0.9M624.4 432.6l-1.0 1.1M626.4 441.1l1.5 0.7M600.2 433.5l0.1 1.1M612.8 420.0l-0.6 1.4M630.1 435.3l-1.0 0.5M634.2 433.6l0.5 0.8M666.4 419.9l1.3 0.0M616.0 423.2l0.6 -1.1M600.8 444.4l1.7 -0.0M647.6 428.3l1.3 1.5M635.3 428.9l1.8 -1.3M633.2 439.1l-0.1 1.4M608.3 424.1l1.0 -1.8M614.5 434.4l0.7 1.0M642.9 424.8l1.0 -1.2M601.6 423.4l-0.0 2.0M630.9 427.2l0.5 1.4M598.7 423.9l1.1 0.0M605.2 436.3l2.0 0.2M633.9 425.4l0.8 -0.4M655.0 430.3l1.2 -1.6M609.4 441.6l-0.2 1.0M651.8 433.8l0.6 1.1M608.5 434.3l0.9 -1.3M623.4 437.3l-0.6 1.0M627.0 429.3l0.2 0.8M654.7 430.9l1.4 0.4M605.6 420.3l1.4 0.4M609.1 427.6l-1.0 0.7M638.3 420.6l0.8 1.7M660.1 425.1l-0.8 0.7M629.7 425.3l0.8 2.0M644.7 429.6l2.1 -0.4M651.4 428.4l-0.8 0.9M619.7 425.5l0.9 0.8M597.9 437.9l-0.9 0.8M615.3 440.4l-0.7 1.1M639.6 420.8l0.7 -0.8M622.6 431.7l1.4 0.7M604.7 439.7l-0.4 1.2M632.5 433.5l0.4 1.9M604.0 426.9l0.8 0.4M630.7 423.5l0.7 0.8M638.6 430.5l1.6 -0.3M601.6 447.5l-0.8 1.4M613.0 423.1l0.3 1.0M662.8 421.9l-1.5 0.8M637.9 429.9l0.8 -0.5M601.3 441.3l0.5 1.4M613.6 424.0l-1.0 0.5M611.3 445.9l0.8 0.4M613.3 435.9l-0.1 1.1M664.0 423.5l0.4 -1.0M601.7 427.1l1.0 -0.0M623.0 434.1l0.8 0.5M602.7 429.0l0.9 -0.7M612.7 446.0l1.1 0.4M635.7 420.4l-0.7 0.6M664.9 427.4l-1.2 1.5M613.6 419.6l0.7 1.1M622.9 430.0l0.8 -0.9M646.7 426.4l1.3 1.6M618.5 437.6l1.5 1.4M612.2 419.5l1.8 -1.1M654.2 426.7l0.7 -1.7M598.1 442.6l-0.8 0.9M604.4 427.0l1.7 0.8M606.1 423.1l0.0 1.3M638.2 433.9l0.8 -1.5M637.3 430.9l1.6 -1.2M615.1 437.6l1.1 -1.6M654.5 422.9l0.2 1.8M610.9 443.2l2.0 0.5M622.4 429.1l1.4 -1.4M624.0 433.9l0.8 -1.6M602.2 432.8l-1.1 1.3M625.7 438.4l1.3 -0.6M628.6 421.3l1.3 1.3M658.1 423.6l0.8 -1.8M616.9 438.3l1.7 -1.4M617.8 439.7l0.5 0.7M609.5 442.8l-1.2 1.4M630.5 430.9l1.9 -0.0M642.7 431.1l-1.5 1.2M601.2 434.6l0.7 -1.3M612.2 423.3l1.1 1.7M601.9 424.5l1.9 -0.5M633.7 419.0l-1.1 1.4M620.0 438.7l1.4 1.6M638.9 435.3l0.3 1.0M602.0 423.3l0.5 1.2M613.6 442.0l-0.2 0.9M641.9 425.3l0.8 0.7M603.6 439.9l1.7 0.7M624.2 432.7l1.2 -1.7M622.7 436.8l1.3 -0.6M637.3 419.2l1.0 -0.7M623.1 426.3l1.2 0.6M668.4 420.3l-0.6 1.0M619.2 426.5l0.5 1.7M665.0 422.5l1.0 1.4M662.6 428.2l1.2 0.1M635.8 425.6l1.1 0.3M613.5 420.7l1.2 -1.3M631.5 427.8l1.2 0.9M606.5 423.5l0.1 1.8M612.8 439.4l0.7 1.2M620.3 424.6l1.4 -0.3M623.6 421.8l0.7 -0.7M637.7 437.4l1.1 1.7M652.8 419.7l0.7 0.8M652.7 419.9l0.8 0.8M659.6 426.6l1.2 0.0M656.4 423.8l2.0 0.4M659.4 426.9l-1.2 0.8M619.2 441.2l0.2 0.9M639.7 436.4l1.2 -1.2M599.4 434.3l0.6 -0.6M624.6 438.6l1.0 0.0M610.9 445.3l0.9 1.9M597.9 438.9l1.9 -0.7M596.8 432.5l0.1 2.1M601.8 426.5l-0.8 0.7M610.6 426.6l-0.3 1.1M615.4 442.8l1.4 -0.0M630.6 419.0l0.4 0.8M619.6 420.8l0.5 2.0M618.7 421.8l-0.7 0.9M610.7 423.5l1.0 1.0M651.9 421.3l0.7 0.7M597.7 435.5l-1.2 1.3M641.4 428.8l1.8 -1.1M604.5 435.3l1.8 0.1M599.4 437.0l-0.5 0.7M653.9 426.4l-0.4 2.1M644.0 434.6l-1.0 1.3M617.6 431.0l1.3 1.2M619.4 433.9l1.4 -0.3M643.6 421.3l1.0 -0.3M603.9 441.0l1.1 1.0M629.1 424.4l-0.2 0.8M671.6 425.4l-0.1 0.9M613.8 426.3l-0.8 0.7M616.9 428.8l1.1 0.5M654.4 427.5l0.7 1.1M619.1 441.5l0.5 1.1M609.3 438.9l0.1 1.3M608.1 424.8l1.3 -1.0M612.6 437.1l1.5 0.8M667.2 427.0l0.8 1.7M627.2 428.4l-0.8 0.6M621.4 420.5l-1.4 0.5M627.3 432.6l0.3 1.1M649.7 427.7l1.0 1.4M670.1 423.2l0.4 -0.8M652.2 425.2l1.7 1.3M655.3 424.4l1.6 0.8M622.5 438.6l0.9 -0.0M607.1 430.7l1.9 1.0M621.9 442.1l-0.4 1.9M657.4 432.5l0.5 1.2M609.3 444.7l-0.4 0.7M624.0 423.2l1.1 0.8M604.3 431.7l0.5 1.6M620.8 441.6l0.8 -0.4M631.0 436.8l2.0 -0.6M636.9 422.0l1.1 0.4M644.3 434.8l-1.3 0.6M613.6 432.8l0.7 1.5M631.1 430.2l0.6 -1.5M615.8 436.4l-0.1 1.0M647.5 421.6l-0.4 2.1" stroke="#c5c6bb" stroke-width="0.5" fill="none" opacity="0.85"/>
<path d="M603.8 430.0l0.6 2.2M621.2 433.6l1.7 1.1M619.0 431.6l0.8 0.5M608.7 419.6l-2.1 0.9M599.9 433.4l1.9 -0.5M650.1 425.8l1.2 0.1M610.2 424.7l-2.2 1.3M605.2 424.9l1.8 0.2M613.4 420.6l0.4 1.2M626.0 426.2l-1.6 1.1M613.2 427.4l1.9 1.3M665.9 423.0l1.5 1.2M605.0 429.3l0.4 0.8M638.0 417.1l0.3 1.7M603.9 420.3l-1.2 1.3M626.2 428.0l1.6 2.0M615.9 425.2l1.4 1.0M659.3 417.9l1.9 0.2M660.4 417.0l2.0 1.0M617.1 429.3l-0.9 1.8M617.1 423.7l1.6 1.0M623.2 427.8l1.0 0.1M647.6 421.2l0.8 0.4M638.3 423.6l-0.1 0.9M639.9 416.4l0.8 0.3M634.7 422.6l2.4 0.2M607.8 432.0l1.2 0.3M619.6 422.1l1.8 -0.7M623.6 432.7l-1.6 2.0M625.2 430.0l0.6 1.9M649.3 421.0l1.8 1.8M625.6 430.1l1.1 0.0M654.4 425.8l0.3 0.9M640.5 423.7l2.0 -0.0M621.5 420.2l-1.9 1.2M636.1 427.5l1.5 -0.3M623.1 429.4l1.9 1.0M630.0 427.3l0.8 -2.3M611.2 431.4l1.1 0.1M648.3 423.4l-0.1 1.3M660.9 425.8l-1.9 0.9M642.7 430.9l1.0 0.2M634.0 415.9l-0.1 1.3M625.9 416.7l-0.6 1.2M605.4 418.8l0.8 1.9M651.8 428.8l1.2 1.3M601.0 431.8l1.7 1.0M631.3 424.1l0.7 0.6M649.3 426.5l0.6 1.6M616.6 431.0l1.5 1.4M627.3 424.4l0.8 0.1M634.0 430.9l-0.9 0.4M623.9 416.1l0.4 2.0M631.8 427.5l0.9 -1.1M613.3 425.1l-0.7 1.0M647.1 420.3l0.7 0.5M619.9 422.7l1.2 0.4M626.6 432.2l0.4 0.7M658.5 420.7l1.2 -0.1M621.6 417.9l0.3 -0.8M612.2 432.3l2.0 0.3M623.6 428.3l-0.5 1.2M640.5 415.2l0.7 1.0M620.0 422.3l1.7 0.3M622.6 426.6l-1.1 1.6M605.9 421.8l-1.0 1.7M651.1 427.2l1.1 1.6M624.1 421.3l-1.1 0.4M619.7 425.3l0.6 0.7M660.0 419.1l-0.8 1.5M632.5 422.6l0.2 1.5M599.2 420.7l1.8 1.1M623.1 433.4l-0.8 0.9M621.1 426.4l-2.0 0.9M668.8 418.5l-0.5 1.5M604.6 426.6l2.4 0.3M619.8 434.0l0.7 -1.4M639.3 417.6l0.1 1.7M617.5 418.1l1.2 1.1M626.1 432.7l1.1 0.1M607.2 417.0l-0.1 1.8M647.3 415.7l1.1 2.3M609.5 431.5l0.9 0.3M668.4 417.0l0.9 -1.4M608.1 420.5l0.7 1.0M645.0 416.9l1.1 0.8M641.8 429.7l-1.3 1.7M610.6 422.0l-0.5 1.6M615.5 420.9l1.8 0.9M603.5 423.3l1.7 1.6M612.4 416.5l1.0 1.6M664.8 421.1l1.2 1.7M651.1 420.2l1.2 0.9M618.4 422.8l0.6 2.3M654.0 423.1l-1.0 0.8M612.5 426.7l1.7 0.7M641.2 418.1l0.8 2.3M620.4 423.5l2.4 -0.8M616.0 422.9l-1.2 0.5M607.7 431.0l-1.0 2.2M617.1 434.1l2.0 1.0M644.1 415.4l-1.9 1.5M606.8 423.4l0.8 0.5M605.2 418.5l-0.9 0.6M648.8 429.4l1.1 -1.1M617.9 426.2l0.9 0.2M619.5 415.7l-1.2 0.9M649.5 420.6l0.8 0.7M631.2 421.9l0.4 -1.1M639.4 425.0l-0.8 2.1M613.7 420.7l0.9 -1.1M634.0 422.5l-0.9 1.0M640.1 427.1l1.1 2.2M634.5 430.9l1.1 1.9M630.5 417.6l0.6 1.4M606.7 429.1l1.6 0.5M635.8 423.9l0.1 1.8M600.9 421.7l1.0 0.4M610.8 418.7l0.4 1.4M625.8 425.6l0.5 1.1M648.7 421.4l1.0 0.3M641.6 423.0l0.9 -0.1M618.8 430.8l-1.6 1.0M608.3 430.3l1.9 0.3M654.7 415.5l-1.2 0.9M633.3 424.0l1.4 -0.5M631.8 427.0l0.8 0.7M639.5 424.8l0.6 1.6M619.1 425.7l1.3 0.4M628.3 415.1l0.2 1.4M654.1 415.1l1.1 -0.9M634.1 427.6l0.9 0.6M638.0 419.1l0.5 1.7M635.7 430.9l-0.0 1.3M620.0 423.1l0.5 -0.7M647.3 426.8l1.0 -1.8M665.7 417.0l1.1 0.2M640.2 423.9l0.5 1.5M632.7 430.8l1.7 1.0M609.8 433.7l1.0 0.3M636.2 415.5l-0.3 0.8M622.6 430.8l0.2 1.5M648.0 428.2l-0.5 0.9M652.6 427.9l1.2 1.5M668.9 419.7l1.6 1.2M618.4 421.8l-0.8 0.8M637.7 416.4l0.9 -0.0M643.9 419.2l2.3 0.9M613.0 422.2l1.1 1.7M657.7 415.6l1.3 1.7M659.8 421.7l1.0 2.1M643.1 416.6l0.9 -0.4M666.7 416.8l1.1 -1.7M604.4 433.7l-0.1 2.1M643.3 416.3l0.8 1.4M649.6 415.6l1.2 -1.3M601.7 423.4l1.5 -2.0M619.7 422.0l0.3 1.2M607.4 432.3l0.2 2.2M600.9 430.7l-0.9 2.1M601.0 427.5l1.9 1.0M625.2 432.0l1.9 -1.6M625.1 415.9l0.8 -0.2M603.3 418.9l1.9 1.4M604.8 434.5l-1.5 1.9M647.6 419.9l0.5 -1.7M610.7 416.4l2.1 -0.3M654.8 428.1l1.0 1.7M630.3 415.6l1.7 1.3M622.3 415.6l2.2 0.6M661.8 422.5l0.8 -0.3M649.3 421.3l1.3 2.0M599.6 431.3l1.9 1.4M603.8 421.0l1.0 0.8M666.8 419.8l0.6 0.9M621.1 421.6l2.3 0.7M661.5 417.1l1.1 0.3M647.7 417.9l1.6 -1.3M619.0 422.5l1.4 0.9M632.5 432.3l-0.6 2.2M603.3 434.0l1.2 2.3M612.9 420.9l0.9 -0.7M621.8 432.4l-0.5 2.3M615.7 427.4l1.9 0.5M616.3 425.4l2.2 -0.1M633.5 421.1l0.4 0.7M653.0 417.2l0.9 -1.7M604.3 423.9l-1.7 1.4M639.8 425.9l-1.9 0.6M613.6 419.1l-0.7 1.5M617.2 418.2l0.7 0.6M616.7 421.7l0.6 -0.8M636.3 419.8l1.8 -1.4M653.2 416.8l1.6 2.0M637.3 420.2l2.3 0.7M620.1 420.6l-1.3 0.6M643.4 430.4l-0.2 0.9M603.0 434.5l1.6 0.5M627.2 432.2l0.9 -2.4M633.3 420.6l2.0 -0.7M627.4 431.1l0.5 1.7M600.8 421.5l-1.1 1.8M639.8 422.3l0.5 1.1M660.5 422.0l0.4 1.2M625.7 423.0l1.9 0.8M599.8 418.5l1.2 1.0M645.4 414.5l0.9 -0.5M656.7 426.7l0.2 2.3M620.3 428.1l2.3 -0.6M664.4 422.9l-0.0 1.4M643.6 419.5l-1.4 1.7M604.3 422.8l2.2 -0.7M599.8 429.5l0.8 -0.3M609.6 424.1l0.9 -1.9M646.4 427.6l1.5 -1.0M666.1 424.6l1.3 -0.1M659.4 418.3l0.5 0.7M605.6 422.0l1.4 0.5M653.8 420.2l0.1 1.9M651.1 427.8l1.7 0.7M662.9 424.7l0.4 1.1M655.1 418.8l0.4 1.4M650.4 425.4l1.4 0.7M622.1 415.6l1.2 -2.2M648.4 425.9l1.2 0.9M648.9 423.2l1.5 2.0M663.0 423.8l0.9 -1.1M599.7 418.9l-0.7 1.3M640.8 422.1l2.4 0.8M617.9 428.9l0.1 2.1M659.2 416.7l-2.2 0.7M640.8 427.2l1.0 0.2M614.3 434.5l0.9 0.9M609.9 433.8l-1.3 0.8M622.2 421.8l1.0 0.1M664.0 419.7l1.3 -0.4M665.5 415.7l-0.2 1.4M661.7 425.9l1.8 0.9M629.7 418.6l-0.9 0.4M605.7 432.6l0.3 1.5M619.0 429.0l2.0 0.9M606.0 430.6l0.7 1.8M610.6 432.2l1.7 -1.9M632.0 421.0l1.0 -1.6M622.2 431.3l1.4 1.2M607.1 429.3l0.6 0.8M630.3 421.0l-0.4 0.8M647.3 415.8l1.2 -0.8M605.2 419.0l-1.9 1.4M620.8 421.2l1.4 -2.0M667.0 420.0l2.2 -1.3M620.7 432.9l-0.7 2.3M629.5 421.6l2.4 -0.7M640.3 422.3l-1.3 0.6M610.6 417.9l2.2 1.4M618.2 416.3l2.1 1.4M612.5 429.8l1.9 -1.1M623.1 426.0l1.0 0.9M613.1 426.0l-0.5 0.9M614.1 417.9l1.4 -1.1M634.2 418.1l2.0 0.0M616.0 418.9l-0.0 1.3M606.0 419.8l-0.6 0.6M640.8 426.9l1.4 -0.7M632.4 421.4l1.2 -1.5M665.8 418.8l2.5 0.7M634.1 431.9l0.8 0.8M621.2 431.8l-0.9 2.3M614.4 422.8l-0.5 2.0M632.6 432.1l2.1 1.5M627.7 431.6l1.7 0.7M606.9 433.9l-0.3 0.9M644.2 426.7l1.5 1.4M605.5 420.8l1.4 -1.3M631.4 421.5l-1.8 0.8M656.3 419.1l1.4 1.9M609.1 432.1l1.6 0.6M666.4 423.8l2.3 1.1M599.8 423.2l1.1 0.8M601.1 422.6l-0.2 0.8M638.8 426.2l0.6 -1.7M631.6 425.9l2.1 1.2M602.4 425.5l0.3 1.3M605.3 426.9l1.0 2.2M602.2 427.5l1.2 0.3M636.2 418.1l-2.2 1.1M609.6 426.1l-1.0 0.5M606.1 417.2l1.6 -1.2M661.0 417.0l0.8 -0.5M608.7 430.5l-0.8 0.3M646.9 416.7l-1.5 1.7M628.9 422.2l0.5 2.3M652.7 418.5l-1.3 1.3M615.5 421.4l1.1 -1.2M645.9 430.3l0.9 -1.3M606.0 427.7l0.8 -0.5M647.6 416.7l0.9 0.4M640.9 414.8l0.5 0.8M651.1 426.2l1.0 -1.8M629.1 425.6l1.4 0.9M631.9 417.9l1.2 -1.0M645.4 424.6l1.0 0.7M612.0 418.0l1.7 0.7M633.3 431.3l0.9 0.7M635.4 423.3l1.5 -0.1M649.2 428.7l0.8 -0.2M598.4 429.6l1.1 2.1M606.0 424.9l0.9 -0.5M658.1 426.9l1.1 2.1M624.9 420.5l0.8 0.8M627.2 432.9l1.7 0.7M604.1 425.0l-0.8 0.9M630.5 430.7l0.5 2.4M608.3 434.9l0.9 0.4M604.3 416.8l1.2 0.9M662.0 424.0l1.0 0.4M627.2 428.9l0.7 1.1M664.3 423.9l2.1 0.7M654.5 423.6l-0.3 0.9M624.4 416.9l1.6 0.7M643.7 424.5l0.9 -0.3M607.0 424.6l0.1 1.3M600.3 434.7l1.9 0.3M667.7 422.3l1.1 0.6M612.2 416.2l-1.7 1.6M647.4 423.5l1.1 -2.2M661.1 425.9l1.7 1.5M610.9 426.4l-0.3 1.5M621.7 415.4l-2.3 0.8M604.7 434.4l2.3 -0.9M600.9 422.9l1.1 -0.5M656.3 423.0l1.1 0.3M602.5 424.3l0.8 1.1M663.0 423.3l2.4 0.1M620.4 433.8l-2.1 1.0M647.7 426.9l0.9 1.1M654.4 417.2l1.2 -0.6M621.9 431.5l0.2 0.9M654.9 427.7l0.5 -1.4M626.4 425.3l-0.3 1.0M614.7 424.3l-1.5 0.8M640.9 417.9l0.0 2.0M621.1 422.9l-1.2 1.3M612.2 424.6l1.7 0.7M638.6 428.2l1.6 1.3M620.4 420.0l1.0 1.6M615.6 425.9l-1.4 2.0M668.3 419.9l1.9 1.6M612.0 416.4l-0.7 1.2M608.8 421.7l-0.6 2.5M600.7 432.1l1.1 2.0M648.3 421.4l-1.4 1.5M636.9 418.4l0.8 0.4M661.1 424.3l-0.9 0.5M640.5 429.9l-1.1 0.5M642.2 421.6l0.7 1.7M613.1 429.4l0.0 2.1M636.3 418.5l1.2 -0.6M608.3 433.9l1.0 -1.0M632.2 415.5l1.0 -1.3M606.7 419.4l2.3 1.0M607.6 420.7l-1.0 1.5M636.9 417.0l-0.2 0.8M615.8 429.3l0.6 -2.1M633.3 419.0l0.9 0.4M599.5 419.4l0.1 1.0M653.1 420.9l-0.2 1.4M602.7 434.0l1.8 1.3M638.0 417.1l1.7 -1.8M635.0 424.9l-0.9 1.3M612.5 425.6l0.7 0.6M638.9 429.4l0.8 0.5M642.0 418.3l-1.3 0.6M609.8 427.5l0.4 -1.2M614.4 430.1l1.7 1.4M662.8 415.1l1.0 0.7M630.2 430.3l0.6 1.9M632.5 427.4l-2.2 1.2M636.3 421.4l-1.5 2.1M617.9 424.2l0.3 1.6M633.1 430.2l-1.5 0.8M647.5 423.6l0.5 -0.9M625.1 429.5l-1.6 0.9M601.9 422.2l0.8 0.3M603.2 426.8l1.0 0.3M659.0 425.0l-0.5 2.3M647.4 420.6l-1.1 1.5M625.4 423.9l1.6 0.6M642.4 417.7l0.3 2.0M625.1 415.9l1.3 2.1M646.0 421.7l-1.2 1.2M607.1 420.5l1.0 0.0M617.7 428.5l1.8 1.8M628.5 426.5l0.9 -1.0M664.8 424.9l0.8 -2.4M665.2 416.4l1.2 -1.4M638.5 414.3l-1.1 0.3M635.6 421.1l0.5 -1.3M659.7 422.0l-2.2 0.9M618.6 423.6l0.8 -0.7M599.9 432.8l0.6 1.6M630.6 421.0l1.5 -0.2M624.2 424.3l-1.7 1.6M601.3 432.6l1.9 0.7M621.3 427.4l-0.3 0.8M623.1 421.3l1.1 2.0M619.1 425.6l0.6 1.2M625.7 433.2l1.5 -2.0M657.4 418.4l0.4 1.5M654.4 419.6l-1.4 0.7M636.0 416.7l0.9 -1.0M608.3 428.8l2.1 0.7M656.5 425.2l1.3 -2.2M605.7 417.2l2.1 0.7M639.5 419.9l-1.4 0.5M601.2 423.5l-0.9 1.6M612.8 429.0l-0.7 1.5M664.1 421.0l1.6 -1.5M601.2 431.3l-0.9 0.8M610.5 430.2l0.4 2.2" stroke="#c5c6bb" stroke-width="0.6" fill="none" opacity="0.9"/>
<path d="M617.5 360.0v3.4M583.5 392.5v3.3M599.0 351.3v2.4M592.9 379.3v3.2M584.6 404.9v3.3M622.5 357.8v1.3M588.7 405.8v2.6M614.5 354.8v2.4M589.5 411.9v2.0M631.3 351.0v2.8M620.3 350.1v3.0M622.5 365.3v1.9M639.5 334.0v2.7M592.9 409.6v3.3M590.6 403.3v3.3M642.4 330.1v2.5M640.2 338.3v2.2M583.8 376.1v3.3M584.2 403.7v2.9M607.0 378.4v2.4M585.4 404.4v1.3M595.0 362.3v1.9M638.1 345.2v4.3M628.2 346.3v2.5M621.2 340.3v4.2M590.7 386.0v2.8M639.0 333.7v1.5M619.8 348.4v1.9M625.5 340.2v1.0M599.6 360.1v2.7M637.8 335.6v2.8M626.6 350.1v3.3M586.1 410.6v4.3M615.0 355.2v1.7M601.1 388.0v1.3M634.9 345.5v2.6M589.1 384.9v2.3M624.1 348.4v1.7M592.1 363.9v4.2M609.8 352.0v3.2M644.4 329.1v1.5M583.8 371.1v3.1M582.6 389.5v2.9M624.6 347.1v3.2M596.0 391.9v2.6M617.0 356.0v2.9M634.4 334.6v4.2M612.1 349.6v3.6M593.0 380.6v1.2M634.9 344.4v2.7M619.4 350.6v4.2M588.1 365.8v1.3M629.5 345.3v1.7M602.6 360.6v2.8M597.8 351.5v4.2M595.3 369.6v3.2M589.2 378.6v1.3M591.0 367.0v2.0M637.2 337.4v2.7M607.1 361.8v3.6M604.9 372.6v1.4M628.3 354.5v4.3M586.2 381.7v3.1M591.9 378.4v2.0M596.4 389.9v4.1M589.8 412.5v2.2M637.5 342.9v1.2M601.7 385.7v3.1M601.0 362.4v1.0M647.1 342.9v3.3M633.6 334.8v1.2M594.9 361.3v3.4M604.9 348.9v3.6M604.8 359.0v1.3M600.9 383.4v1.9M645.3 338.1v2.8M595.8 365.1v3.8M589.6 370.6v4.3M614.1 365.1v2.2M621.5 356.4v3.4M633.5 353.3v1.2M588.1 390.5v2.4M622.1 352.0v1.5M604.1 377.8v4.4M641.3 338.9v1.6M602.1 387.4v2.5M583.6 398.0v3.7M613.9 359.4v4.4M583.6 391.5v2.0M583.4 398.2v4.1M626.9 351.0v3.9M599.3 372.8v2.1M607.2 369.3v1.5M606.8 349.6v3.9M613.1 345.1v1.4M624.5 339.3v3.3M590.6 365.2v3.3M625.6 353.4v3.1M583.0 385.5v3.2M584.2 411.1v2.6M643.1 343.0v3.3M603.2 360.8v2.7M643.2 331.5v3.6M629.7 347.7v4.0M641.8 340.4v1.3M617.7 352.6v2.3M619.5 355.6v1.5M627.4 350.5v4.4M594.2 399.5v2.2M590.1 365.1v1.7M631.2 356.9v3.1M636.4 348.8v1.8M588.7 383.7v1.2M644.7 331.8v4.0M627.0 353.0v2.0M591.0 407.3v4.0M589.8 379.7v2.2M615.3 361.6v3.3M587.9 394.2v3.2M593.6 403.4v1.5M595.0 355.1v3.7M604.9 384.8v3.9M607.8 362.7v4.4M601.6 351.2v1.2M609.9 375.1v1.1M593.0 365.5v3.5M596.9 373.8v3.6M614.2 352.4v2.4M589.4 376.7v4.4M596.6 362.1v1.2M609.3 358.9v3.8M583.6 377.3v1.2M608.6 361.5v2.0M594.4 388.5v1.5M622.5 361.6v4.2M589.5 373.9v3.2M583.4 368.4v1.5M644.6 334.9v2.2M591.8 392.5v3.4M616.1 342.5v1.6M604.1 371.4v1.9M613.2 359.8v3.4M642.0 336.6v3.9M594.1 404.9v2.2M605.2 351.2v3.8M624.7 339.0v2.1M600.5 376.3v2.1M609.4 346.1v3.5M595.6 388.4v2.6M609.7 377.2v4.4M622.0 344.4v2.1M590.9 381.8v4.2M588.9 372.5v3.9M591.5 398.9v2.4M612.6 348.3v1.0M645.3 344.5v4.4M615.6 348.8v2.4M587.4 374.7v2.1M596.2 398.8v2.5M604.9 360.4v2.8M603.1 379.7v3.6M621.2 339.1v2.8M641.8 342.7v1.3M606.9 374.2v2.4M641.5 346.6v1.9M629.8 354.0v3.5M595.0 408.7v4.4M609.3 376.8v1.0M619.7 363.1v3.7M649.1 327.7v2.2M585.0 399.2v1.2M621.7 357.6v2.8M639.1 351.2v2.8M648.3 333.2v2.5M593.3 393.0v3.4M639.7 331.8v1.3M625.7 355.4v2.2M644.0 347.4v2.5M622.4 343.7v3.8M606.4 360.2v2.5M591.8 355.4v3.5M604.7 357.1v2.5M582.0 397.5v2.1M616.8 354.4v1.6M601.4 359.8v2.1M604.5 367.1v3.4M649.9 343.1v1.2M632.3 355.9v1.3M596.0 384.4v2.2M622.5 351.3v3.5M617.9 362.9v4.5M624.9 353.7v3.1M627.8 335.4v2.0M641.3 334.3v2.6M638.9 343.9v2.9M595.3 364.6v2.3M582.3 392.8v1.1M582.2 405.9v1.3M584.5 398.5v2.2M585.8 368.2v1.9M608.2 379.8v2.0M608.0 358.1v3.2M602.7 379.8v4.4M589.1 409.6v2.2M616.3 353.1v2.0M586.5 359.2v4.3M642.6 329.5v3.4M641.6 349.6v1.5M598.9 387.8v3.2M584.0 411.5v1.6M624.9 353.2v2.7M635.9 337.3v2.0M610.3 354.4v3.3M626.7 351.2v3.5M593.2 407.7v3.7M622.2 366.0v3.3M586.5 370.6v2.4M641.6 333.4v4.0M600.2 352.5v1.5M596.7 387.8v1.9M589.5 393.7v3.5M590.6 361.9v2.9M588.1 371.9v4.1M582.0 402.2v3.6M626.6 345.4v1.2M621.2 344.5v2.9M629.6 358.3v3.9M583.5 368.4v3.6M590.4 369.9v4.5M619.2 341.1v2.8" stroke="#111" stroke-width="0.55" fill="none"/>
<path d="M597.4 393.1v3.4M596.3 383.1v3.3M589.4 379.1v1.5M598.2 387.7v3.0M598.1 395.8v3.6M594.0 356.0v1.7M600.0 367.4v4.8M590.9 397.7v5.4M591.9 355.9v1.5M591.1 355.4v5.7M600.3 351.6v4.3M598.0 355.2v1.6M586.8 397.3v2.0M585.3 394.4v3.6M593.7 356.6v2.0M590.5 382.1v3.4M597.9 390.8v3.0M595.0 363.8v5.6M590.5 388.0v4.8M597.9 358.3v1.7M588.3 382.8v2.9M587.9 396.6v2.1M586.3 379.0v2.0M600.2 387.5v5.6M588.3 382.1v3.7M600.4 375.3v4.4M603.1 377.5v1.9M597.5 366.5v4.4M602.4 371.6v2.8M593.3 366.3v4.1M586.9 398.1v5.5M587.4 371.4v3.4M583.6 382.0v2.2M600.9 360.1v2.6M586.4 394.5v3.8M588.8 385.2v4.1M601.4 357.5v4.0M587.6 360.5v5.7M599.2 364.4v5.1M586.1 360.8v2.7M598.0 367.6v5.5M596.2 359.2v5.6M591.0 403.8v1.5M602.5 365.6v5.4M590.7 378.4v5.6M597.4 355.4v3.3M591.9 366.2v5.7M585.1 374.8v3.6M595.2 402.3v4.8M594.9 399.7v4.9M588.7 356.5v5.6M598.0 363.0v4.0M591.4 369.7v2.1M598.1 366.3v1.8M590.6 370.2v5.4M603.1 380.2v2.7M600.2 379.6v3.2M592.8 388.2v1.5M603.2 378.3v4.2M599.8 390.3v1.6M597.1 371.4v3.8M599.2 355.8v2.1M586.7 411.4v4.1M594.3 397.3v5.7M603.7 364.7v6.0M603.9 376.8v1.5M597.5 362.6v1.7M593.1 406.2v1.9M593.8 402.3v3.9M598.0 360.4v3.7M595.8 355.4v3.2M592.9 355.0v2.2M583.3 391.7v4.8M591.0 388.5v6.0M588.1 383.1v4.0M587.1 361.8v5.0M593.2 408.0v3.0M590.2 394.4v5.0M595.1 411.0v4.6M592.2 371.4v5.8M593.7 392.7v1.5M593.7 380.9v5.4M587.5 387.3v4.5M599.0 393.2v3.7M586.4 363.3v4.1M600.0 363.3v4.4M586.4 409.7v4.6M602.6 367.0v1.7M597.0 404.7v5.3M602.6 360.1v3.3M603.1 373.8v2.3M597.2 396.4v5.0M589.3 379.9v1.9M591.1 372.1v3.1M599.9 354.4v3.4M589.8 370.7v4.6M594.8 404.8v5.0M587.3 364.2v4.3M596.0 362.5v6.0M588.0 389.6v2.8M595.3 384.7v5.8M588.2 400.9v3.2M591.1 402.6v5.9M593.9 377.0v3.3M584.1 376.2v1.6M592.4 375.3v1.6M594.3 373.2v4.2M590.2 385.5v5.8M603.7 366.9v2.7M585.6 409.5v3.8M587.1 403.9v5.5M588.3 385.9v3.2M602.0 365.9v1.7M586.5 383.9v4.9M593.3 404.1v3.1M593.3 379.5v5.2M594.6 378.6v3.2M603.1 377.8v1.6M598.1 372.1v4.5M589.4 364.9v3.8M597.6 386.4v3.4M600.6 371.8v2.2M600.9 380.6v1.9M597.0 354.0v5.1M591.4 385.5v4.9M596.3 409.2v3.1M586.6 397.4v5.8M595.7 359.3v4.0M587.0 378.2v5.5M587.3 410.4v4.4M595.3 360.7v3.4M602.1 369.2v2.7M597.5 374.4v2.4M588.5 366.1v3.2M594.3 410.0v3.9M594.4 382.6v2.2M593.9 369.3v1.5M592.7 379.5v2.1M602.1 378.0v3.0M595.8 356.4v3.5M594.1 359.2v2.1M585.4 403.2v4.4M601.1 387.3v4.1M591.9 370.2v3.8M585.7 409.0v3.6M587.0 403.0v5.6M586.1 404.7v5.5M593.8 370.6v1.6M596.5 383.5v5.5M596.5 404.3v4.6" stroke="#111" stroke-width="0.6" fill="none"/>
<path d="M633.6 410.4v3.3M649.6 385.4v2.6M641.1 397.5v2.6M637.3 395.8v4.6M625.5 376.1v2.6M645.3 389.1v3.4M634.0 358.8v4.9M630.9 371.6v5.8M649.3 388.6v2.4M608.5 400.7v3.2M616.6 380.7v3.0M644.2 355.6v4.8M634.0 397.9v5.2M640.6 395.6v3.5M620.5 386.9v2.1M628.1 396.3v1.8M605.5 390.2v4.9M643.4 405.1v5.5M607.7 381.8v2.3M632.0 362.2v5.6M639.2 398.9v5.7M611.1 407.7v4.1M641.6 393.7v4.0M598.3 407.3v4.4M616.9 410.2v2.9M597.4 413.7v5.4M605.0 390.6v2.0M641.8 373.3v2.5M629.1 402.9v4.3M615.9 406.8v5.6M640.0 387.6v5.1M614.5 389.1v5.9M603.0 398.5v4.2M598.9 399.2v4.8M607.7 413.4v4.7M638.0 379.4v2.2M611.0 400.1v5.5M612.9 402.1v2.1M613.6 398.7v4.7M605.2 411.9v4.5M639.6 412.9v5.3M628.2 366.7v3.2M642.1 413.1v5.8M629.5 366.9v3.7M613.3 380.9v5.6M641.5 381.7v2.4M649.5 345.8v3.5M610.8 382.8v4.2M648.1 366.7v3.5M645.9 396.5v3.3M632.6 398.6v5.5M632.4 375.0v3.4M636.0 391.1v3.6M606.3 406.8v3.9M631.9 364.4v3.6M635.0 389.9v3.9M631.8 368.1v5.9M649.4 402.6v4.6M611.0 409.1v4.4M631.9 387.0v6.0M649.0 363.3v4.4M626.0 410.9v4.9M649.4 399.2v4.3M605.7 389.5v5.5M625.5 397.4v3.2M616.6 389.3v2.2M634.7 392.8v3.0M646.3 400.8v4.7M620.6 384.1v4.3M649.7 389.3v2.7M641.8 386.2v3.5M628.9 378.0v3.3M624.8 404.0v5.5M646.5 391.2v1.6M643.4 372.7v3.6M616.4 398.0v5.2M645.7 365.5v6.0M616.3 382.8v4.1M599.6 394.3v4.4M635.1 367.2v5.3M644.2 391.7v2.6M644.0 379.5v2.8M621.5 403.4v2.5M609.9 396.5v3.0M647.0 380.9v2.2M610.0 396.4v4.7M623.5 373.2v1.8M623.3 375.1v2.2M635.2 361.7v2.7M613.1 383.3v3.8M636.2 373.2v3.4M644.8 365.6v4.9M637.2 403.0v4.7M643.2 364.6v4.6M604.8 414.0v5.8M618.8 385.5v2.6M629.1 389.0v1.8M599.9 406.9v1.6M619.8 394.5v2.6M612.0 398.5v3.3M643.2 358.2v5.1M610.4 410.6v4.4M605.3 406.1v2.6M607.9 404.1v5.7M598.5 408.4v3.6M644.8 352.4v5.1M646.4 402.9v5.0M645.3 385.1v5.3M613.6 381.0v3.2M630.3 391.4v2.9M622.1 397.4v2.7M611.8 393.6v5.6M606.2 391.5v2.4M604.5 413.7v5.8M639.2 399.9v5.5M629.3 372.9v2.7M645.3 394.2v3.1M625.3 369.7v4.3M640.1 370.8v2.9M622.7 373.1v2.5M606.7 390.4v4.0M599.8 407.7v1.7M627.6 387.6v4.5M648.4 382.0v1.6M614.0 376.4v5.2M628.9 399.8v2.8M642.7 370.9v5.2M601.2 402.0v4.6M631.3 370.1v3.6M637.3 389.3v1.7M613.0 404.7v4.6M648.7 371.1v2.0M623.8 375.1v3.8M646.1 397.6v3.0M629.5 391.6v2.9M624.3 398.7v2.2M630.9 375.9v1.5M609.9 412.3v4.1M628.2 377.8v4.1M613.7 407.4v4.7M617.8 401.9v2.3M618.9 402.9v2.6M631.0 373.8v4.3M627.7 390.5v6.0M627.1 393.8v1.5M626.2 381.2v4.5M648.8 403.6v4.9M630.4 401.8v5.1M638.0 413.7v4.6M647.9 394.6v4.5M600.3 411.3v4.0M633.7 392.6v6.0M628.5 403.0v5.3M632.9 361.3v2.9M614.5 383.8v5.0M604.5 392.8v5.6M604.9 413.8v3.2M640.3 381.4v1.5M625.5 366.3v2.2M636.5 369.6v2.4M622.6 368.8v4.9M639.7 400.6v3.0M648.0 381.5v4.4M634.0 404.9v4.7M649.5 374.0v2.6M610.0 402.7v1.9M642.9 371.6v4.9M647.1 360.9v2.0M616.7 408.2v3.5M638.5 367.3v2.9M647.5 374.6v5.4M639.1 385.3v3.2M622.2 404.7v4.4M626.3 372.0v5.1M607.6 411.3v1.8M632.2 378.0v5.3M600.3 399.4v4.8M625.0 397.2v4.5M627.1 367.2v5.3M609.6 382.7v1.5M645.5 355.0v5.1M606.3 384.4v4.2M636.5 405.6v1.8M613.1 385.9v5.2M633.4 410.8v3.6M639.2 370.2v6.0M603.3 406.9v2.3M626.8 407.0v4.9M646.0 399.9v4.8M648.6 394.7v5.1M597.4 409.3v5.6M620.7 368.8v2.4M633.9 387.3v4.2M648.3 359.1v5.5M630.9 363.0v5.9M649.0 348.5v1.8M634.8 388.0v5.2M645.5 406.4v4.4M640.5 400.3v4.0M647.8 349.1v5.5" stroke="#0d0d0d" stroke-width="0.7" fill="none"/>
<path d="M650.8 297.6h1.3M669.8 298.4h1.2M670.5 301.8h1.0M629.8 304.5h0.7M630.6 307.6h1.0M629.9 306.8h1.2M682.2 309.2h1.1M646.5 298.9h0.8M631.5 305.2h0.7M641.2 301.1h0.7M658.5 294.5h1.0M635.6 307.5h1.2M680.6 305.3h1.0M663.3 296.8h0.6M681.5 312.1h0.7M640.3 300.2h1.0M638.8 301.9h1.4M673.1 303.9h0.9M674.4 305.2h0.8M638.8 298.0h1.3M670.1 299.5h0.8M625.6 311.6h0.5M683.2 313.1h0.9M680.3 308.2h0.7M640.4 301.4h1.4M647.4 297.7h1.0M629.6 306.9h0.7M623.1 312.1h1.2M684.3 315.4h1.0M658.2 296.2h0.8M671.1 300.6h0.9M658.1 297.2h1.2M627.1 308.8h0.6M648.2 297.8h0.6M643.9 297.5h0.9M669.8 299.8h1.3M662.8 297.4h0.7M679.2 307.7h1.2M652.7 297.0h1.3M639.8 300.7h0.9M627.4 307.5h0.6M665.4 300.4h0.7M654.0 300.0h0.9M631.4 307.5h0.9M663.7 295.0h1.2M664.6 298.1h0.8M649.6 299.4h0.7M681.0 304.9h1.3M636.1 299.2h1.1M682.3 311.7h0.9M632.2 306.3h1.3M661.9 296.8h1.1M632.1 307.8h0.6M626.5 308.4h0.8M642.9 302.2h1.2M672.1 301.7h0.9M655.5 299.4h1.2M644.8 298.8h0.6M646.3 301.8h0.7M626.1 309.9h1.0M629.7 309.1h1.2M650.6 297.8h0.7M672.0 301.8h1.2M629.0 306.5h1.2M653.2 296.4h0.7M634.4 304.1h0.7M635.9 305.1h0.6M655.7 297.7h1.3M661.5 295.7h0.5M643.2 300.1h1.3M648.0 296.8h0.5M637.4 303.1h0.6M653.8 296.4h0.5M678.5 307.8h0.5M682.1 311.4h0.8M640.9 300.9h0.9M658.9 296.3h1.2M682.4 310.6h1.1M681.0 312.0h0.6M650.8 299.0h1.2M684.5 312.8h0.9M638.5 298.9h1.0M659.2 295.6h1.0M671.2 299.5h0.7M630.9 313.5h1.0M637.7 302.5h1.1M626.4 311.3h0.7M684.3 312.7h1.0M670.9 301.0h1.1M643.3 298.5h0.7M626.3 308.8h0.8M637.0 303.2h1.4M683.4 315.6h1.2M663.2 298.3h0.8M686.1 315.6h1.4M680.7 308.8h1.4M683.8 315.1h0.7M632.0 302.2h0.7M642.6 300.3h1.1M623.9 311.7h1.2M632.7 304.3h1.4M668.1 300.4h1.1M640.1 299.8h1.2M662.4 298.1h0.9M649.6 295.9h0.9M647.3 297.6h0.7M663.9 298.9h0.7M633.2 303.9h0.5M674.4 301.5h0.8M628.0 306.5h0.7" stroke="#1a1a1a" stroke-width="0.7" fill="none"/>
<path d="M689.6 338.4v4.6M685.3 355.1v2.7M693.0 335.1v5.3M692.4 349.1v2.1M691.9 354.4v5.2M687.9 328.9v3.2M683.3 335.2v5.9M680.0 336.2v2.5M680.8 357.6v1.7M682.8 337.2v2.4M687.7 330.9v3.9M685.0 331.7v1.7M690.7 327.9v2.5M693.3 328.6v3.9M689.3 346.9v6.8M684.9 357.9v2.9M684.8 348.1v6.2M692.0 359.1v1.6M683.8 359.8v3.5M681.7 335.6v6.1M687.0 340.4v2.5M682.3 335.7v4.2M687.6 353.2v4.5M690.2 332.9v6.1M681.4 339.1v4.8M679.7 355.6v6.0M689.5 338.5v2.5M681.1 334.9v5.0M681.8 346.8v5.7M692.1 353.1v3.3M689.6 360.2v5.1M679.3 345.6v4.1M691.7 343.5v6.6M691.7 343.6v4.4M680.9 349.9v2.3M686.6 343.8v5.3M689.3 359.3v6.4M691.4 332.1v3.9M689.3 341.7v1.5M687.4 330.8v1.6M680.7 335.0v2.7M684.5 353.1v4.8M684.4 340.2v4.0M683.5 358.0v3.7M690.0 346.4v3.9M687.5 354.3v4.1M688.6 337.0v5.2M681.7 336.9v6.6M689.1 349.4v3.1M687.2 337.4v2.7M688.3 331.7v1.7M688.6 339.5v3.4M688.1 357.7v5.1M680.0 353.7v4.5M692.9 330.7v3.4M679.3 337.6v4.0M685.1 339.1v5.6M692.9 347.2v4.0M690.8 348.5v4.9M682.0 346.5v5.3M680.0 347.6v4.8M687.1 351.4v6.6M691.3 332.6v5.5M689.5 345.4v4.0M684.1 340.2v3.7M681.2 355.3v4.7M679.6 345.5v5.0M692.6 341.7v5.7M682.0 339.4v3.7M687.6 336.2v2.4M678.4 332.9v6.3M691.6 337.8v4.0M684.4 346.7v2.8M687.8 331.2v3.8M687.9 352.0v4.1M689.9 333.2v6.9M693.2 350.6v3.7M681.9 348.5v6.0M682.4 351.3v6.5M690.7 344.9v5.9M692.0 343.0v2.8M683.4 339.9v6.8M680.9 333.0v3.6M684.8 353.7v2.9M689.0 328.7v3.4M683.1 332.0v4.4M683.6 337.1v3.0M690.4 340.3v5.3M689.2 355.6v6.1M688.9 344.9v3.4" stroke="#1a1a1a" stroke-width="0.6" fill="none"/>
<path d="M682.5 376.9v3.7M719.1 416.8v2.8M710.7 388.2v4.5M708.4 375.8v2.2M697.8 396.2v1.7M724.6 386.2v3.5M705.2 379.4v5.6M722.2 382.0v5.9M685.6 379.3v2.4M702.1 416.8v3.0M703.6 397.7v6.2M689.0 388.1v2.3M735.3 407.8v4.3M698.4 400.2v3.5M698.5 405.0v1.9M682.4 380.6v7.0M686.0 392.4v3.8M705.6 405.0v5.5M737.2 403.0v5.3M696.8 399.1v1.6M730.1 390.1v5.1M711.2 400.0v3.0M720.8 381.9v6.4M705.8 415.9v1.7M707.7 376.3v4.5M684.7 377.0v4.9M733.4 405.6v1.8M709.9 417.0v2.6M725.0 400.8v3.4M683.2 378.8v1.9M732.2 407.4v3.8M730.6 397.5v5.3M679.2 417.2v3.0M699.1 390.4v4.1M717.9 384.8v4.7M705.7 383.0v6.0M684.0 399.9v2.9M724.6 384.6v5.1M702.7 400.9v4.5M704.1 407.2v5.9M708.1 408.5v5.6M720.5 388.3v4.4M711.5 376.8v5.1M677.7 397.0v3.9M706.6 412.7v5.4M713.8 394.9v5.2M716.9 384.2v3.9M686.4 417.0v3.9M711.8 414.4v3.9M702.0 374.5v4.1M699.0 398.6v5.3M710.0 384.8v6.3M722.6 381.8v6.3M702.7 376.4v4.7M710.5 400.9v5.2M695.9 415.5v1.9M677.7 408.0v2.2M712.8 380.4v3.4M697.8 397.0v2.2M716.2 401.9v2.9M678.1 418.0v3.8M712.0 408.9v6.1M720.6 416.1v6.6M737.7 398.9v3.3M697.5 403.1v5.5M693.5 391.5v5.6M713.4 406.2v6.7M718.6 408.4v3.0M721.7 413.8v5.3M694.3 416.6v3.6M712.7 389.7v4.1M728.9 400.7v6.4M689.9 410.4v5.2M716.4 380.3v6.4M699.2 394.5v1.7M688.1 417.5v3.1M721.7 393.2v5.2M676.4 401.2v4.1M694.5 403.0v2.3M693.3 375.8v5.1M683.1 415.1v6.9M689.9 415.7v1.6M718.8 408.3v5.9M714.8 381.2v6.0M724.3 388.6v3.6M695.8 406.3v2.0M725.4 395.7v3.9M703.6 390.5v3.5M705.9 377.3v3.0M710.6 393.7v1.7M706.2 394.1v3.3M679.6 393.7v6.4M689.5 374.3v2.6M703.5 399.8v3.9M724.8 403.9v6.4M689.7 381.0v5.5M724.1 383.7v4.2M713.3 404.5v4.8M718.2 381.7v4.1M705.5 376.8v2.5M716.7 394.0v4.0M711.0 401.5v5.9M737.6 401.3v4.1M681.6 408.1v1.8M694.4 381.3v6.2M715.7 399.6v1.6M691.0 416.9v2.2M700.1 385.4v2.3M684.0 408.1v4.1M693.9 410.4v4.0M716.8 379.0v1.5M695.5 374.0v6.3M701.8 377.6v5.7M692.4 410.0v4.9M724.6 381.8v6.7M692.1 416.0v4.6M702.4 402.1v2.0M708.2 392.8v7.0M676.3 402.3v3.8M700.9 397.4v5.7M687.6 403.6v4.7M681.7 396.7v4.7M707.2 381.8v3.8M695.2 406.8v2.6M683.5 384.0v4.8M698.1 384.6v6.1M719.6 400.1v4.0M688.4 389.7v6.8M730.9 398.7v5.9M710.9 406.8v1.6M720.6 411.8v4.7M685.2 384.0v3.7M712.9 391.7v1.5M715.8 395.8v3.5M714.2 400.9v5.3M725.9 413.6v1.8M721.9 384.7v6.3M685.7 389.7v4.4M678.9 404.9v6.5M685.8 382.8v2.7M691.5 398.9v1.6M715.1 410.0v3.1M717.2 384.0v5.3M697.8 377.5v2.1M692.7 406.1v6.8M677.9 410.4v2.4M730.2 394.6v2.9M728.8 410.0v3.8M699.6 405.6v3.6M713.6 411.8v2.2M703.2 391.0v3.6M696.3 411.7v2.6M733.7 401.1v2.8M700.8 413.9v2.3M709.8 394.9v4.4M729.4 384.2v4.5M686.3 395.6v1.9M683.3 398.6v5.6M716.3 412.0v6.1M678.9 408.1v1.6M721.1 394.3v1.9M697.4 384.2v5.6M699.0 392.4v3.9M694.4 407.8v4.1M685.6 376.9v5.3M698.4 419.6v4.0M677.9 382.5v6.4M678.8 379.6v3.6M724.1 390.0v2.2M712.8 394.4v4.2M679.8 406.1v3.8M685.1 410.4v3.9M694.3 399.3v4.7M729.9 388.0v4.9M693.2 404.3v1.6M728.2 398.0v3.6M702.7 412.1v3.0M703.4 402.8v3.3M706.3 414.6v6.0M734.1 396.6v3.8M686.6 414.0v1.6M721.5 399.9v5.5M708.5 384.6v2.8M732.4 388.0v2.5M688.0 384.4v3.3M714.7 401.8v5.1M708.8 386.8v4.3M719.1 394.4v4.7M710.4 417.8v5.4M716.2 399.1v2.1" stroke="#111" stroke-width="0.6" fill="none"/>
<path d="M680.6 413.8l1.3 -0.5M691.4 409.1l0.9 -0.4M683.1 420.3l-0.5 2.5M718.6 416.4l-0.8 1.0M692.6 404.3l-0.0 1.6M703.5 404.7l-1.4 1.2M710.4 417.3l2.0 1.4M677.2 420.2l1.1 2.2M699.6 415.7l1.1 1.2M710.1 410.6l0.4 0.8M728.6 418.1l1.9 -0.5M687.2 417.5l1.1 0.9M712.9 413.7l0.8 2.5M718.3 410.0l1.2 0.1M718.3 409.1l-0.2 1.4M696.5 408.3l2.1 -0.4M682.7 405.6l-1.5 1.5M696.6 413.3l1.2 1.9M679.8 409.5l0.9 0.1M707.6 419.8l0.3 1.2M729.6 413.5l2.1 -0.6M728.4 414.0l0.9 0.5M724.1 415.1l2.3 -0.5M706.7 406.6l0.6 0.8M682.1 420.6l1.3 0.6M677.6 413.7l0.6 -0.8M731.2 406.7l1.7 -0.5M724.2 405.9l1.9 1.6M707.2 401.3l1.7 1.3M683.3 410.2l-1.5 1.9M679.0 420.6l-0.3 1.1M697.6 409.0l1.2 1.8M732.3 406.4l-1.2 1.3M679.4 412.9l0.9 0.6M709.1 406.4l-1.6 1.2M697.7 411.3l1.0 1.7M706.9 403.1l1.2 1.6M732.1 412.8l2.4 0.4M705.2 417.9l-0.1 2.2M694.0 403.8l1.3 -1.2M680.7 413.3l0.9 -0.8M697.7 420.3l1.6 0.0M688.7 418.9l0.4 2.0M727.9 414.0l0.6 -0.9M693.7 420.8l1.1 1.5M713.4 417.0l2.0 0.8M690.4 403.1l1.2 -0.4M686.7 414.6l2.2 0.2M688.7 417.5l0.9 -0.6M724.8 411.7l0.9 0.8M724.7 411.6l1.9 -1.2M712.6 411.8l2.2 -0.1M728.6 414.9l0.8 1.1M699.6 407.6l-1.1 1.3M685.5 417.9l1.0 -1.1M730.5 409.0l-0.4 0.8M679.1 406.9l1.9 -0.0M718.5 401.6l0.5 0.7M706.1 410.4l0.8 0.7M724.4 412.9l0.7 1.4M722.3 406.9l-1.4 1.7M698.5 409.8l1.1 0.5M721.8 404.8l0.9 0.1M712.2 419.6l2.1 1.3M729.8 406.4l0.9 1.6M715.5 419.7l1.0 -0.1M708.2 415.0l0.6 0.8M698.3 407.6l1.1 -0.3M688.8 415.4l-0.7 1.6M728.9 417.6l1.4 -0.8M720.9 410.3l-0.8 0.6M730.2 407.0l1.0 -1.1M697.3 420.8l2.1 -0.4M727.7 404.5l-0.7 1.2M719.2 405.9l1.7 -0.2M691.6 417.4l1.0 0.1M683.6 413.9l2.3 0.6M695.9 405.7l-0.6 0.9M689.8 414.1l1.5 1.0M717.3 401.8l0.9 0.9M715.9 411.7l1.5 1.0M702.7 414.5l1.8 -0.6M676.1 406.6l0.9 -0.0M691.1 412.8l1.0 -1.6M711.0 405.0l1.9 0.3M716.0 409.5l-0.7 2.0M704.9 403.1l1.0 0.3M706.3 411.2l1.3 2.0M715.3 401.3l1.6 1.9M700.8 405.1l-0.3 2.5M717.7 402.7l1.6 0.7M685.5 419.7l0.9 0.8M702.0 404.0l0.7 1.2M699.7 401.1l-0.8 2.3M680.3 404.5l-0.9 2.1M685.6 421.3l1.0 0.7M676.4 410.1l1.7 0.3M678.4 420.1l-1.7 1.8M720.8 410.1l1.2 -0.2M726.1 406.1l-0.0 1.3M719.4 412.5l-0.7 2.3M706.1 401.8l-1.2 1.2M705.4 412.3l0.6 0.7M700.3 406.1l0.7 0.5M700.9 400.2l0.9 0.5M718.5 408.5l1.7 0.7M720.3 405.0l1.7 0.1M708.0 417.4l1.3 -1.3M700.9 413.2l1.3 1.4M731.6 407.9l0.7 1.1M700.5 417.1l0.0 0.9M728.0 417.6l1.8 0.6M730.7 412.7l1.0 -0.0M707.1 402.0l0.4 1.3M727.5 410.1l2.1 -0.1M700.9 413.3l1.6 1.4M676.1 410.3l1.1 -0.1M688.8 402.8l1.5 0.8M716.3 416.3l0.1 1.1M685.9 409.7l1.2 1.1M691.6 413.3l2.1 1.3M721.1 403.6l0.7 0.6M710.4 404.9l-0.1 1.9M692.8 420.5l0.9 0.7M688.6 417.6l2.2 1.2M688.7 404.7l1.7 -0.5M719.4 403.5l0.8 0.7M689.2 406.2l0.6 2.1M698.7 406.5l1.5 -1.7M678.3 414.6l-1.0 0.9M722.9 410.0l1.8 0.2M704.0 413.6l1.6 -0.9M723.3 410.9l-0.8 2.0M712.1 414.9l2.3 0.5M732.4 407.9l1.3 1.6M680.9 411.8l-1.0 1.4M702.8 419.2l0.8 1.9M708.1 405.2l1.4 2.0M698.7 416.0l2.5 -0.4M698.5 401.7l1.9 -1.2M720.0 409.2l1.5 -1.3M707.2 418.6l1.0 1.0M702.8 415.6l-0.3 1.2M722.0 414.6l-1.2 2.2M679.4 413.9l1.4 1.5M725.3 403.4l1.7 1.4M708.6 403.5l-1.5 1.0M698.0 412.8l2.3 -0.9M707.5 419.4l-0.2 0.9M699.9 404.2l1.6 0.3M720.4 410.6l0.5 1.4M688.9 414.0l1.0 -1.3M690.2 403.8l1.6 -0.8M690.9 403.5l0.9 -0.9M681.8 411.4l1.1 -0.0M690.7 408.3l1.1 -1.7M709.7 402.0l1.0 1.3M693.8 412.6l1.4 0.1M715.6 410.0l1.9 1.6M723.9 407.2l0.7 -0.9M695.2 417.8l2.5 -0.5M678.0 405.5l1.2 0.2M720.2 412.5l1.8 0.6M716.0 401.4l1.6 -0.1M722.5 413.5l-0.0 0.9M731.6 407.0l0.8 2.3M727.9 405.2l-0.0 1.9M677.1 412.0l0.4 1.1M708.6 406.0l-0.7 0.8M728.9 411.0l0.6 0.7M715.1 403.4l1.4 0.5M682.7 408.0l-1.2 1.0M678.2 410.6l0.4 2.4M693.9 421.4l0.8 1.1M712.4 418.3l0.6 1.8M708.7 411.6l1.3 -0.4M721.5 415.7l1.3 -0.8M682.4 413.0l-0.1 1.8M701.1 410.7l1.3 -0.1M710.6 415.7l1.0 2.3M686.8 413.5l1.5 1.3M683.0 403.2l-0.4 1.2M713.7 401.3l1.4 0.7M714.3 410.6l0.5 1.9M681.9 408.8l1.4 2.0M693.0 417.5l1.7 1.9M696.6 418.9l1.2 -0.6M708.9 407.5l1.9 -1.1M704.0 407.4l0.9 0.0M697.7 402.1l-1.1 2.3M708.3 417.4l0.5 1.6M704.2 414.5l1.7 1.2M719.2 409.0l-0.7 1.2M691.0 412.5l0.2 1.0M690.5 405.5l0.3 1.7M728.0 415.4l2.0 -0.4M715.7 406.3l0.8 0.7M685.8 412.9l0.9 2.1M707.4 410.8l0.8 0.8M732.5 411.4l-0.1 1.8M719.2 411.6l0.9 0.7M714.9 411.1l1.6 0.9M706.8 416.7l-0.6 2.3M713.2 418.0l1.2 1.7M733.1 410.8l1.6 1.0M702.4 408.7l1.2 0.5M711.3 404.2l1.1 0.2M683.9 403.3l-0.6 2.1M695.9 413.0l1.4 -0.2M685.8 420.8l1.0 -0.0M733.6 405.9l-0.4 1.7M717.5 409.1l0.4 1.8M731.4 412.4l0.1 1.2M731.6 410.8l1.3 1.5M700.2 410.4l1.0 0.8M729.4 411.4l0.8 -1.1M728.7 405.9l-1.3 1.0M726.2 416.9l1.4 1.8M726.9 404.5l0.6 0.6M721.9 404.7l0.8 2.3M731.5 413.0l1.1 0.9M732.6 407.1l0.9 1.8M708.3 417.2l1.2 -0.0M711.1 400.8l0.9 0.8M697.4 409.8l0.5 0.7M687.5 415.6l0.8 1.9M683.9 407.2l1.6 0.7M703.5 417.0l0.7 -0.9M706.3 410.3l2.0 1.5M681.8 405.1l-0.2 1.2M731.1 405.4l-0.8 1.8M723.1 405.9l0.8 -0.8M705.8 412.7l0.9 0.9M730.1 416.1l1.8 0.4M677.3 420.6l1.0 -1.4M702.5 405.6l1.4 -0.1M711.1 413.2l-0.7 1.5M708.8 411.8l-1.3 1.5M703.5 401.4l1.2 -1.0M684.7 403.0l-0.3 1.8M702.8 400.7l2.2 -0.1M730.9 404.3l-0.6 0.7M692.2 413.4l-0.5 2.1M709.6 411.6l0.2 1.7M733.8 411.0l1.8 1.4M728.8 408.4l1.7 -0.1M729.2 404.9l1.7 -0.1M680.7 416.6l1.4 -1.6M707.4 415.0l-0.8 0.7M708.1 416.4l2.0 -0.2M678.0 418.2l1.5 1.3M721.2 404.2l2.2 0.9M709.1 416.3l1.8 1.4M709.0 420.6l1.7 -1.3M692.9 420.4l1.2 -0.1M702.0 401.1l-1.9 1.6M703.4 420.7l1.7 -1.3M706.7 403.2l1.7 0.9M712.2 416.6l-1.4 1.9M682.5 414.7l1.9 -0.5M698.4 402.1l-0.1 2.0M692.5 407.2l0.7 0.8M707.3 405.4l1.1 1.5M683.7 410.0l0.6 1.2M719.8 413.7l1.8 -1.4M680.8 413.6l2.0 -1.5M707.2 403.9l1.2 2.0M699.9 410.2l1.5 0.2M708.1 412.5l0.2 1.0M700.4 413.2l0.8 0.2M698.0 420.7l0.7 1.5M703.1 409.2l1.1 -0.5M707.2 409.2l0.4 1.6M694.4 403.8l1.6 -0.6M710.9 409.8l0.9 1.2M687.5 418.2l0.1 2.1M698.2 408.0l1.5 1.4M686.0 410.8l1.7 -1.1M679.3 406.4l-0.6 1.9M687.7 403.2l2.0 0.4M677.6 412.1l1.7 -0.1M710.1 412.6l1.4 -1.3M725.5 402.9l1.2 1.7M689.8 416.6l-0.1 1.8M694.8 412.2l1.4 2.0M704.9 402.4l1.6 0.7M718.5 413.8l1.9 -0.3M724.5 417.1l1.9 0.8M730.4 415.1l1.9 1.7M699.7 400.7l2.1 0.6M695.4 411.0l2.3 -1.0M706.9 413.6l1.1 1.5M693.6 412.2l-0.5 1.0M700.0 406.0l1.4 0.0M679.5 404.0l1.4 1.7M703.4 409.8l1.5 0.2M711.7 414.6l0.9 1.4M679.6 417.4l1.3 0.5M729.4 409.7l1.8 0.1M705.6 411.7l0.9 0.2" stroke="#111" stroke-width="0.8" fill="none"/>
<path d="M728 399l4-4 5-1 2 4-3 4-7 1z" fill="#1a1a1a"/>
<path d="M727.7 358.4v1.3M712.2 358.7v0.8M714.9 355.9v0.9M726.7 373.2v1.7M727.0 364.0v0.7M732.6 375.5v1.0M729.0 373.7v1.4M722.2 373.7v1.2M727.5 371.3v0.9M722.5 372.7v1.4M727.9 365.6v1.0M710.0 357.5v1.7M720.8 370.8v1.3M726.6 371.5v1.1M700.8 354.1v1.7M723.9 375.7v1.3M711.1 363.9v1.1M708.3 361.1v1.1M705.3 355.9v1.7M708.7 366.3v1.1M727.0 365.9v1.0M720.2 371.9v1.4M713.3 357.2v1.0M704.0 357.6v1.7M727.1 358.6v1.7M702.3 363.8v1.8M718.6 370.5v1.7M727.7 358.7v1.4M712.9 369.4v1.6M709.1 358.8v0.8M703.6 354.7v1.4M726.0 366.5v0.9M709.2 358.6v1.3M726.1 363.1v1.7M730.3 367.7v0.6M719.2 360.8v1.6M707.8 359.1v0.9M712.2 367.0v1.2M721.3 360.0v1.5M711.5 362.9v1.0" stroke="#222" stroke-width="0.7" fill="none"/>
<path d="M675.4 368.0v1.4M642.9 408.5v1.7M652.5 376.6v2.3M671.8 399.8v0.9M658.5 372.8v2.0M646.4 365.1v2.0M657.2 406.5v2.5M668.4 380.6v2.3M666.9 337.0v1.7M668.9 407.9v1.0M666.5 392.5v2.4M665.2 391.6v1.8M655.9 359.1v2.5M675.6 355.6v1.1M661.5 351.0v2.5M666.5 395.5v1.4M660.4 378.5v2.0M659.3 364.5v1.1M648.8 393.5v1.9M663.7 404.2v1.0M672.6 360.6v1.4M676.7 359.9v1.2M676.3 391.7v1.6M664.6 338.8v1.3M660.1 395.5v2.4M676.4 402.6v2.2M665.6 382.2v1.0M665.0 400.7v1.5M674.0 403.0v1.3M646.6 390.8v1.5M650.6 405.7v1.0M663.8 410.8v1.0M662.6 337.0v1.8M642.9 376.5v1.8M669.1 362.9v1.0M674.1 384.1v1.9M659.0 407.9v1.7M649.0 369.8v2.0M657.9 366.4v1.3M650.5 360.6v1.4M666.4 379.4v0.8M653.6 330.0v2.0M650.0 401.4v1.9M665.2 396.3v1.8M668.0 395.7v0.9M665.8 400.9v1.2M654.4 402.6v2.4M649.0 371.8v1.6M662.0 347.1v1.5M672.5 350.0v2.3M674.6 352.3v1.0M658.0 413.9v1.8M650.4 378.9v2.0M646.5 409.0v1.6M645.5 384.9v1.7M650.9 403.8v0.8M650.8 381.1v1.1M645.5 346.0v1.5M656.3 370.2v0.9M669.2 331.1v1.9M663.6 349.3v1.2M675.1 391.2v1.3M644.1 394.5v1.0M646.8 388.4v1.8M666.6 338.0v1.4M653.7 357.0v1.0M649.1 381.8v1.2M666.7 357.6v0.8M665.6 399.7v1.7M669.4 376.5v1.1" stroke="#c5c6bb" stroke-width="0.45" fill="none" opacity="0.8"/>
<path d="M5.6 36l-1.3 1.2 1.3 1.2zM8 36l-1.3 1.2 1.3 1.2z" fill="#333"/>
<path d="M179 36l1.3 1.2-1.3 1.2zM181.4 36l1.3 1.2-1.3 1.2z" fill="#333"/>
<path d="M166.2 45.4h4.6M166.2 46.8h4.6M166.2 48.2h4.6" stroke="#8a8a8a" stroke-width="0.7"/>
<path d="M34.3 65.80000000000001c1.4 1.1 2.2 2.2 2.2 3.3a2.2 2.2 0 0 1-4.4 0c0-1.1 .8-2.2 2.2-3.3z" fill="#fff" stroke="#9a9a9a" stroke-width="0.55"/>
<path d="M58.3 78.80000000000001c1.4 1.1 2.2 2.2 2.2 3.3a2.2 2.2 0 0 1-4.4 0c0-1.1 .8-2.2 2.2-3.3z" fill="#fff" stroke="#9a9a9a" stroke-width="0.55"/>
<path d="M34.3 91.7c1.4 1.1 2.2 2.2 2.2 3.3a2.2 2.2 0 0 1-4.4 0c0-1.1 .8-2.2 2.2-3.3z" fill="#fff" stroke="#9a9a9a" stroke-width="0.55"/>
<circle cx="162.3" cy="182" r="2.6" fill="none" stroke="#fff" stroke-width="0.9"/>
<circle cx="53.4" cy="241.6" r="1.8" fill="none" stroke="#fff" stroke-width="0.7"/>
<path d="M158.2 353.2h5v4.6h-3.2l-1.8-1.8z" fill="#fff" stroke="#333" stroke-width="0.8"/><path d="M158.2 356h1.8v1.8" stroke="#333" stroke-width="0.6" fill="none"/>
<path d="M166.2 375h4.6M166.2 376.4h4.6M166.2 377.8h4.6" stroke="#8a8a8a" stroke-width="0.7"/>
<path d="M51.3 391.8a2.2 2.2 0 1 0 2.2-2.3h-2.2m1.3-1.3l-1.4 1.3 1.4 1.3" stroke="#777" stroke-width="0.6" fill="none"/>
<rect x="100.6" y="393.2" width="7.4" height="7.4" fill="#fff" stroke="#222" stroke-width="0.8"/><path d="M102 399.2l4.8-4.8" stroke="#222" stroke-width="1.1"/><path d="M100.6 393.2l2-1.2h7l-1.6 1.2" fill="#fff" stroke="#222" stroke-width="0.5"/>
<defs><radialGradient id="soft"><stop offset="0" stop-color="#000"/><stop offset="0.3" stop-color="#222"/><stop offset="0.65" stop-color="#666" stop-opacity="0.55"/><stop offset="1" stop-color="#999" stop-opacity="0"/></radialGradient>
<radialGradient id="soft2"><stop offset="0" stop-color="#000"/><stop offset="0.4" stop-color="#1a1a1a"/><stop offset="0.7" stop-color="#555" stop-opacity="0.6"/><stop offset="1" stop-color="#888" stop-opacity="0"/></radialGradient></defs>
<path d="M8.6 416.6h5.2M9.399999999999999 415.6h3.4l.4-2.2-.9-1.8h-2l-.5 1.8z" stroke="#222" stroke-width="0.7" fill="#222"/><path d="M12.6 413l1.6-1.3" stroke="#222" stroke-width="0.6"/>
<path d="M24.599999999999998 416.6h5.2M25.4 415.6h3.4l.4-2.2-.9-1.8h-2l-.5 1.8z" stroke="#222" stroke-width="0.7" fill="#222"/><path d="M28.599999999999998 413l1.6-1.3" stroke="#222" stroke-width="0.6"/>
<path d="M56.6 416.6h5.2M57.400000000000006 415.6h3.4l.4-2.2-.9-1.8h-2l-.5 1.8z" stroke="#222" stroke-width="0.7" fill="#222"/><path d="M60.6 413l1.6-1.3" stroke="#222" stroke-width="0.6"/>
<circle cx="43.2" cy="417" r="6.4" fill="url(#soft)"/>
<circle cx="75" cy="417.4" r="6.6" fill="url(#soft2)"/><path d="M79 412.6l1.6-1.4" stroke="#111" stroke-width="0.9"/>
<circle cx="91" cy="417.2" r="7.1" fill="#050505"/><circle cx="107.3" cy="417.2" r="7.1" fill="#050505"/>
<path d="M6.6 433.2l1.6 1.6 1.6-1.6" stroke="#555" stroke-width="0.7" fill="none"/>
<rect x="12.3" y="431.90000000000003" width="7" height="5" rx="0.6" fill="none" stroke="#555" stroke-width="0.7"/>
<path d="M12.3 434.1h7" stroke="#555" stroke-width="0.7"/>
<defs><filter id="bl" x="-20%" y="-60%" width="140%" height="220%"><feGaussianBlur stdDeviation="0.95"/></filter><filter id="bl2" x="-40%" y="-40%" width="180%" height="180%"><feGaussianBlur stdDeviation="1.3"/></filter></defs>
<circle cx="19.3" cy="447.5" r="5.6" fill="url(#soft)"/>
<path d="M37 447.5C42 445.2 49 445.1 57 446.9S70 450.3 77 449.5S84.5 448.1 87.6 447.7" stroke="#000" stroke-width="6.2" stroke-linecap="round" fill="none" filter="url(#bl)"/>
<circle cx="19.3" cy="470.49999999999994" r="5.4" fill="#050505"/>
<path d="M37 470.3C42 468.0 49 467.9 57 469.7S70 473.1 77 472.3S85.5 470.9 88.8 470.5" stroke="#050505" stroke-width="7.6" stroke-linecap="round" fill="none"/>
<circle cx="19.3" cy="492.4" r="5.6" fill="url(#soft)"/>
<path d="M37 492.4C42 490.1 49 490.0 57 491.8S70 495.2 77 494.4S84.5 493.0 87.6 492.6" stroke="#000" stroke-width="6.2" stroke-linecap="round" fill="none" filter="url(#bl)"/>
<circle cx="19.3" cy="516.6" r="5.4" fill="#050505"/>
<path d="M37 516.4C42 514.1 49 514.0 57 515.8S70 519.2 77 518.4S85.5 517.0 88.8 516.6" stroke="#050505" stroke-width="7.6" stroke-linecap="round" fill="none"/>
<circle cx="19.3" cy="538.8000000000001" r="5.6" fill="url(#soft)"/>
<path d="M37 538.8C42 536.5 49 536.4 57 538.2S70 541.6 77 540.8S84.5 539.4 87.6 539.0" stroke="#000" stroke-width="6.2" stroke-linecap="round" fill="none" filter="url(#bl)"/>
<circle cx="19.3" cy="562.8000000000001" r="5.4" fill="#050505"/>
<path d="M37 562.6C42 560.3 49 560.2 57 562.0S70 565.4 77 564.6S85.5 563.2 88.8 562.8" stroke="#050505" stroke-width="7.6" stroke-linecap="round" fill="none"/>
<circle cx="19.3" cy="584.8000000000001" r="5.6" fill="url(#soft)"/>
<path d="M37 584.8C42 582.5 49 582.4 57 584.2S70 587.6 77 586.8S84.5 585.4 87.6 585.0" stroke="#000" stroke-width="6.2" stroke-linecap="round" fill="none" filter="url(#bl)"/>
<circle cx="19.3" cy="609.0000000000001" r="5.4" fill="#050505"/>
<path d="M37 608.8C42 606.5 49 606.4 57 608.2S70 611.6 77 610.8S85.5 609.4 88.8 609.0" stroke="#050505" stroke-width="7.6" stroke-linecap="round" fill="none"/>
<path d="M7.2 630.5999999999999l1.7 1.7-1.7 1.7" stroke="#555" stroke-width="0.7" fill="none"/>
<rect x="12.3" y="630.1" width="7" height="5" rx="0.6" fill="none" stroke="#555" stroke-width="0.7"/>
<path d="M12.3 630.1v-.9h2.6l.6.9" stroke="#555" stroke-width="0.7" fill="none"/>
<path d="M7.2 645.0999999999999l1.7 1.7-1.7 1.7" stroke="#555" stroke-width="0.7" fill="none"/>
<rect x="12.3" y="644.6" width="7" height="5" rx="0.6" fill="none" stroke="#555" stroke-width="0.7"/>
<path d="M12.3 644.6v-.9h2.6l.6.9" stroke="#555" stroke-width="0.7" fill="none"/>
<path d="M7.2 659.5999999999999l1.7 1.7-1.7 1.7" stroke="#555" stroke-width="0.7" fill="none"/>
<rect x="12.3" y="659.1" width="7" height="5" rx="0.6" fill="none" stroke="#555" stroke-width="0.7"/>
<path d="M12.3 659.1v-.9h2.6l.6.9" stroke="#555" stroke-width="0.7" fill="none"/>
<path d="M6.6 674.9l1.6 1.6 1.6-1.6" stroke="#555" stroke-width="0.7" fill="none"/>
<rect x="12.3" y="673.6" width="7" height="5" rx="0.6" fill="none" stroke="#555" stroke-width="0.7"/>
<path d="M12.3 675.8h7" stroke="#555" stroke-width="0.7"/>
<path d="M168.8 431.6l1.5-1.5 1.5 1.5M168.8 678l1.5 1.5 1.5-1.5" stroke="#aaa" stroke-width="0.6" fill="none"/>
<path d="M27 690.4c1.4 1.1 2.2 2.2 2.2 3.3a2.2 2.2 0 0 1-4.4 0c0-1.1 .8-2.2 2.2-3.3z" fill="#fff" stroke="#9a9a9a" stroke-width="0.55"/>
<path d="M109.5 691q2.4-2.6 4.8 0q-2.4 2.6-4.8 0z" fill="none" stroke="#8d8d8d" stroke-width="0.6"/><circle cx="111.9" cy="691" r="0.8" fill="#8d8d8d"/><path d="M114.6 692.8l2.6-3.8" stroke="#8d8d8d" stroke-width="0.7"/>
<rect x="124.3" y="688.9" width="7" height="5" rx="0.6" fill="none" stroke="#8d8d8d" stroke-width="0.7"/>
<path d="M124.3 688.9v-.9h2.6l.6.9" stroke="#8d8d8d" stroke-width="0.7" fill="none"/>
<path d="M140 689h4.6v4.6h-2.8l-1.8-1.8z" fill="none" stroke="#8d8d8d" stroke-width="0.7"/>
<path d="M154.2 689.2h5.2M155 689.2l.4 4.8h3.2l.4-4.8M156 688.4h1.6" stroke="#8d8d8d" stroke-width="0.6" fill="none"/>
<path d="M181 43.6h8" stroke="#cfcfcf" stroke-width="0.9"/>
<path d="M180.8 54.699999999999996h7.0M184.3 51.199999999999996v7.0" stroke="#141414" stroke-width="0.9" fill="none"/>
<path d="M180.20000000000002 54.699999999999996l1.5 -1.5v3.0zM188.4 54.699999999999996l-1.5 -1.5v3.0zM184.3 50.599999999999994l-1.5 1.5h3.0zM184.3 58.8l-1.5 -1.5h3.0z" fill="#141414"/>
<path d="M190.3 59.5h-1.5l1.5-1.5z" fill="#222"/>
<rect x="180.70000000000002" y="64.27000000000001" width="8" height="7" fill="none" stroke="#141414" stroke-width="0.9" stroke-dasharray="1.6 1"/>
<path d="M190.3 72.47h-1.5l1.5-1.5z" fill="#222"/>
<path d="M181.1 77.24000000000001l3.4 2.2 4.2-2.6-1.2 5-3.4 1.6 1 1.6-4.4-.6 2.6-2.2z" fill="none" stroke="#141414" stroke-width="0.8" stroke-linejoin="round"/>
<path d="M190.3 85.44h-1.5l1.5-1.5z" fill="#222"/>
<ellipse cx="182.70000000000002" cy="94.41" rx="2.8" ry="2.6" fill="none" stroke="#141414" stroke-width="0.7" stroke-dasharray="1.2 0.8"/><path d="M184.3 95.21000000000001l4.6-5.4" stroke="#141414" stroke-width="1.5" stroke-linecap="round"/>
<path d="M190.3 98.41h-1.5l1.5-1.5z" fill="#222"/>
<path d="M182.3 102.18v7h7.4M180.1 104.38h7v7.4" fill="none" stroke="#141414" stroke-width="1.1"/>
<path d="M190.3 111.38h-1.5l1.5-1.5z" fill="#222"/>
<rect x="180.9" y="116.35" width="8" height="6.8" fill="none" stroke="#141414" stroke-width="0.9"/><path d="M180.9 116.35l8 6.8M188.9 116.35l-8 6.8" stroke="#141414" stroke-width="0.7"/>
<path d="M180.9 136.72l1-2.6 4-4 1.6 1.6-4 4z" fill="none" stroke="#141414" stroke-width="0.7"/><path d="M185.5 129.52l2.6 2.6M186.5 131.12l2-2.4" stroke="#141414" stroke-width="1.6" stroke-linecap="round"/>
<path d="M190.3 137.32h-1.5l1.5-1.5z" fill="#222"/>
<rect x="179.9" y="143.69" width="10" height="4.4" rx="1.4" transform="rotate(-45 184.9 145.69)" fill="none" stroke="#141414" stroke-width="0.8"/><rect x="183.4" y="144.09" width="3" height="3.4" transform="rotate(-45 184.9 145.69)" fill="#888"/>
<path d="M190.3 150.29h-1.5l1.5-1.5z" fill="#222"/>
<path d="M188.70000000000002 154.26l-5 5.4" stroke="#141414" stroke-width="1.3" stroke-linecap="round"/><path d="M183.3 159.66q2 .6 1.2 2.2t-4 1.6q1.4-1 1.4-2.4t1.4-1.4z" fill="#141414"/>
<path d="M190.3 163.26h-1.5l1.5-1.5z" fill="#222"/>
<path d="M180.9 175.43h8M181.3 173.63h7.2v-1.4h-2.4l.6-3.2a1.8 1.8 0 1 0-3.6 0l.6 3.2h-2.4z" fill="#141414" stroke="#141414" stroke-width="0.7"/>
<path d="M190.3 176.23h-1.5l1.5-1.5z" fill="#222"/>
<path d="M188.70000000000002 180.60000000000002l-4.6 5" stroke="#141414" stroke-width="1.2" stroke-linecap="round"/><path d="M183.5 185.8q1.8 .6 1 2t-3.6 1.4q1.2-.8 1.2-2.2t1.4-1.2z" fill="#141414"/><path d="M180.5 183.60000000000002a2.6 2.6 0 0 1 4-2.4M180.1 181.20000000000002v2.6h2.4" stroke="#141414" stroke-width="0.7" fill="none"/>
<path d="M190.3 189.20000000000002h-1.5l1.5-1.5z" fill="#222"/>
<path d="M181.3 198.97000000000003l4.2-4.6 3.4 2.6-4.2 4.6z" fill="none" stroke="#141414" stroke-width="0.8"/><path d="M181.3 198.97000000000003l2-2.2 3.4 2.6-2 2.2z" fill="#141414"/><path d="M180.5 201.77h7" stroke="#141414" stroke-width="0.7"/>
<path d="M190.3 202.17000000000002h-1.5l1.5-1.5z" fill="#222"/>
<defs><linearGradient id="tg"><stop offset="0" stop-color="#111"/><stop offset="1" stop-color="#eee"/></linearGradient></defs><rect x="180.9" y="207.14000000000001" width="8" height="6.8" fill="url(#tg)" stroke="#141414" stroke-width="0.7"/>
<path d="M190.3 215.14000000000001h-1.5l1.5-1.5z" fill="#222"/>
<path d="M183.3 227.51000000000002q-2.2-1.2-1.6-3.4l1-3.2q.4-1 1.2-.6t.4 1.4l-.4 1.8 2.4-3.4q.8-.8 1.4-.2t0 1.4l-1 2.2q1.2-.2 1.4 1t-1.4 2.6z" fill="none" stroke="#444" stroke-width="0.7"/>
<path d="M190.3 228.11h-1.5l1.5-1.5z" fill="#222"/>
<circle cx="185.9" cy="235.28000000000003" r="2.7" fill="#141414"/><path d="M183.9 237.28000000000003l-3.2 3.4" stroke="#141414" stroke-width="1.4" stroke-linecap="round"/>
<path d="M190.3 241.08h-1.5l1.5-1.5z" fill="#222"/>
<path d="M180.9 253.45000000000002l1-4.4 3.6-3 3.8 3.6-3 3.4z" fill="none" stroke="#141414" stroke-width="0.8" stroke-linejoin="round"/><circle cx="184.70000000000002" cy="249.85000000000002" r="0.9" fill="#141414"/><path d="M180.9 253.45000000000002l3.2-3.2" stroke="#141414" stroke-width="0.6"/><path d="M185.3 245.85000000000002l3.6 3.6" stroke="#141414" stroke-width="1.3"/>
<path d="M190.3 254.05h-1.5l1.5-1.5z" fill="#222"/>
<path d="M190.3 267.02000000000004h-1.5l1.5-1.5z" fill="#222"/>
<path d="M182.3 270.99v8.2l2-1.9 1.5 3.1 1.4-.7-1.5-3 2.7-.2z" fill="#141414"/>
<path d="M190.3 279.99h-1.5l1.5-1.5z" fill="#222"/>
<ellipse cx="184.70000000000002" cy="288.36" rx="4.2" ry="3.3" fill="none" stroke="#141414" stroke-width="0.9"/>
<path d="M190.3 292.96000000000004h-1.5l1.5-1.5z" fill="#222"/>
<path d="M183.1 305.53q-2.4-2-2.6-4.2q.8-.8 1.6.4v-3.2q.7-.9 1.3 0v-1q.7-.9 1.4 0v.6q.7-.8 1.4 0v1q.7-.7 1.3.1v3.6q0 1.6-1 2.7z" fill="none" stroke="#141414" stroke-width="0.7" stroke-linejoin="round"/><path d="M181.5 297.72999999999996a4.2 4.2 0 0 1 6-0.8" stroke="#141414" stroke-width="0.6" fill="none"/>
<path d="M190.3 305.93h-1.5l1.5-1.5z" fill="#222"/>
<circle cx="184.1" cy="313.5" r="3" fill="none" stroke="#141414" stroke-width="0.9"/><path d="M186.3 315.7l2.8 2.8" stroke="#141414" stroke-width="1.3" stroke-linecap="round"/>
<circle cx="182.1" cy="328" r="0.9" fill="#141414"/>
<circle cx="184.9" cy="328" r="0.9" fill="#141414"/>
<circle cx="187.70000000000002" cy="328" r="0.9" fill="#141414"/>
<path d="M190.3 331.6h-1.5l1.5-1.5z" fill="#222"/>
<rect x="178.4" y="337" width="3.2" height="3.2" fill="#fff" stroke="#141414" stroke-width="0.6"/><rect x="180" y="338.6" width="3.2" height="3.2" fill="#141414"/>
<path d="M187.4 337.4h2.6v2.8M186.8 337.4l1.2-1.1M186.8 337.4l1.2 1.1M190 340.6l-1.1-1.2M190 340.6l1.1-1.2" stroke="#141414" stroke-width="0.6" fill="none"/>
<rect x="180.6" y="365.4" width="8.6" height="6.4" fill="none" stroke="#333" stroke-width="0.7"/><ellipse cx="184.9" cy="368.6" rx="2.2" ry="2" fill="none" stroke="#333" stroke-width="0.6" stroke-dasharray="0.9 0.6"/>
<rect x="182.6" y="377.6" width="6.6" height="4.6" fill="#f0f0f0" stroke="#333" stroke-width="0.7"/><rect x="180.6" y="379.6" width="6.6" height="4.6" fill="#f0f0f0" stroke="#333" stroke-width="0.7"/><path d="M190.3 386h-1.5l1.5-1.5z" fill="#222"/>
<path d="M1148.6 36l-1.3 1.2 1.3 1.2zM1151 36l-1.3 1.2 1.3 1.2z" fill="#333"/>
<path d="M1271.4 36l1.3 1.2-1.3 1.2zM1273.8 36l1.3 1.2-1.3 1.2z" fill="#333"/>
<path d="M1141.1 43.4h9" stroke="#cfcfcf" stroke-width="0.9"/>
<rect x="1142.1999999999998" y="48.6" width="2" height="1.8" fill="#141414"/><rect x="1142.1999999999998" y="51.2" width="2" height="1.8" fill="#141414"/><circle cx="1143.1999999999998" cy="55.4" r="1.2" fill="#141414"/><path d="M1146.1999999999998 49.6q3.4 1.2 1.6 4.6" stroke="#141414" stroke-width="1" fill="none"/><path d="M1146.1999999999998 55.4l2.6.4-.8-2.4z" fill="#141414"/>
<path d="M1141.1 63.6h9" stroke="#cfcfcf" stroke-width="0.9"/>
<path d="M1148.20 72.80L1149.80 72.80M1147.44 74.64L1148.57 75.77M1145.60 75.40L1145.60 77.00M1143.76 74.64L1142.63 75.77M1143.00 72.80L1141.40 72.80M1143.76 70.96L1142.63 69.83M1145.60 70.20L1145.60 68.60M1147.44 70.96L1148.57 69.83" stroke="#141414" stroke-width="1"/>
<circle cx="1145.6" cy="72.8" r="1.7" fill="none" stroke="#141414" stroke-width="1.1"/>
<path d="M1141.3999999999999 88.9v-1.2l1.0 -2.2l1.0 1.9l1.2 -3.4l1.2 3.2l1.1 -2.6l1.1 2.4l0.9 -1.8l0.9 1.6v2.1z" fill="#141414"/><path d="M1141.3999999999999 89.5h8.4" stroke="#141414" stroke-width="0.8"/>
<path d="M1141.1 98.6h9" stroke="#cfcfcf" stroke-width="0.9"/>
<path d="M1149.0 102.6v8.4" stroke="#141414" stroke-width="0.7"/>
<path d="M1141.1 119.2h9" stroke="#cfcfcf" stroke-width="0.9"/>
<path d="M1141.1 139.6h9" stroke="#cfcfcf" stroke-width="0.9"/>
<path d="M1145.6 143.8l3.6 1.8v4.4l-3.6 1.9-3.6-1.9v-4.4zM1142.0 145.6l3.6 1.8 3.6-1.8M1145.6 147.4v4.5" fill="none" stroke="#333" stroke-width="0.7" stroke-linejoin="round"/>
<path d="M1269.6 45.4h4.6M1269.6 46.8h4.6M1269.6 48.2h4.6" stroke="#8a8a8a" stroke-width="0.7"/>
<path d="M1186.60 74.00L1188.10 74.00M1185.90 75.70L1186.96 76.76M1184.20 76.40L1184.20 77.90M1182.50 75.70L1181.44 76.76M1181.80 74.00L1180.30 74.00M1182.50 72.30L1181.44 71.24M1184.20 71.60L1184.20 70.10M1185.90 72.30L1186.96 71.24" stroke="#141414" stroke-width="1"/>
<circle cx="1184.2" cy="74" r="1.8" fill="#fff" stroke="#141414" stroke-width="0.6"/><path d="M1184.2 72.2a1.8 1.8 0 0 1 0 3.6z" fill="#141414"/>
<path d="M1192.1 75.9v-1.2l1.0 -2.2l1.0 1.9l1.2 -3.4l1.2 3.2l1.1 -2.6l1.1 2.4l0.9 -1.8l0.9 1.6v2.1z" fill="#141414"/><path d="M1192.1 76.5h8.4" stroke="#141414" stroke-width="0.8"/>
<rect x="1204.2" y="70.7" width="8.4" height="6.6" fill="#e8e8e8" stroke="#141414" stroke-width="0.7"/>
<path d="M1204.2 74h8.4M1208.4 70.7v6.6" stroke="#999" stroke-width="0.5"/><path d="M1204.4 77q3-.4 4-3t4-3" stroke="#777" stroke-width="0.6" fill="none"/>
<rect x="1216.0" y="70.7" width="8.6" height="6.6" fill="#141414" stroke="#141414" stroke-width="0.7"/>
<path d="M1216.7 76.6l7.2-5.2v5.2z" fill="#fff"/><path d="M1217.3 72.4h2M1218.3 71.4v2M1221.5 75.6h2" stroke="#fff" stroke-width="0.5"/>
<path d="M1228.4 71h7.6l-3.8 6.4z" fill="none" stroke="#141414" stroke-width="0.9"/>
<rect x="1174.1000000000001" y="84.3" width="8.6" height="6.6" fill="none" stroke="#141414" stroke-width="0.7"/>
<rect x="1174.1000000000001" y="84.3" width="8.6" height="2" fill="#141414"/><rect x="1174.1000000000001" y="88.6" width="4" height="2.3" fill="#666"/><path d="M1174.1000000000001 88.19999999999999h8.6M1178.4 86.3v4.6" stroke="#141414" stroke-width="0.5"/>
<path d="M1187.2 85.19999999999999h6.4M1190.4 84.39999999999999v1.4" stroke="#141414" stroke-width="0.7"/><path d="M1185.8000000000002 88.8a1.7 1.7 0 0 0 3.4 0zM1191.6000000000001 88.8a1.7 1.7 0 0 0 3.4 0z" fill="#141414"/><path d="M1187.5 85.19999999999999l-1.5 3.6M1187.5 85.19999999999999l1.5 3.6M1193.3000000000002 85.19999999999999l-1.5 3.6M1193.3000000000002 85.19999999999999l1.5 3.6" stroke="#141414" stroke-width="0.45"/>
<rect x="1198.0" y="84.3" width="8.6" height="6.6" fill="none" stroke="#141414" stroke-width="0.7"/>
<rect x="1202.3" y="84.3" width="4.3" height="6.6" fill="#141414"/>
<rect x="1209.8999999999999" y="85.39999999999999" width="7.4" height="5" rx="0.8" fill="#141414"/><rect x="1211.7" y="84.3" width="2.6" height="1.4" fill="#141414"/><circle cx="1213.5" cy="87.89999999999999" r="1.5" fill="#fff"/><circle cx="1217.3" cy="89.8" r="1.7" fill="#f0f0f0" stroke="#141414" stroke-width="0.6"/>
<circle cx="1226.2" cy="86.3" r="2.3" fill="#141414"/><circle cx="1224.3" cy="89.1" r="2.3" fill="#333"/><circle cx="1228.1000000000001" cy="89.1" r="2.3" fill="#555"/><circle cx="1226.2" cy="88.1" r="0.9" fill="#fff"/>
<rect x="1234.1000000000001" y="84.19999999999999" width="8.6" height="6.8" fill="#141414" stroke="#141414" stroke-width="0.7"/>
<path d="M1234.1000000000001 86.5h8.6M1234.1000000000001 88.69999999999999h8.6M1237.0 84.19999999999999v6.8M1239.8000000000002 84.19999999999999v6.8" stroke="#f0f0f0" stroke-width="0.6"/>
<rect x="1179.9" y="97.3" width="8.6" height="6.6" fill="#141414" stroke="#141414" stroke-width="0.7"/>
<path d="M1180.6000000000001 103.19999999999999l7.2-5.2" stroke="#fff" stroke-width="0.6"/><rect x="1184.0" y="98.39999999999999" width="2.8" height="2.4" fill="#fff"/>
<rect x="1192.0" y="97.3" width="8.6" height="6.6" fill="#ddd" stroke="#141414" stroke-width="0.7"/>
<path d="M1192.0 103.89999999999999l8.6-6.6v2.6l-6 4z" fill="#141414"/><path d="M1192.0 100.19999999999999l3.8-2.9" stroke="#141414" stroke-width="0.8"/>
<rect x="1204.1000000000001" y="97.3" width="8.6" height="6.6" fill="#fff" stroke="#141414" stroke-width="0.7"/>
<path d="M1204.1000000000001 103.89999999999999v-3l8.6-3.6v3z" fill="#141414"/><path d="M1204.1000000000001 103.89999999999999h4.2l-4.2-2z" fill="#141414"/>
<rect x="1216.0" y="97.3" width="8.6" height="6.6" fill="#141414" stroke="#141414" stroke-width="0.7"/>
<path d="M1216.6 97.89999999999999l3.7 2.7-3.7 2.7zM1224.0 97.89999999999999l-3.7 2.7 3.7 2.7z" fill="#fff"/>
<defs><linearGradient id="gm"><stop offset="0" stop-color="#111"/><stop offset="1" stop-color="#f4f4f4"/></linearGradient></defs><rect x="1227.9" y="97.3" width="8.6" height="6.6" fill="url(#gm)" stroke="#141414" stroke-width="0.7"/>
<path d="M1269.6 216.8h4.6M1269.6 218.2h4.6M1269.6 219.6h4.6" stroke="#8a8a8a" stroke-width="0.7"/>
<circle cx="1163" cy="235.5" r="1.5" fill="none" stroke="#222" stroke-width="0.7"/><path d="M1164.1 236.7l1.4 1.5" stroke="#222" stroke-width="0.8"/>
<path d="M1194.6 235.2l1.6 1.6 1.6-1.6" stroke="#555" stroke-width="0.7" fill="none"/>
<rect x="1208.4" y="233.2" width="5.8" height="4.8" fill="none" stroke="#141414" stroke-width="0.7"/><path d="M1208.9 237.4l1.6-1.9 1.2 1.1 1-.9 1 1.7z" fill="#141414"/>
<circle cx="1224.2" cy="235.8" r="2.7" fill="none" stroke="#141414" stroke-width="0.7"/><path d="M1224.2 233.1a2.7 2.7 0 0 1 0 5.4z" fill="#141414"/>
<rect x="1245.4" y="233.4" width="4.8" height="4.8" fill="none" stroke="#141414" stroke-width="0.7"/><rect x="1244.6" y="232.6" width="1.6" height="1.6" fill="#141414"/><rect x="1249.4" y="232.6" width="1.6" height="1.6" fill="#141414"/><rect x="1244.6" y="237.4" width="1.6" height="1.6" fill="#141414"/><rect x="1249.4" y="237.4" width="1.6" height="1.6" fill="#141414"/>
<path d="M1257.8 233.2h3l1.6 1.6v3.6h-4.6z" fill="none" stroke="#141414" stroke-width="0.7"/><circle cx="1261.6" cy="237.4" r="1.5" fill="#f0f0f0" stroke="#141414" stroke-width="0.6"/>
<circle cx="1273.6" cy="232.2" r="1.5" fill="#141414"/>
<path d="M1210.6 249.4l1.6 1.6 1.6-1.6" stroke="#555" stroke-width="0.7" fill="none"/>
<path d="M1270.3 249.5l1.5 1.5 1.5-1.5" stroke="#555" stroke-width="0.7" fill="none"/>
<rect x="1178.4" y="261.4" width="5.4" height="5.4" fill="#fff" stroke="#141414" stroke-width="0.6"/><rect x="1178.4" y="261.4" width="1.8" height="1.8" fill="#555"/><rect x="1182" y="261.4" width="1.8" height="1.8" fill="#555"/><rect x="1180.2" y="263.2" width="1.8" height="1.8" fill="#555"/><rect x="1178.4" y="265" width="1.8" height="1.8" fill="#555"/><rect x="1182" y="265" width="1.8" height="1.8" fill="#555"/>
<path d="M1195.4 260.6l-3.6 4" stroke="#141414" stroke-width="1.1" stroke-linecap="round"/><path d="M1191.4 265q1.4.4.8 1.6t-2.8 1q.9-.6.9-1.6t1.1-1z" fill="#141414"/>
<path d="M1200.2 264h5.2M1202.8 261.4v5.2" stroke="#141414" stroke-width="0.8" fill="none"/><path d="M1199.7 264l1.2 -1.2v2.4zM1205.8999999999999 264l-1.2 -1.2v2.4zM1202.8 260.9l-1.2 1.2h2.4zM1202.8 267.1l-1.2 -1.2h2.4z" fill="#141414"/>
<path d="M1211.2 262.4h4.6v4.4h-4.6zM1214 262.4l2.8-1.8M1216.8 260.6v2" fill="none" stroke="#141414" stroke-width="0.7"/>
<rect x="1222.2" y="263.0" width="5" height="3.8" rx="0.5" fill="#141414" stroke="#141414" stroke-width="0.6"/><path d="M1223.2 263.0v-1.2a1.5 1.5 0 0 1 3 0v1.2" fill="none" stroke="#141414" stroke-width="0.7"/>
<path d="M1270.3 263.6l1.5 1.5 1.5-1.5" stroke="#555" stroke-width="0.7" fill="none"/>
<path d="M1178.6 282.1h1.4M1179.3 281.4v1.4" stroke="#222" stroke-width="0.6"/>
<path d="M1177.8 333.3h6.4M1181 332.5v1.4" stroke="#141414" stroke-width="0.7"/><path d="M1176.4 336.9a1.7 1.7 0 0 0 3.4 0zM1182.2 336.9a1.7 1.7 0 0 0 3.4 0z" fill="#141414"/><path d="M1178.1 333.3l-1.5 3.6M1178.1 333.3l1.5 3.6M1183.9 333.3l-1.5 3.6M1183.9 333.3l1.5 3.6" stroke="#141414" stroke-width="0.45"/>
<rect x="1191.7" y="332.3" width="2.2" height="3" rx="1" fill="none" stroke="#141414" stroke-width="0.6"/><rect x="1191.7" y="336.09999999999997" width="2.2" height="3" rx="1" fill="none" stroke="#141414" stroke-width="0.6"/><path d="M1192.8 334.09999999999997v3.2" stroke="#141414" stroke-width="0.6"/>
<path d="M1177.0 376.90000000000003v-1.2l0.9523809523809523 -2.2l0.9523809523809523 1.9l1.1428571428571428 -3.4l1.1428571428571428 3.2l1.0476190476190477 -2.6l1.0476190476190477 2.4l0.8571428571428571 -1.8l0.8571428571428571 1.6v2.1z" fill="#141414"/><path d="M1177.0 377.50000000000006h8" stroke="#141414" stroke-width="0.8"/>
<rect x="1191.7" y="371.80000000000007" width="2.2" height="3" rx="1" fill="none" stroke="#141414" stroke-width="0.6"/><rect x="1191.7" y="375.6" width="2.2" height="3" rx="1" fill="none" stroke="#141414" stroke-width="0.6"/><path d="M1192.8 373.6v3.2" stroke="#141414" stroke-width="0.6"/>
<path d="M1160.3 394.15q3.4-3.6 6.8 0q-3.4 3.6-6.8 0z" fill="#141414"/><circle cx="1163.7" cy="394.15" r="1.35" fill="#f0f0f0"/><circle cx="1163.7" cy="394.15" r="0.7" fill="#141414"/>
<path d="M1172.2 389.15v-2.4h2.6M1187.4 386.75h2.6v2.4M1190 399.15v2.4h-2.6M1174.8 401.54999999999995h-2.6v-2.4" fill="none" stroke="#111" stroke-width="0.8"/>
<path d="M1180.4 395.54999999999995h1.6M1181.2 394.75v1.6" stroke="#111" stroke-width="0.7"/>
<rect x="1191.7" y="408.25" width="2.2" height="3" rx="1" fill="none" stroke="#141414" stroke-width="0.6"/><rect x="1191.7" y="412.04999999999995" width="2.2" height="3" rx="1" fill="none" stroke="#141414" stroke-width="0.6"/><path d="M1192.8 410.04999999999995v3.2" stroke="#141414" stroke-width="0.6"/>
<rect x="1191.7" y="426.40000000000003" width="2.2" height="3" rx="1" fill="none" stroke="#141414" stroke-width="0.6"/><rect x="1191.7" y="430.2" width="2.2" height="3" rx="1" fill="none" stroke="#141414" stroke-width="0.6"/><path d="M1192.8 428.2v3.2" stroke="#141414" stroke-width="0.6"/>
<path d="M1160.3 486.4q3.4-3.6 6.8 0q-3.4 3.6-6.8 0z" fill="#141414"/><circle cx="1163.7" cy="486.4" r="1.35" fill="#f0f0f0"/><circle cx="1163.7" cy="486.4" r="0.7" fill="#141414"/>
<path d="M1265.6 505.5l1.6-1.6 1.6 1.6" stroke="#444" stroke-width="0.7" fill="none"/>
<path d="M1180.1 518.4q3.4-3.6 6.8 0q-3.4 3.6-6.8 0z" fill="#9a9a9a"/><circle cx="1183.5" cy="518.4" r="1.35" fill="#f0f0f0"/><circle cx="1183.5" cy="518.4" r="0.7" fill="#9a9a9a"/>
<path d="M1189.1 528.2q3.4-3.6 6.8 0q-3.4 3.6-6.8 0z" fill="#9a9a9a"/><circle cx="1192.5" cy="528.2" r="1.35" fill="#f0f0f0"/><circle cx="1192.5" cy="528.2" r="0.7" fill="#9a9a9a"/>
<path d="M1160.3 542.45q3.4-3.6 6.8 0q-3.4 3.6-6.8 0z" fill="#141414"/><circle cx="1163.7" cy="542.45" r="1.35" fill="#f0f0f0"/><circle cx="1163.7" cy="542.45" r="0.7" fill="#141414"/>
<rect x="1256.5" y="541.85" width="5" height="3.8" rx="0.5" fill="none" stroke="#333" stroke-width="0.6"/><path d="M1257.5 541.85v-1.2a1.5 1.5 0 0 1 3 0v1.2" fill="none" stroke="#333" stroke-width="0.7"/>
<path d="M1144.4 576L1166.2 576L1160.3 618.6L1144.4 618.6L1151 583zM1170.6 576L1183.7 576L1177.2 618.6L1160.4 618.6L1161.5 610.6L1165.6 610.6zM1187.0 584.6h12l-4.6 34h-12zM1188.2 576h12.4l-0.8 5.6h-12.4zM1204.5 584.6h12l-4.6 34h-12zM1205.7 576h12.4l-0.8 5.6h-12.4zM1221.0 584.6h12l-4.6 34h-12zM1222.2 576h12.4l-0.8 5.6h-12.4zM1239.0 576h32.8l-0.8 5.9h-32.8zM1238.0 583.2h32.6l-1.0 7.2h-32.6zM1236.8 591.6h32.6l-1.0 7.4h-32.6zM1235.0 600.2h14.2l-2.5 18.4h-14.2zM1252.4 600.2h17l-2.5 18.4h-17z" fill="rgba(255,255,255,0.6)"/>
<rect x="1176.4" y="689.6" width="3.2" height="2.6" rx="1.3" fill="none" stroke="#b5b5b5" stroke-width="0.6"/><rect x="1179.4" y="689.6" width="3.2" height="2.6" rx="1.3" fill="none" stroke="#b5b5b5" stroke-width="0.6"/>
<path d="M1196.8 694.4h-1.2l1.2-1.2z" fill="#222"/>
<rect x="1203.2" y="688.4" width="7.2" height="5.2" fill="#141414"/><circle cx="1206.8" cy="691" r="1.6" fill="#f0f0f0"/>
<circle cx="1220.6" cy="691" r="2.8" fill="none" stroke="#141414" stroke-width="0.7"/><path d="M1218.6 689a2.8 2.8 0 0 0 4 4z" fill="#141414"/><path d="M1224.6 694.4h-1.2l1.2-1.2z" fill="#222"/>
<rect x="1230.6" y="689.0" width="7" height="5" rx="0.6" fill="none" stroke="#333" stroke-width="0.7"/>
<path d="M1230.6 689.0v-.9h2.6l.6.9" stroke="#333" stroke-width="0.7" fill="none"/>
<path d="M1245 688.8h4.8v4.8h-3l-1.8-1.8z" fill="none" stroke="#222" stroke-width="0.7"/><path d="M1245 691.8h1.8v1.8" fill="none" stroke="#222" stroke-width="0.5"/>
<path d="M1258 689.2h5.6M1258.8 689.2l.4 4.8h3.2l.4-4.8M1259.8 688.3h2M1260 690.2v3M1261.6 690.2v3" stroke="#222" stroke-width="0.6" fill="none"/>
</svg>
</div></body></html>
